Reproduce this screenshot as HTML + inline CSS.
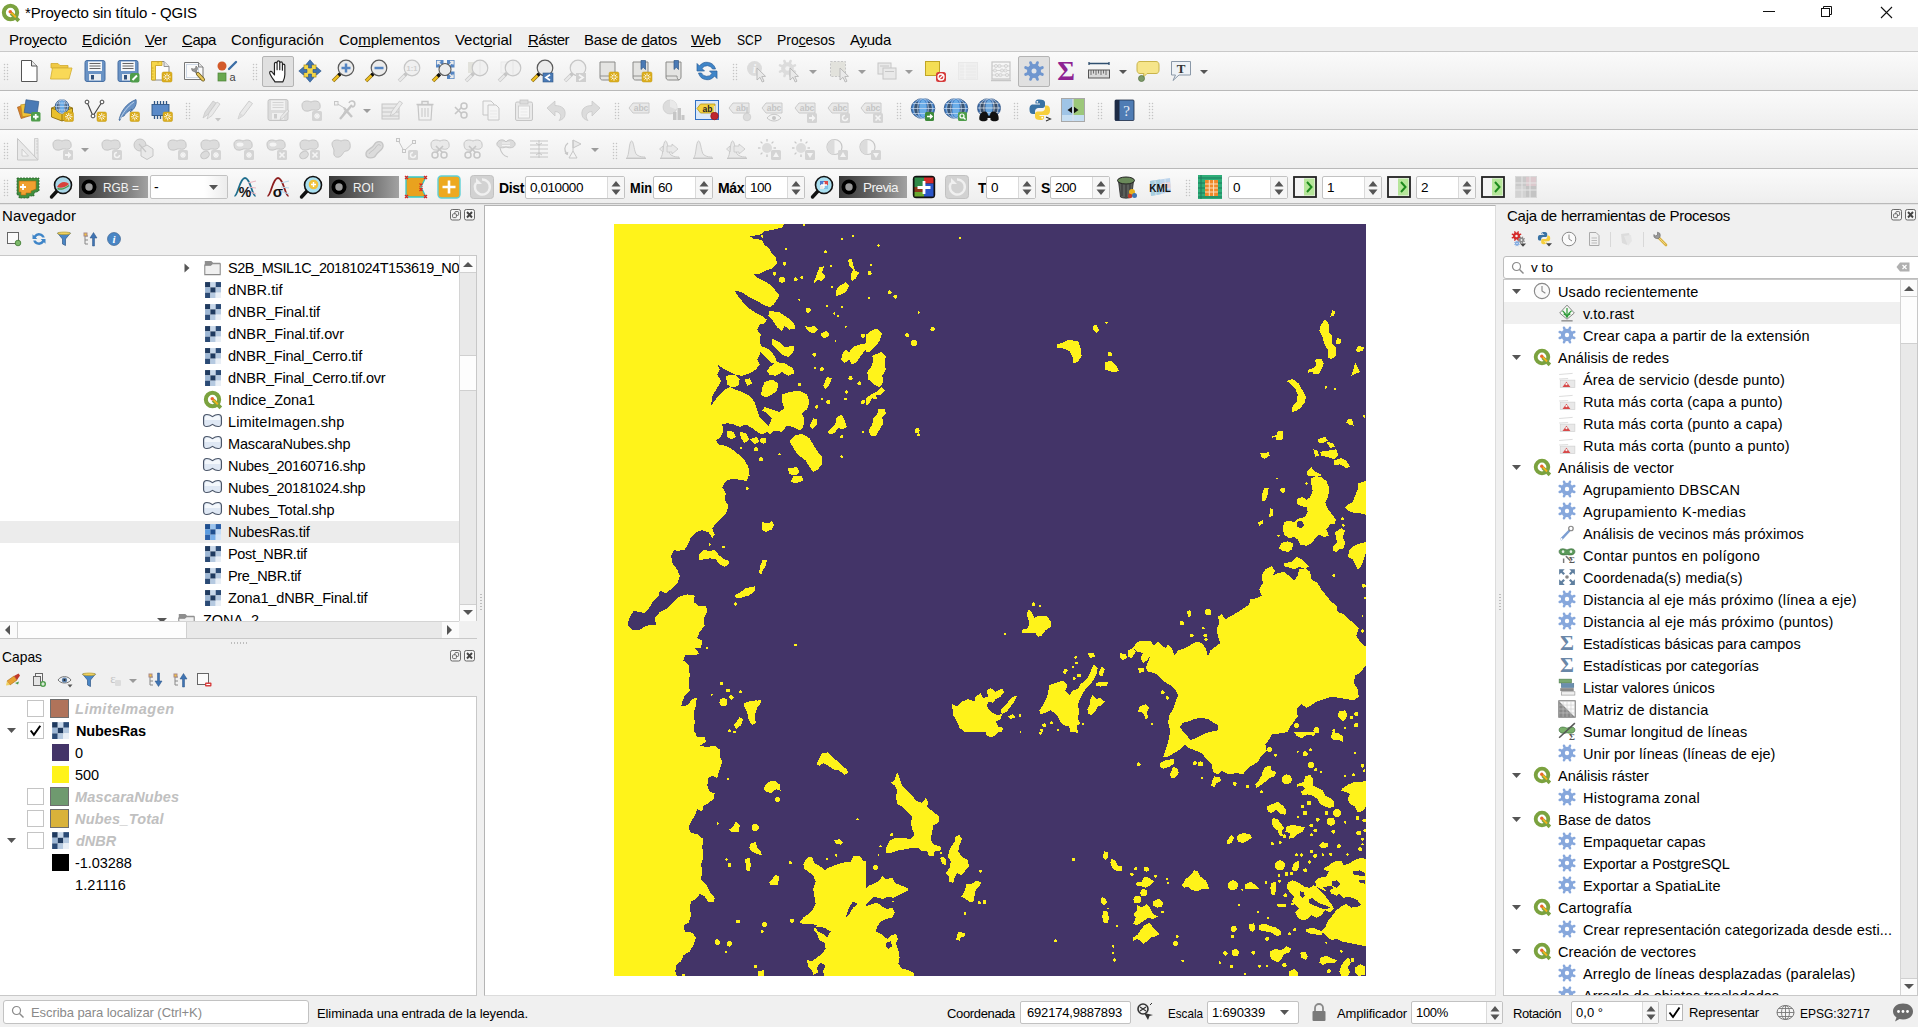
<!DOCTYPE html>
<html lang="es"><head><meta charset="utf-8"><title>*Proyecto sin título - QGIS</title><style>
html,body{margin:0;padding:0;}
body{width:1918px;height:1027px;overflow:hidden;background:#f0f0f0;font-family:"Liberation Sans", sans-serif;}
#app{position:relative;width:1918px;height:1027px;overflow:hidden;background:#f0f0f0;}
.b{position:absolute;}
.ic{position:absolute;overflow:visible;}
.t{position:absolute;white-space:nowrap;line-height:20px;height:20px;}
.t u{text-decoration:underline;text-underline-offset:1px;}
</style></head>
<body><div id="app">
<div class="b" style="left:0px;top:0px;width:1918px;height:27px;background:#fff;"></div>
<svg class="ic" style="left:1px;top:3px" width="19" height="19" viewBox="0 0 16 16"><circle cx="8" cy="8" r="5.6" fill="none" stroke="#7ba23f" stroke-width="3.4"/><path d="M8.5 8.5 L15 15" stroke="#7ba23f" stroke-width="3.2"/><path d="M8 7.5 L12.5 12" stroke="#f0b41c" stroke-width="1.6"/><circle cx="7.8" cy="7.3" r="1.5" fill="#e8682c"/></svg>
<span class="t" style="left:25px;top:3px;font-size:15px;color:#000;letter-spacing:-0.145px;">*Proyecto sin título - QGIS</span>
<svg class="ic" style="left:1755px;top:0px" width="163" height="27" viewBox="0 0 163 27"><path d="M8 11.500 H20" stroke="#111" stroke-width="1"/><rect x="66.5" y="8.500" width="8" height="8" fill="none" stroke="#111"/><path d="M68.500 8.500 V6.500 H76.500 V14.500 H74.500" fill="none" stroke="#111"/><path d="M126 7 L137 18 M137 7 L126 18" stroke="#111" stroke-width="1.1"/></svg>
<div class="b" style="left:0px;top:27px;width:1918px;height:24px;background:#f0f0f0;"></div>
<div class="b" style="left:0px;top:51px;width:1918px;height:1px;background:#c9c9c9;"></div>
<span class="t" style="left:9px;top:29.5px;font-size:15px;color:#000;letter-spacing:-0.150px;">Pro<u>y</u>ecto</span>
<span class="t" style="left:82px;top:29.5px;font-size:15px;color:#000;letter-spacing:-0.031px;"><u>E</u>dición</span>
<span class="t" style="left:145px;top:29.5px;font-size:15px;color:#000;letter-spacing:-0.177px;"><u>V</u>er</span>
<span class="t" style="left:182px;top:29.5px;font-size:15px;color:#000;letter-spacing:-0.469px;"><u>C</u>apa</span>
<span class="t" style="left:231px;top:29.5px;font-size:15px;color:#000;letter-spacing:0.032px;">Con<u>f</u>iguración</span>
<span class="t" style="left:339px;top:29.5px;font-size:15px;color:#000;letter-spacing:0.008px;">Co<u>m</u>plementos</span>
<span class="t" style="left:455px;top:29.5px;font-size:15px;color:#000;letter-spacing:-0.061px;">Vect<u>o</u>rial</span>
<span class="t" style="left:528px;top:29.5px;font-size:15px;color:#000;letter-spacing:-0.534px;"><u>R</u>áster</span>
<span class="t" style="left:584px;top:29.5px;font-size:15px;color:#000;letter-spacing:-0.225px;">Base de <u>d</u>atos</span>
<span class="t" style="left:691px;top:29.5px;font-size:15px;color:#000;letter-spacing:-0.193px;"><u>W</u>eb</span>
<span class="t" style="left:737px;top:29.5px;font-size:15px;color:#000;transform:scaleX(0.8105);transform-origin:0 50%;">SCP</span>
<span class="t" style="left:777px;top:29.5px;font-size:15px;color:#000;transform:scaleX(0.9275);transform-origin:0 50%;">Pro<u>c</u>esos</span>
<span class="t" style="left:850px;top:29.5px;font-size:15px;color:#000;letter-spacing:-0.253px;">A<u>y</u>uda</span>
<div class="b" style="left:0px;top:52px;width:1918px;height:38px;background:linear-gradient(#fafafa,#eeeeee);"></div>
<div class="b" style="left:0px;top:90px;width:1918px;height:1px;background:#b9b9b9;"></div>
<div class="b" style="left:0px;top:91px;width:1918px;height:38px;background:linear-gradient(#fafafa,#eeeeee);"></div>
<div class="b" style="left:0px;top:129px;width:1918px;height:1px;background:#b9b9b9;"></div>
<div class="b" style="left:0px;top:130px;width:1918px;height:38px;background:linear-gradient(#fafafa,#eeeeee);"></div>
<div class="b" style="left:0px;top:168px;width:1918px;height:1px;background:#b9b9b9;"></div>
<div class="b" style="left:0px;top:169px;width:1918px;height:34px;background:linear-gradient(#fafafa,#eeeeee);"></div>
<div class="b" style="left:0px;top:203px;width:1918px;height:1px;background:#b9b9b9;"></div>
<div class="b" style="left:0px;top:204px;width:1918px;height:1px;background:#e4e4e4;"></div>
<div class="b" style="left:3px;top:63px;width:6px;height:18px;background-image:radial-gradient(circle,#c4c4c4 0.75px,transparent 1.05px);background-size:3px 3px"></div>
<svg class="ic" style="left:17px;top:59px" width="24" height="24" viewBox="0 0 24 24"><path d="M4.500 1.500 H14.500 L20 7 V22.500 H4.500Z" fill="#fff" stroke="#555" stroke-width="1"/><path d="M14.500 1.500 V7 H20" fill="#e8e8e8" stroke="#555" stroke-width="1"/></svg>
<svg class="ic" style="left:49px;top:59px" width="24" height="24" viewBox="0 0 24 24"><path d="M2 6 V4.5 H9 L11 6.5 H19 V9 H2Z" fill="#f0c945" stroke="#d0a92e" stroke-width="0.8"/><path d="M1.5 20 L3.5 9 H23 L20 20Z" fill="#f9d957" stroke="#d6b23a" stroke-width="0.9"/></svg>
<svg class="ic" style="left:83px;top:59px" width="24" height="24" viewBox="0 0 24 24"><rect x="2" y="1.5" width="20" height="21" rx="2" fill="#6a93c5" stroke="#466fa3" stroke-width="1"/><rect x="5" y="2.5" width="14" height="9.5" fill="#f4f6f8"/><line x1="6.5" y1="4.5" x2="17.5" y2="4.5" stroke="#555" stroke-width="0.9"/><line x1="6.5" y1="7" x2="17.5" y2="7" stroke="#555" stroke-width="0.9"/><line x1="6.5" y1="9.5" x2="17.5" y2="9.5" stroke="#555" stroke-width="0.9"/><rect x="6" y="15" width="12" height="6.5" fill="#e8ecf0"/><rect x="8" y="16" width="3" height="4.5" fill="#2f4f7a"/></svg>
<svg class="ic" style="left:116px;top:59px" width="24" height="24" viewBox="0 0 24 24"><rect x="2" y="1.5" width="20" height="21" rx="2" fill="#6a93c5" stroke="#466fa3" stroke-width="1"/><rect x="5" y="2.5" width="14" height="9.5" fill="#f4f6f8"/><line x1="6.5" y1="4.5" x2="17.5" y2="4.5" stroke="#555" stroke-width="0.9"/><line x1="6.5" y1="7" x2="17.5" y2="7" stroke="#555" stroke-width="0.9"/><line x1="6.5" y1="9.5" x2="17.5" y2="9.5" stroke="#555" stroke-width="0.9"/><rect x="6" y="15" width="12" height="6.5" fill="#e8ecf0"/><rect x="8" y="16" width="3" height="4.5" fill="#2f4f7a"/><rect x="14" y="14" width="9.5" height="9.5" rx="2" fill="#4f9d4b"/><path d="M16.5 21 L21 16.5" stroke="#fff" stroke-width="2"/></svg>
<svg class="ic" style="left:149px;top:59px" width="24" height="24" viewBox="0 0 24 24"><path d="M3 2.5 H15 L20 7.5 V21 H3Z" fill="#fdfdfd" stroke="#8a8a8a" stroke-width="1"/><path d="M15 2.5 V7.5 H20" fill="#e4e4e4" stroke="#8a8a8a" stroke-width="0.9"/><path d="M2.5 2.5 H13 V6.5 H6.5 V21 H2.5Z" fill="#f6d648" stroke="#c9a52a" stroke-width="0.9"/><path d="M2.5 9 h2 M2.5 12 h2 M2.5 15 h2 M2.5 18 h2 M9 2.5 v2" stroke="#c9a52a" stroke-width="0.8"/><rect x="13" y="13" width="10" height="10" rx="1.5" fill="#dcae1e" stroke="#c39a14" stroke-width="0.5"/><g stroke="#fff" stroke-width="0.9" stroke-linecap="round"><line x1="14.7" y1="18.0" x2="21.3" y2="18.0"/><line x1="18.0" y1="14.7" x2="18.0" y2="21.3"/><line x1="15.7" y1="15.7" x2="20.3" y2="20.3"/><line x1="15.7" y1="20.3" x2="20.3" y2="15.7"/></g><circle cx="18.0" cy="18.0" r="1.1" fill="#dcae1e"/></svg>
<svg class="ic" style="left:182px;top:59px" width="24" height="24" viewBox="0 0 24 24"><path d="M2.5 3.5 H16.5 L21 8 V20.5 H2.5Z" fill="#fbfbfb" stroke="#777" stroke-width="1"/><rect x="4.5" y="5.500" width="12" height="13" fill="none" stroke="#c4d0e0" stroke-width="0.8"/><path d="M16.500 3.500 V8 H21" fill="#e0e0e0" stroke="#777" stroke-width="0.9"/><path d="M9.500 9.500 a3 3 0 1 0 4.500 -2.500 l-0.500 2.500 l-2 0.500z" fill="#9a9a9a" stroke="#6a6a6a" stroke-width="0.6"/><path d="M13 12 L16 15" stroke="#8a8a8a" stroke-width="2.4"/><path d="M16 15 L21 20.500" stroke="#6b5a20" stroke-width="4" stroke-linecap="round"/><path d="M16 15 L21 20.500" stroke="#e8c75a" stroke-width="2.4" stroke-linecap="round"/></svg>
<svg class="ic" style="left:215px;top:59px" width="24" height="24" viewBox="0 0 24 24"><circle cx="7" cy="7" r="4.5" fill="#d35a2a"/><rect x="3" y="14" width="8" height="8" fill="#6aa84f" stroke="#4c8237" stroke-width="0.7"/><line x1="14" y1="10" x2="21" y2="3" stroke="#3c6ea5" stroke-width="2.4" stroke-linecap="round"/><text x="17.5" y="21.5" font-family="Liberation Sans, sans-serif" font-size="11" text-anchor="middle" fill="#444">a</text></svg>
<div class="b" style="left:252px;top:63px;width:6px;height:18px;background-image:radial-gradient(circle,#c4c4c4 0.75px,transparent 1.05px);background-size:3px 3px"></div>
<div class="b" style="left:262px;top:56px;width:32px;height:31px;background:#e0e0e0;border:1px solid #b4b4b4;box-sizing:border-box;border-radius:2px;"></div>
<svg class="ic" style="left:265px;top:59px" width="24" height="24" viewBox="0 0 24 24"><g transform="translate(1.500 -0.500) scale(1.06)"><path d="M8 22 C6 19 3.5 16 3 13.5 C2.8 12 4.5 11.5 5.5 13 L7.5 15.5 V5 C7.5 3.3 10 3.3 10 5 V10.5 V3.5 C10 1.8 12.5 1.8 12.5 3.5 V10.5 V4.5 C12.5 2.8 15 2.8 15 4.5 V11 V6.5 C15 5 17.3 5 17.3 6.5 V15 C17.3 18 16.5 20 15.5 22Z" fill="#fff" stroke="#222" stroke-width="1.1" stroke-linejoin="round"/></g></svg>
<svg class="ic" style="left:298px;top:59px" width="24" height="24" viewBox="0 0 24 24"><rect x="6" y="6" width="12" height="12" fill="#f2d64a" stroke="#b79b1d" stroke-width="0.8"/><g fill="#3f74b3" stroke="#2a5285" stroke-width="0.6"><path d="M12 0.8 L16 5.5 H13.5 V9 H10.5 V5.5 H8Z"/><path d="M12 23.2 L16 18.5 H13.5 V15 H10.5 V18.5 H8Z"/><path d="M0.8 12 L5.5 8 V10.5 H9 V13.5 H5.5 V16Z"/><path d="M23.2 12 L18.5 8 V10.5 H15 V13.5 H18.5 V16Z"/></g></svg>
<svg class="ic" style="left:331px;top:59px" width="24" height="24" viewBox="0 0 24 24"><line x1="2" y1="22" x2="9" y2="15" stroke="#8a6d10" stroke-width="3.6"/><line x1="2.300" y1="21.700" x2="8.500" y2="15.500" stroke="#f0c020" stroke-width="2.2"/><line x1="7.500" y1="16.500" x2="9.800" y2="14.200" stroke="#111" stroke-width="3.2"/><circle cx="15" cy="9" r="7.8" fill="#ebebeb" stroke="#5a5a5a" stroke-width="1.2"/><path d="M10.500 9 H19.500 M15 4.500 V13.500" stroke="#5585c2" stroke-width="2.5"/></svg>
<svg class="ic" style="left:364px;top:59px" width="24" height="24" viewBox="0 0 24 24"><line x1="2" y1="22" x2="9" y2="15" stroke="#8a6d10" stroke-width="3.6"/><line x1="2.300" y1="21.700" x2="8.500" y2="15.500" stroke="#f0c020" stroke-width="2.2"/><line x1="7.500" y1="16.500" x2="9.800" y2="14.200" stroke="#111" stroke-width="3.2"/><circle cx="15" cy="9" r="7.8" fill="#ebebeb" stroke="#5a5a5a" stroke-width="1.2"/><path d="M10.500 9 H19.500" stroke="#5585c2" stroke-width="2.5"/></svg>
<svg class="ic" style="left:397px;top:59px" width="24" height="24" viewBox="0 0 24 24"><line x1="2" y1="22" x2="9" y2="15" stroke="#c6c6c6" stroke-width="3.6"/><line x1="2.300" y1="21.700" x2="8.500" y2="15.500" stroke="#e9e9e9" stroke-width="2.2"/><line x1="7.500" y1="16.500" x2="9.800" y2="14.200" stroke="#c6c6c6" stroke-width="3.2"/><circle cx="15" cy="9" r="7.8" fill="#f0f0f0" stroke="#c6c6c6" stroke-width="1.2"/><text x="15" y="11.800" font-family="Liberation Sans, sans-serif" font-size="7.5" font-weight="bold" text-anchor="middle" fill="#cfcfcf">1:1</text></svg>
<svg class="ic" style="left:431px;top:59px" width="24" height="24" viewBox="0 0 24 24"><line x1="2" y1="22" x2="8" y2="16" stroke="#8a6d10" stroke-width="3.6"/><line x1="2.300" y1="21.700" x2="7.500" y2="16.500" stroke="#f0c020" stroke-width="2.2"/><line x1="6.500" y1="17.500" x2="9" y2="15" stroke="#111" stroke-width="3.2"/><g fill="#5585c2"><rect x="5" y="1" width="7.500" height="7.500"/><rect x="16" y="1" width="7.500" height="7.500"/><rect x="16" y="12.500" width="7.500" height="7.500"/></g><circle cx="14" cy="10.500" r="6" fill="#ebebeb" stroke="#5a5a5a" stroke-width="1.1"/><g stroke="#ebebeb" stroke-width="1.4" fill="none"><path d="M6.500 2.500 L10 6 M6.500 5.500 V2.500 H9.500"/><path d="M22 2.500 L18.500 6 M22 5.500 V2.500 H19"/><path d="M22 18.500 L18.500 15 M22 15.500 V18.500 H19"/></g></svg>
<svg class="ic" style="left:464px;top:59px" width="24" height="24" viewBox="0 0 24 24"><rect x="4" y="3" width="11" height="11" fill="#e2e2dc"/><line x1="2" y1="22" x2="9" y2="15" stroke="#c6c6c6" stroke-width="3.6"/><line x1="2.300" y1="21.700" x2="8.500" y2="15.500" stroke="#e9e9e9" stroke-width="2.2"/><line x1="7.500" y1="16.500" x2="9.800" y2="14.200" stroke="#c6c6c6" stroke-width="3.2"/><circle cx="16" cy="9" r="7.8" fill="#f0f0f0" stroke="#c6c6c6" stroke-width="1.2"/><path d="M16 2 V16" stroke="#e9e9e9" stroke-width="1.5"/></svg>
<svg class="ic" style="left:497px;top:59px" width="24" height="24" viewBox="0 0 24 24"><rect x="4" y="3" width="11" height="11" fill="#f2f2f2" stroke="#e9e9e9"/><line x1="2" y1="22" x2="9" y2="15" stroke="#c6c6c6" stroke-width="3.6"/><line x1="2.300" y1="21.700" x2="8.500" y2="15.500" stroke="#e9e9e9" stroke-width="2.2"/><line x1="7.500" y1="16.500" x2="9.800" y2="14.200" stroke="#c6c6c6" stroke-width="3.2"/><circle cx="16" cy="9" r="7.8" fill="#f0f0f0" stroke="#c6c6c6" stroke-width="1.2"/><path d="M16 2 V16" stroke="#e9e9e9" stroke-width="1.5"/></svg>
<svg class="ic" style="left:530px;top:59px" width="24" height="24" viewBox="0 0 24 24"><line x1="2" y1="22" x2="9" y2="15" stroke="#8a6d10" stroke-width="3.6"/><line x1="2.300" y1="21.700" x2="8.500" y2="15.500" stroke="#f0c020" stroke-width="2.2"/><line x1="7.500" y1="16.500" x2="9.800" y2="14.200" stroke="#111" stroke-width="3.2"/><circle cx="15" cy="9" r="7.8" fill="#ebebeb" stroke="#5a5a5a" stroke-width="1.2"/><rect x="13" y="14" width="10" height="9" fill="#4a7ab5" stroke="#2f5786" stroke-width="0.6"/><path d="M20 15.8 L16 18.5 L20 21.2" fill="none" stroke="#fff" stroke-width="1.8"/></svg>
<svg class="ic" style="left:563px;top:59px" width="24" height="24" viewBox="0 0 24 24"><line x1="2" y1="22" x2="9" y2="15" stroke="#c6c6c6" stroke-width="3.6"/><line x1="2.300" y1="21.700" x2="8.500" y2="15.500" stroke="#e9e9e9" stroke-width="2.2"/><line x1="7.500" y1="16.500" x2="9.800" y2="14.200" stroke="#c6c6c6" stroke-width="3.2"/><circle cx="15" cy="9" r="7.8" fill="#f0f0f0" stroke="#c6c6c6" stroke-width="1.2"/><rect x="13" y="14" width="10" height="9" fill="#cfcfcf"/><path d="M16 15.8 L20 18.5 L16 21.2" fill="none" stroke="#f4f4f4" stroke-width="1.8"/></svg>
<svg class="ic" style="left:596px;top:59px" width="24" height="24" viewBox="0 0 24 24"><path d="M4 3 H19 V18 C19 20 17.5 21 16 21 H6.5 C4.5 21 4 19.5 4 18Z" fill="#e4e4e2" stroke="#8a8a88" stroke-width="1"/><path d="M4 17 H15 C15 19.5 16 21 17 21" fill="none" stroke="#8a8a88" stroke-width="0.9"/><rect x="13" y="13" width="10" height="10" rx="1.5" fill="#dcae1e" stroke="#c39a14" stroke-width="0.5"/><g stroke="#fff" stroke-width="0.9" stroke-linecap="round"><line x1="14.7" y1="18.0" x2="21.3" y2="18.0"/><line x1="18.0" y1="14.7" x2="18.0" y2="21.3"/><line x1="15.7" y1="15.7" x2="20.3" y2="20.3"/><line x1="15.7" y1="20.3" x2="20.3" y2="15.7"/></g><circle cx="18.0" cy="18.0" r="1.1" fill="#dcae1e"/></svg>
<svg class="ic" style="left:629px;top:59px" width="24" height="24" viewBox="0 0 24 24"><path d="M4 3 H19 V18 C19 20 17.5 21 16 21 H6.5 C4.5 21 4 19.5 4 18Z" fill="#e4e4e2" stroke="#8a8a88" stroke-width="1"/><path d="M4 17 H15 C15 19.5 16 21 17 21" fill="none" stroke="#8a8a88" stroke-width="0.9"/><path d="M12 1.5 H16.5 V10.5 L14.25 8.3 L12 10.5Z" fill="#4a7ab5" stroke="#2f5786" stroke-width="0.7"/><rect x="13" y="13" width="10" height="10" rx="1.5" fill="#dcae1e" stroke="#c39a14" stroke-width="0.5"/><g stroke="#fff" stroke-width="0.9" stroke-linecap="round"><line x1="14.7" y1="18.0" x2="21.3" y2="18.0"/><line x1="18.0" y1="14.7" x2="18.0" y2="21.3"/><line x1="15.7" y1="15.7" x2="20.3" y2="20.3"/><line x1="15.7" y1="20.3" x2="20.3" y2="15.7"/></g><circle cx="18.0" cy="18.0" r="1.1" fill="#dcae1e"/></svg>
<svg class="ic" style="left:662px;top:59px" width="24" height="24" viewBox="0 0 24 24"><path d="M4 3 H19 V18 C19 20 17.5 21 16 21 H6.5 C4.5 21 4 19.5 4 18Z" fill="#e4e4e2" stroke="#8a8a88" stroke-width="1"/><path d="M4 17 H15 C15 19.5 16 21 17 21" fill="none" stroke="#8a8a88" stroke-width="0.9"/><path d="M12 1.5 H16.5 V10.5 L14.25 8.3 L12 10.5Z" fill="#4a7ab5" stroke="#2f5786" stroke-width="0.7"/></svg>
<svg class="ic" style="left:695px;top:59px" width="24" height="24" viewBox="0 0 24 24"><path d="M20.5 10 A9 9 0 0 0 4.5 7 L2 4.5 V12 H9.5 L7 9.5 A6 6 0 0 1 17.5 10Z" fill="#3f85c8" stroke="#2a5f99" stroke-width="0.7"/><path d="M3.5 14 A9 9 0 0 0 19.5 17 L22 19.5 V12 H14.5 L17 14.5 A6 6 0 0 1 6.5 14Z" fill="#3f85c8" stroke="#2a5f99" stroke-width="0.7"/></svg>
<div class="b" style="left:732px;top:63px;width:6px;height:18px;background-image:radial-gradient(circle,#c4c4c4 0.75px,transparent 1.05px);background-size:3px 3px"></div>
<svg class="ic" style="left:745px;top:59px" width="24" height="24" viewBox="0 0 24 24"><circle cx="9.5" cy="9.5" r="7.5" fill="#dcdcdc"/><text x="9.5" y="13.5" font-family="Liberation Serif, serif" font-size="12" font-weight="bold" font-style="italic" text-anchor="middle" fill="#f4f4f4">i</text><path d="M12 9 L12 21 L15 18.3 L17.2 23 L19 22.2 L16.8 17.6 L20.5 17.3Z" fill="#e9e9e9" stroke="#b5b5b5" stroke-width="0.9"/></svg>
<svg class="ic" style="left:778px;top:59px" width="24" height="24" viewBox="0 0 24 24"><line x1="14.07" y1="11.39" x2="16.98" y2="12.60" stroke="#dcdcdc" stroke-width="2.61" stroke-linecap="round"/><line x1="11.39" y1="14.07" x2="12.60" y2="16.98" stroke="#dcdcdc" stroke-width="2.61" stroke-linecap="round"/><line x1="7.61" y1="14.07" x2="6.40" y2="16.98" stroke="#dcdcdc" stroke-width="2.61" stroke-linecap="round"/><line x1="4.93" y1="11.39" x2="2.02" y2="12.60" stroke="#dcdcdc" stroke-width="2.61" stroke-linecap="round"/><line x1="4.93" y1="7.61" x2="2.02" y2="6.40" stroke="#dcdcdc" stroke-width="2.61" stroke-linecap="round"/><line x1="7.61" y1="4.93" x2="6.40" y2="2.02" stroke="#dcdcdc" stroke-width="2.61" stroke-linecap="round"/><line x1="11.39" y1="4.93" x2="12.60" y2="2.02" stroke="#dcdcdc" stroke-width="2.61" stroke-linecap="round"/><line x1="14.07" y1="7.61" x2="16.98" y2="6.40" stroke="#dcdcdc" stroke-width="2.61" stroke-linecap="round"/><circle cx="9.5" cy="9.5" r="6.30" fill="#dcdcdc"/><circle cx="9.5" cy="9.5" r="2.25" fill="#f2f2f2"/><path d="M12 9 L12 21 L15 18.3 L17.2 23 L19 22.2 L16.8 17.6 L20.5 17.3Z" fill="#e9e9e9" stroke="#b5b5b5" stroke-width="0.9"/></svg>
<svg class="ic" style="left:809.0px;top:69.5px" width="8" height="4" viewBox="0 0 8 4"><path d="M0 0 H8 L4.0 4Z" fill="#9c9c9c"/></svg>
<svg class="ic" style="left:828px;top:59px" width="24" height="24" viewBox="0 0 24 24"><rect x="2.5" y="2.5" width="15" height="15" fill="#e2e2dc" stroke="#c6c6c6" stroke-dasharray="2 1.5"/><path d="M12 9 L12 21 L15 18.3 L17.2 23 L19 22.2 L16.8 17.6 L20.5 17.3Z" fill="#e9e9e9" stroke="#b5b5b5" stroke-width="0.9"/></svg>
<svg class="ic" style="left:858.0px;top:69.5px" width="8" height="4" viewBox="0 0 8 4"><path d="M0 0 H8 L4.0 4Z" fill="#9c9c9c"/></svg>
<svg class="ic" style="left:875px;top:59px" width="24" height="24" viewBox="0 0 24 24"><rect x="3" y="4" width="13" height="11" fill="#e9e9e9" stroke="#c6c6c6"/><rect x="8" y="9" width="13" height="11" fill="#e9e9e9" stroke="#c6c6c6"/><line x1="5" y1="7" x2="14" y2="7" stroke="#c6c6c6"/><line x1="10" y1="12.5" x2="19" y2="12.5" stroke="#c6c6c6"/></svg>
<svg class="ic" style="left:905.0px;top:69.5px" width="8" height="4" viewBox="0 0 8 4"><path d="M0 0 H8 L4.0 4Z" fill="#9c9c9c"/></svg>
<svg class="ic" style="left:923px;top:59px" width="24" height="24" viewBox="0 0 24 24"><rect x="2.5" y="2.5" width="14" height="14" fill="#f4de55" stroke="#c0a526" stroke-width="1"/><rect x="13" y="13" width="10" height="10" rx="2.5" fill="#d63a3a"/><circle cx="18" cy="18" r="3" fill="none" stroke="#fff" stroke-width="1.3"/><line x1="16" y1="20" x2="20" y2="16" stroke="#fff" stroke-width="1.3"/></svg>
<svg class="ic" style="left:956px;top:59px" width="24" height="24" viewBox="0 0 24 24"><rect x="2.5" y="3.5" width="19" height="17" fill="#efefef" stroke="#e9e9e9"/><line x1="4" y1="7" x2="20" y2="7" stroke="#e9e9e9" stroke-width="1.2"/><line x1="4" y1="10" x2="20" y2="10" stroke="#e9e9e9" stroke-width="1.2"/><line x1="4" y1="13" x2="20" y2="13" stroke="#e9e9e9" stroke-width="1.2"/><line x1="4" y1="16" x2="20" y2="16" stroke="#e9e9e9" stroke-width="1.2"/><line x1="4" y1="19" x2="20" y2="19" stroke="#e9e9e9" stroke-width="1.2"/><line x1="9" y1="4" x2="9" y2="20" stroke="#f6f6f6"/></svg>
<svg class="ic" style="left:989px;top:59px" width="24" height="24" viewBox="0 0 24 24"><rect x="3" y="3" width="18" height="17" fill="none" stroke="#c6c6c6" stroke-width="1.2"/><line x1="2" y1="21.5" x2="22" y2="21.5" stroke="#c6c6c6" stroke-width="1.5"/><line x1="3" y1="7" x2="21" y2="7" stroke="#c6c6c6" stroke-width="0.7"/><circle cx="7" cy="7" r="1.6" fill="#e9e9e9" stroke="#c6c6c6" stroke-width="0.6"/><circle cx="10.5" cy="7" r="1.6" fill="#e9e9e9" stroke="#c6c6c6" stroke-width="0.6"/><circle cx="17" cy="7" r="1.6" fill="#e9e9e9" stroke="#c6c6c6" stroke-width="0.6"/><line x1="3" y1="11.5" x2="21" y2="11.5" stroke="#c6c6c6" stroke-width="0.7"/><circle cx="6" cy="11.5" r="1.6" fill="#e9e9e9" stroke="#c6c6c6" stroke-width="0.6"/><circle cx="13" cy="11.5" r="1.6" fill="#e9e9e9" stroke="#c6c6c6" stroke-width="0.6"/><circle cx="16.5" cy="11.5" r="1.6" fill="#e9e9e9" stroke="#c6c6c6" stroke-width="0.6"/><line x1="3" y1="16" x2="21" y2="16" stroke="#c6c6c6" stroke-width="0.7"/><circle cx="8" cy="16" r="1.6" fill="#e9e9e9" stroke="#c6c6c6" stroke-width="0.6"/><circle cx="11.5" cy="16" r="1.6" fill="#e9e9e9" stroke="#c6c6c6" stroke-width="0.6"/><circle cx="18" cy="16" r="1.6" fill="#e9e9e9" stroke="#c6c6c6" stroke-width="0.6"/></svg>
<div class="b" style="left:1018px;top:56px;width:32px;height:31px;background:#e0e0e0;border:1px solid #b4b4b4;box-sizing:border-box;border-radius:2px;"></div>
<svg class="ic" style="left:1022px;top:59px" width="24" height="24" viewBox="0 0 24 24"><line x1="17.08" y1="14.10" x2="20.31" y2="15.44" stroke="#6f96cf" stroke-width="2.90" stroke-linecap="round"/><line x1="14.10" y1="17.08" x2="15.44" y2="20.31" stroke="#6f96cf" stroke-width="2.90" stroke-linecap="round"/><line x1="9.90" y1="17.08" x2="8.56" y2="20.31" stroke="#6f96cf" stroke-width="2.90" stroke-linecap="round"/><line x1="6.92" y1="14.10" x2="3.69" y2="15.44" stroke="#6f96cf" stroke-width="2.90" stroke-linecap="round"/><line x1="6.92" y1="9.90" x2="3.69" y2="8.56" stroke="#6f96cf" stroke-width="2.90" stroke-linecap="round"/><line x1="9.90" y1="6.92" x2="8.56" y2="3.69" stroke="#6f96cf" stroke-width="2.90" stroke-linecap="round"/><line x1="14.10" y1="6.92" x2="15.44" y2="3.69" stroke="#6f96cf" stroke-width="2.90" stroke-linecap="round"/><line x1="17.08" y1="9.90" x2="20.31" y2="8.56" stroke="#6f96cf" stroke-width="2.90" stroke-linecap="round"/><circle cx="12" cy="12" r="7.00" fill="#6f96cf"/><circle cx="12" cy="12" r="2.50" fill="#e0e4ea"/></svg>
<svg class="ic" style="left:1054px;top:59px" width="24" height="24" viewBox="0 0 24 24"><text x="12" y="21" font-family="Liberation Serif, serif" font-size="27" font-weight="bold" text-anchor="middle" fill="#8e2392">Σ</text></svg>
<svg class="ic" style="left:1087px;top:59px" width="24" height="24" viewBox="0 0 24 24"><path d="M2 6 V3 M22 6 V3 M2 4.5 H22" stroke="#2f4f6f" stroke-width="1.3" fill="none"/><rect x="1.5" y="11" width="21" height="8" fill="#d8d8d8" stroke="#555" stroke-width="1"/><line x1="4" y1="11" x2="4" y2="16" stroke="#555" stroke-width="0.8"/><line x1="6.5" y1="11" x2="6.5" y2="14.5" stroke="#555" stroke-width="0.8"/><line x1="9" y1="11" x2="9" y2="16" stroke="#555" stroke-width="0.8"/><line x1="11.5" y1="11" x2="11.5" y2="14.5" stroke="#555" stroke-width="0.8"/><line x1="14" y1="11" x2="14" y2="16" stroke="#555" stroke-width="0.8"/><line x1="16.5" y1="11" x2="16.5" y2="14.5" stroke="#555" stroke-width="0.8"/><line x1="19" y1="11" x2="19" y2="16" stroke="#555" stroke-width="0.8"/></svg>
<svg class="ic" style="left:1119.0px;top:69.5px" width="8" height="4" viewBox="0 0 8 4"><path d="M0 0 H8 L4.0 4Z" fill="#555"/></svg>
<svg class="ic" style="left:1136px;top:59px" width="24" height="24" viewBox="0 0 24 24"><path d="M4 2.5 H20 C22 2.5 23 4 23 6 V11 C23 13 22 14.5 20 14.5 H11 L7 18.5 L8 14.5 H4 C2 14.5 1 13 1 11 V6 C1 4 2 2.5 4 2.5Z" fill="#f6e58a" stroke="#c9b44a" stroke-width="1"/><circle cx="5.5" cy="19.5" r="3" fill="#7c9a69" stroke="#5a7648" stroke-width="0.8"/></svg>
<svg class="ic" style="left:1169px;top:59px" width="24" height="24" viewBox="0 0 24 24"><path d="M2.5 2.5 H21.5 V16 H10 L4 21.5 L6.5 16 H2.5Z" fill="#eef2f6" stroke="#8a98a8" stroke-width="1"/><text x="12" y="14" font-family="Liberation Serif, serif" font-size="13" font-weight="bold" text-anchor="middle" fill="#333">T</text></svg>
<svg class="ic" style="left:1200.0px;top:69.5px" width="8" height="4" viewBox="0 0 8 4"><path d="M0 0 H8 L4.0 4Z" fill="#555"/></svg>
<div class="b" style="left:3px;top:102px;width:6px;height:18px;background-image:radial-gradient(circle,#c4c4c4 0.75px,transparent 1.05px);background-size:3px 3px"></div>
<svg class="ic" style="left:17px;top:98px" width="24" height="24" viewBox="0 0 24 24"><rect x="2" y="7" width="12" height="12" transform="rotate(-18 8 13)" fill="#d9822b" stroke="#a55d16" stroke-width="0.6"/><rect x="4.5" y="6" width="12" height="12" transform="rotate(-8 10 12)" fill="#f0c23a" stroke="#b78f1a" stroke-width="0.6"/><rect x="8" y="2.5" width="13" height="13" transform="rotate(8 14 9)" fill="#4a7ab5" stroke="#2f5786" stroke-width="0.6"/><rect x="14" y="14" width="9.5" height="9.5" rx="1.5" fill="#4f9d4b"/><path d="M16 18.75 H21.5 M18.75 16 V21.5" stroke="#fff" stroke-width="1.8"/></svg>
<svg class="ic" style="left:50px;top:98px" width="24" height="24" viewBox="0 0 24 24"><path d="M1.5 10 L12 6 L22.5 10 V19 L12 23 L1.5 19Z" fill="#e9c02c" stroke="#8a6d10" stroke-width="0.9"/><path d="M1.5 10 L12 14 L22.5 10 M12 14 V23" fill="none" stroke="#8a6d10" stroke-width="0.9"/><ellipse cx="12" cy="8.5" rx="6.8" ry="6.8" fill="#3f7fc8" stroke="#2b4f80" stroke-width="0.8"/><ellipse cx="8.26" cy="8.5" rx="1.496" ry="4.896" fill="#333" opacity="0.55"/><ellipse cx="15.74" cy="8.5" rx="1.496" ry="4.896" fill="#333" opacity="0.55"/><ellipse cx="12" cy="8.5" rx="2.04" ry="6.12" fill="#7fc0f4" opacity="0.7"/><ellipse cx="12" cy="8.5" rx="3.06" ry="6.8" fill="none" stroke="#cfe0f4" stroke-width="0.7"/><ellipse cx="12" cy="8.5" rx="5.44" ry="6.8" fill="none" stroke="#cfe0f4" stroke-width="0.6"/><line x1="5.2" y1="8.5" x2="18.8" y2="8.5" stroke="#cfe0f4" stroke-width="0.7"/><path d="M6.220000000000001 5.1 H17.78 M6.220000000000001 11.9 H17.78" stroke="#cfe0f4" stroke-width="0.7"/><rect x="14" y="14" width="9.5" height="9.5" rx="1.5" fill="#dcae1e" stroke="#c39a14" stroke-width="0.5"/><g stroke="#fff" stroke-width="0.9" stroke-linecap="round"><line x1="15.45" y1="18.75" x2="22.05" y2="18.75"/><line x1="18.75" y1="15.45" x2="18.75" y2="22.05"/><line x1="16.45" y1="16.45" x2="21.05" y2="21.05"/><line x1="16.45" y1="21.05" x2="21.05" y2="16.45"/></g><circle cx="18.75" cy="18.75" r="1.1" fill="#dcae1e"/></svg>
<svg class="ic" style="left:83px;top:98px" width="24" height="24" viewBox="0 0 24 24"><path d="M4 4 L10 18 L19 4" fill="none" stroke="#444" stroke-width="1.1"/><circle cx="4" cy="4" r="1.9" fill="#fff" stroke="#444"/><circle cx="10" cy="18" r="1.9" fill="#fff" stroke="#444"/><circle cx="19" cy="4" r="1.9" fill="#fff" stroke="#444"/><rect x="14" y="14" width="9.5" height="9.5" rx="1.5" fill="#dcae1e" stroke="#c39a14" stroke-width="0.5"/><g stroke="#fff" stroke-width="0.9" stroke-linecap="round"><line x1="15.45" y1="18.75" x2="22.05" y2="18.75"/><line x1="18.75" y1="15.45" x2="18.75" y2="22.05"/><line x1="16.45" y1="16.45" x2="21.05" y2="21.05"/><line x1="16.45" y1="21.05" x2="21.05" y2="16.45"/></g><circle cx="18.75" cy="18.75" r="1.1" fill="#dcae1e"/></svg>
<svg class="ic" style="left:116px;top:98px" width="24" height="24" viewBox="0 0 24 24"><path d="M3 22 C5 14 9 6 20 1.5 C21 6 19 11 14 14 L16 11 C12 13 9 16 8 18 L5.5 18.5 L3.8 22.5Z" fill="#6a93c5" stroke="#3f679b" stroke-width="0.8"/><path d="M4 21 C7 15 11 9 18 4" fill="none" stroke="#cfe0f2" stroke-width="0.8"/><rect x="14" y="14" width="9.5" height="9.5" rx="1.5" fill="#dcae1e" stroke="#c39a14" stroke-width="0.5"/><g stroke="#fff" stroke-width="0.9" stroke-linecap="round"><line x1="15.45" y1="18.75" x2="22.05" y2="18.75"/><line x1="18.75" y1="15.45" x2="18.75" y2="22.05"/><line x1="16.45" y1="16.45" x2="21.05" y2="21.05"/><line x1="16.45" y1="21.05" x2="21.05" y2="16.45"/></g><circle cx="18.75" cy="18.75" r="1.1" fill="#dcae1e"/></svg>
<svg class="ic" style="left:149px;top:98px" width="24" height="24" viewBox="0 0 24 24"><rect x="3" y="6.5" width="17" height="11" fill="#5a8ac8" stroke="#2f5786" stroke-width="0.9"/><line x1="5.5" y1="3" x2="5.5" y2="6.5" stroke="#2f5786" stroke-width="1.3"/><line x1="5.5" y1="17.5" x2="5.5" y2="21" stroke="#2f5786" stroke-width="1.3"/><line x1="8.5" y1="3" x2="8.5" y2="6.5" stroke="#2f5786" stroke-width="1.3"/><line x1="8.5" y1="17.5" x2="8.5" y2="21" stroke="#2f5786" stroke-width="1.3"/><line x1="11.5" y1="3" x2="11.5" y2="6.5" stroke="#2f5786" stroke-width="1.3"/><line x1="11.5" y1="17.5" x2="11.5" y2="21" stroke="#2f5786" stroke-width="1.3"/><line x1="14.5" y1="3" x2="14.5" y2="6.5" stroke="#2f5786" stroke-width="1.3"/><line x1="14.5" y1="17.5" x2="14.5" y2="21" stroke="#2f5786" stroke-width="1.3"/><line x1="17.5" y1="3" x2="17.5" y2="6.5" stroke="#2f5786" stroke-width="1.3"/><line x1="17.5" y1="17.5" x2="17.5" y2="21" stroke="#2f5786" stroke-width="1.3"/><rect x="14" y="14" width="9.5" height="9.5" rx="1.5" fill="#dcae1e" stroke="#c39a14" stroke-width="0.5"/><g stroke="#fff" stroke-width="0.9" stroke-linecap="round"><line x1="15.45" y1="18.75" x2="22.05" y2="18.75"/><line x1="18.75" y1="15.45" x2="18.75" y2="22.05"/><line x1="16.45" y1="16.45" x2="21.05" y2="21.05"/><line x1="16.45" y1="21.05" x2="21.05" y2="16.45"/></g><circle cx="18.75" cy="18.75" r="1.1" fill="#dcae1e"/></svg>
<div class="b" style="left:185px;top:102px;width:6px;height:18px;background-image:radial-gradient(circle,#c4c4c4 0.75px,transparent 1.05px);background-size:3px 3px"></div>
<svg class="ic" style="left:200px;top:98px" width="24" height="24" viewBox="0 0 24 24"><path d="M3 20 L5 14 L13 3 L16 5 L8 16.5Z" fill="#dcdcdc" stroke="#c6c6c6" stroke-width="0.7"/><path d="M7 21 L9 15 L17 4 L20 6 L12 17.5Z" fill="#e9e9e9" stroke="#c6c6c6" stroke-width="0.7"/><path d="M15 20 h6 l-3 3.5z" fill="#c6c6c6"/></svg>
<svg class="ic" style="left:233px;top:98px" width="24" height="24" viewBox="0 0 24 24"><path d="M5 21 L7 15 L16 3 L19.5 5.5 L10.5 17.5Z" fill="#e9e9e9" stroke="#c6c6c6" stroke-width="0.8"/><path d="M5 21 L7 15 L10.5 17.5Z" fill="#dcdcdc"/></svg>
<svg class="ic" style="left:266px;top:98px" width="24" height="24" viewBox="0 0 24 24"><rect x="2" y="1.5" width="20" height="21" rx="2" fill="#dcdcdc" stroke="#c6c6c6" stroke-width="1"/><rect x="5" y="2.5" width="14" height="9.5" fill="#f0f0f0"/><line x1="6.5" y1="4.5" x2="17.5" y2="4.5" stroke="#d0d0d0" stroke-width="0.9"/><line x1="6.5" y1="7" x2="17.5" y2="7" stroke="#d0d0d0" stroke-width="0.9"/><line x1="6.5" y1="9.5" x2="17.5" y2="9.5" stroke="#d0d0d0" stroke-width="0.9"/><rect x="6" y="15" width="12" height="6.5" fill="#efefef"/><rect x="8" y="16" width="3" height="4.5" fill="#cccccc"/><path d="M14 22 L15 18.5 L21 11.5 L23 13 L17 20Z" fill="#e9e9e9" stroke="#c6c6c6" stroke-width="0.7"/></svg>
<svg class="ic" style="left:299px;top:98px" width="24" height="24" viewBox="0 0 24 24"><path d="M3 7 C3 3 8 2 12 4 C16 2 21 3 21 7 C22 11 19 13 15 12 C12 11 10 14 7 13 C4 13 3 10 3 7Z" fill="#dcdcdc" stroke="#c6c6c6" stroke-width="1"/><rect x="13" y="13" width="10" height="10" rx="1.5" fill="#d4d4d4"/><g stroke="#f4f4f4" stroke-width="1.3"><line x1="15.0" y1="18.0" x2="21.0" y2="18.0"/><line x1="18.0" y1="15.0" x2="18.0" y2="21.0"/><line x1="16.0" y1="16.0" x2="20.0" y2="20.0"/><line x1="16.0" y1="20.0" x2="20.0" y2="16.0"/></g></svg>
<svg class="ic" style="left:332px;top:98px" width="24" height="24" viewBox="0 0 24 24"><path d="M4 5 L14 11 L9 20" fill="none" stroke="#c6c6c6" stroke-width="1"/><rect x="2.5" y="3.5" width="3.5" height="3.5" fill="#f2f2f2" stroke="#c6c6c6"/><path d="M8 21 L20 7 M12 10 L20 19" stroke="#c6c6c6" stroke-width="2.4"/><path d="M17 5 a3 3 0 1 1 3 4" fill="none" stroke="#c6c6c6" stroke-width="1.6"/></svg>
<svg class="ic" style="left:363.0px;top:108.5px" width="8" height="4" viewBox="0 0 8 4"><path d="M0 0 H8 L4.0 4Z" fill="#9c9c9c"/></svg>
<svg class="ic" style="left:380px;top:98px" width="24" height="24" viewBox="0 0 24 24"><rect x="2" y="6" width="17" height="15" fill="#e9e9e9" stroke="#c6c6c6"/><line x1="2" y1="10" x2="19" y2="10" stroke="#c6c6c6"/><line x1="2" y1="14" x2="19" y2="14" stroke="#c6c6c6"/><line x1="2" y1="18" x2="19" y2="18" stroke="#c6c6c6"/><path d="M10 18 L12 13 L19.5 3 L22.5 5 L15 15.5Z" fill="#ececec" stroke="#c6c6c6" stroke-width="0.8"/></svg>
<svg class="ic" style="left:413px;top:98px" width="24" height="24" viewBox="0 0 24 24"><path d="M5 7 H19 L18 22 H6Z" fill="#f2f2f2" stroke="#c6c6c6" stroke-width="1.2"/><path d="M3.5 6.5 H20.5 M9 6 V3.5 H15 V6" fill="none" stroke="#c6c6c6" stroke-width="1.4"/><path d="M9 10 V19 M12 10 V19 M15 10 V19" stroke="#c6c6c6" stroke-width="1"/></svg>
<svg class="ic" style="left:446px;top:98px" width="24" height="24" viewBox="0 0 24 24"><g transform="rotate(-90 12 12)"><circle cx="7" cy="18" r="3" fill="none" stroke="#c6c6c6" stroke-width="1.5"/><circle cx="16" cy="18" r="3" fill="none" stroke="#c6c6c6" stroke-width="1.5"/><path d="M8.5 15.5 L15 9 M14.5 15.5 L8 9" stroke="#c6c6c6" stroke-width="1.6"/></g></svg>
<svg class="ic" style="left:479px;top:98px" width="24" height="24" viewBox="0 0 24 24"><path d="M4 3 H12 L15 6 V17 H4Z" fill="#f4f4f4" stroke="#c6c6c6"/><path d="M9 7 H17 L20 10 V22 H9Z" fill="#f4f4f4" stroke="#c6c6c6"/><path d="M11 13 H18 M11 16 H18 M11 19 H18" stroke="#e9e9e9"/></svg>
<svg class="ic" style="left:512px;top:98px" width="24" height="24" viewBox="0 0 24 24"><rect x="3.5" y="4" width="17" height="18.5" rx="1.5" fill="#e9e9e9" stroke="#c6c6c6"/><rect x="8" y="2" width="8" height="4" fill="#dcdcdc" stroke="#c6c6c6" stroke-width="0.8"/><rect x="6.5" y="8" width="11" height="12" fill="#f6f6f6" stroke="#c6c6c6" stroke-width="0.7"/><path d="M8.5 11 H15.5 M8.5 14 H15.5 M8.5 17 H15.5" stroke="#e9e9e9"/></svg>
<svg class="ic" style="left:545px;top:98px" width="24" height="24" viewBox="0 0 24 24"><path d="M2 10 L10 3 V7.5 C17 7.5 21 11 20 17 C19.5 20 17 22 14 22.5 C16.5 20 17 14 10 13.5 V18Z" fill="#dcdcdc" stroke="#c6c6c6" stroke-width="0.7"/></svg>
<svg class="ic" style="left:578px;top:98px" width="24" height="24" viewBox="0 0 24 24"><g transform="translate(24 0) scale(-1 1)"><path d="M2 10 L10 3 V7.5 C17 7.5 21 11 20 17 C19.5 20 17 22 14 22.5 C16.5 20 17 14 10 13.5 V18Z" fill="#dcdcdc" stroke="#c6c6c6" stroke-width="0.7"/></g></svg>
<div class="b" style="left:614px;top:102px;width:6px;height:18px;background-image:radial-gradient(circle,#c4c4c4 0.75px,transparent 1.05px);background-size:3px 3px"></div>
<svg class="ic" style="left:628px;top:100px" width="24" height="24" viewBox="0 0 24 24"><path d="M1 8 L5 3 H21 V13 H5Z" fill="#e9e9e9" stroke="#c6c6c6" stroke-width="0.9"/><text x="13" y="11.3" font-family="Liberation Sans, sans-serif" font-size="8.5" font-weight="bold" text-anchor="middle" fill="#c4c4c4">abc</text></svg>
<svg class="ic" style="left:661px;top:98px" width="24" height="24" viewBox="0 0 24 24"><circle cx="9" cy="9" r="7" fill="#dcdcdc" stroke="#c6c6c6" stroke-width="0.6"/><path d="M9 9 V2 A7 7 0 0 1 15.5 11.5Z" fill="#e9e9e9"/><rect x="12" y="14" width="3.5" height="8" fill="#c6c6c6"/><rect x="16.5" y="10" width="3.5" height="12" fill="#c6c6c6"/><rect x="20.5" y="17" width="3" height="5" fill="#c6c6c6"/></svg>
<svg class="ic" style="left:695px;top:100px" width="24" height="24" viewBox="0 0 24 24"><rect x="0.5" y="0.5" width="23" height="19" fill="#dbe8f7" stroke="#2f6fc4" stroke-width="1"/><path d="M2 8.5 L5.5 4 H20 V13 H5.5Z" fill="#f4d23e" stroke="#b3951d" stroke-width="0.8"/><text x="12.5" y="11.6" font-family="Liberation Sans, sans-serif" font-size="8.5" font-weight="bold" text-anchor="middle" fill="#222">ab</text><circle cx="19.5" cy="16" r="3.8" fill="#c0272d" stroke="#8a1519" stroke-width="0.6"/><line x1="19.5" y1="12" x2="19.5" y2="6" stroke="#ddd" stroke-width="1.4"/></svg>
<svg class="ic" style="left:728px;top:100px" width="24" height="24" viewBox="0 0 24 24"><path d="M1 8 L5 3 H21 V13 H5Z" fill="#e9e9e9" stroke="#c6c6c6" stroke-width="0.9"/><text x="13" y="11.3" font-family="Liberation Sans, sans-serif" font-size="8.5" font-weight="bold" text-anchor="middle" fill="#c4c4c4">ab</text><circle cx="19" cy="17" r="3.8" fill="#dcdcdc" stroke="#c6c6c6" stroke-width="0.6"/><line x1="19" y1="13" x2="19" y2="7" stroke="#c6c6c6" stroke-width="1.4"/></svg>
<svg class="ic" style="left:761px;top:100px" width="24" height="24" viewBox="0 0 24 24"><path d="M1 8 L5 3 H21 V13 H5Z" fill="#e9e9e9" stroke="#c6c6c6" stroke-width="0.9"/><text x="13" y="11.3" font-family="Liberation Sans, sans-serif" font-size="8.5" font-weight="bold" text-anchor="middle" fill="#c4c4c4">abc</text><path d="M6 18 C10 13 16 13 20 18 C16 22 10 22 6 18Z" fill="#f2f2f2" stroke="#c6c6c6"/><circle cx="13" cy="18" r="2" fill="#c6c6c6"/></svg>
<svg class="ic" style="left:794px;top:100px" width="24" height="24" viewBox="0 0 24 24"><path d="M1 8 L5 3 H21 V13 H5Z" fill="#e9e9e9" stroke="#c6c6c6" stroke-width="0.9"/><text x="13" y="11.3" font-family="Liberation Sans, sans-serif" font-size="8.5" font-weight="bold" text-anchor="middle" fill="#c4c4c4">abc</text><rect x="13" y="13" width="10" height="10" rx="1.5" fill="#d4d4d4"/><path d="M15.0 17.0 h3 v-2.5 l3.5 3.5 l-3.5 3.5 v-2.5 h-3z" fill="#f4f4f4"/></svg>
<svg class="ic" style="left:827px;top:100px" width="24" height="24" viewBox="0 0 24 24"><path d="M1 8 L5 3 H21 V13 H5Z" fill="#e9e9e9" stroke="#c6c6c6" stroke-width="0.9"/><text x="13" y="11.3" font-family="Liberation Sans, sans-serif" font-size="8.5" font-weight="bold" text-anchor="middle" fill="#c4c4c4">abc</text><rect x="13" y="13" width="10" height="10" rx="1.5" fill="#d4d4d4"/><path d="M20.5 18.0 a2.5 2.5 0 1 1 -2.5 -2.5" fill="none" stroke="#f4f4f4" stroke-width="1.4"/></svg>
<svg class="ic" style="left:860px;top:100px" width="24" height="24" viewBox="0 0 24 24"><path d="M1 8 L5 3 H21 V13 H5Z" fill="#e9e9e9" stroke="#c6c6c6" stroke-width="0.9"/><text x="13" y="11.3" font-family="Liberation Sans, sans-serif" font-size="8.5" font-weight="bold" text-anchor="middle" fill="#c4c4c4">abc</text><rect x="13" y="13" width="10" height="10" rx="1.5" fill="#d4d4d4"/><g stroke="#f4f4f4" stroke-width="1.6"><line x1="15.5" y1="15.5" x2="20.5" y2="20.5"/><line x1="15.5" y1="20.5" x2="20.5" y2="15.5"/></g></svg>
<div class="b" style="left:896px;top:102px;width:6px;height:18px;background-image:radial-gradient(circle,#c4c4c4 0.75px,transparent 1.05px);background-size:3px 3px"></div>
<svg class="ic" style="left:911px;top:98px" width="24" height="24" viewBox="0 0 24 24"><ellipse cx="12" cy="10.5" rx="11.8" ry="10" fill="#3f7fc8" stroke="#2b4f80" stroke-width="0.8"/><ellipse cx="5.509999999999999" cy="10.5" rx="2.596" ry="7.199999999999999" fill="#333" opacity="0.55"/><ellipse cx="18.490000000000002" cy="10.5" rx="2.596" ry="7.199999999999999" fill="#333" opacity="0.55"/><ellipse cx="12" cy="10.5" rx="3.54" ry="9.0" fill="#7fc0f4" opacity="0.7"/><ellipse cx="12" cy="10.5" rx="5.3100000000000005" ry="10" fill="none" stroke="#cfe0f4" stroke-width="0.7"/><ellipse cx="12" cy="10.5" rx="9.440000000000001" ry="10" fill="none" stroke="#cfe0f4" stroke-width="0.6"/><line x1="0.1999999999999993" y1="10.5" x2="23.8" y2="10.5" stroke="#cfe0f4" stroke-width="0.7"/><path d="M1.9699999999999989 5.5 H22.03 M1.9699999999999989 15.5 H22.03" stroke="#cfe0f4" stroke-width="0.7"/><rect x="14" y="14" width="9" height="9" rx="1.5" fill="#3d8a3a"/><path d="M16 18.5 h5 M19 16.5 l2.2 2 l-2.2 2" stroke="#fff" stroke-width="1.3" fill="none"/></svg>
<svg class="ic" style="left:944px;top:98px" width="24" height="24" viewBox="0 0 24 24"><ellipse cx="12" cy="10.5" rx="11.8" ry="10" fill="#3f7fc8" stroke="#2b4f80" stroke-width="0.8"/><ellipse cx="5.509999999999999" cy="10.5" rx="2.596" ry="7.199999999999999" fill="#333" opacity="0.55"/><ellipse cx="18.490000000000002" cy="10.5" rx="2.596" ry="7.199999999999999" fill="#333" opacity="0.55"/><ellipse cx="12" cy="10.5" rx="3.54" ry="9.0" fill="#7fc0f4" opacity="0.7"/><ellipse cx="12" cy="10.5" rx="5.3100000000000005" ry="10" fill="none" stroke="#cfe0f4" stroke-width="0.7"/><ellipse cx="12" cy="10.5" rx="9.440000000000001" ry="10" fill="none" stroke="#cfe0f4" stroke-width="0.6"/><line x1="0.1999999999999993" y1="10.5" x2="23.8" y2="10.5" stroke="#cfe0f4" stroke-width="0.7"/><path d="M1.9699999999999989 5.5 H22.03 M1.9699999999999989 15.5 H22.03" stroke="#cfe0f4" stroke-width="0.7"/><rect x="14" y="14" width="9" height="9" rx="1.5" fill="#4f9d4b"/><circle cx="18" cy="18" r="2" fill="none" stroke="#fff" stroke-width="1.2"/><line x1="19.5" y1="19.5" x2="21.5" y2="21.5" stroke="#fff" stroke-width="1.3"/></svg>
<svg class="ic" style="left:977px;top:98px" width="24" height="24" viewBox="0 0 24 24"><ellipse cx="12" cy="10" rx="11.5" ry="9.5" fill="#3a6aa8" stroke="#2b4f80" stroke-width="0.8"/><ellipse cx="5.675" cy="10" rx="2.53" ry="6.84" fill="#333" opacity="0.55"/><ellipse cx="18.325" cy="10" rx="2.53" ry="6.84" fill="#333" opacity="0.55"/><ellipse cx="12" cy="10" rx="3.4499999999999997" ry="8.55" fill="#7fc0f4" opacity="0.7"/><ellipse cx="12" cy="10" rx="5.175" ry="9.5" fill="none" stroke="#e8eef4" stroke-width="0.7"/><ellipse cx="12" cy="10" rx="9.200000000000001" ry="9.5" fill="none" stroke="#e8eef4" stroke-width="0.6"/><line x1="0.5" y1="10" x2="23.5" y2="10" stroke="#e8eef4" stroke-width="0.7"/><path d="M2.2249999999999996 5.25 H21.775 M2.2249999999999996 14.75 H21.775" stroke="#e8eef4" stroke-width="0.7"/><path d="M2.500 22 C1.500 18 4 13.500 7.500 13.500 C10 13.500 11 15.500 11 17.500 H13 C13 15.500 14 13.500 16.500 13.500 C20 13.500 22.500 18 21.500 22 C19.500 23.800 15.500 23.800 13.500 22 V20 H10.500 V22 C8.500 23.800 4.500 23.800 2.500 22Z" fill="#111"/></svg>
<div class="b" style="left:1013px;top:102px;width:6px;height:18px;background-image:radial-gradient(circle,#c4c4c4 0.75px,transparent 1.05px);background-size:3px 3px"></div>
<svg class="ic" style="left:1028px;top:98px" width="24" height="24" viewBox="0 0 24 24"><path d="M11.5 1.5 C7 1.5 7.5 3.5 7.5 5.5 H12 V6.5 H5 C2 6.5 1.5 9 1.5 11.5 C1.5 14.5 2.5 16 5 16 H7 V13.5 C7 11.5 8.5 10 10.5 10 H14.5 C16 10 17 9 17 7.5 V4.5 C17 2.5 15 1.5 11.5 1.5Z" fill="#3872a4"/><circle cx="9.3" cy="3.8" r="0.9" fill="#fff"/><path d="M12 22 C16.5 22 16 20 16 18 H11.5 V17 H18.5 C21.5 17 22 14.5 22 12 C22 9 21 7.5 18.5 7.5 H17 V10 C17 12 15.5 13.5 13.5 13.5 H9.5 C8 13.5 7 14.5 7 16 V19 C7 21 9 22 12 22Z" fill="#f6cf3c"/><circle cx="14.2" cy="19.7" r="0.9" fill="#fff"/><path d="M18 19 l4.5 2 l-4.5 2" fill="none" stroke="#333" stroke-width="1.1"/></svg>
<svg class="ic" style="left:1061px;top:98px" width="24" height="24" viewBox="0 0 24 24"><rect x="0.5" y="0.5" width="23" height="23" fill="#9fc4e6" stroke="#a8a8a8"/><rect x="12" y="1" width="11" height="16" fill="#9cc77a"/><rect x="1" y="17" width="22" height="6" fill="#c6def2"/><line x1="12" y1="1" x2="12" y2="23" stroke="#dde" stroke-width="1.2"/><path d="M6.5 12 L11 8.8 V15.2Z M17.5 12 L13 8.8 V15.2Z" fill="#111"/></svg>
<div class="b" style="left:1097px;top:102px;width:6px;height:18px;background-image:radial-gradient(circle,#c4c4c4 0.75px,transparent 1.05px);background-size:3px 3px"></div>
<svg class="ic" style="left:1112px;top:98px" width="24" height="24" viewBox="0 0 24 24"><rect x="3" y="2" width="19" height="20.5" rx="1" fill="#4f7cb4" stroke="#1d2b45" stroke-width="0.8"/><rect x="3" y="2" width="4.5" height="20.5" fill="#1d2b45"/><text x="14.5" y="17.5" font-family="Liberation Serif, serif" font-size="15" text-anchor="middle" fill="#e8eef6">?</text></svg>
<div class="b" style="left:1148px;top:102px;width:6px;height:18px;background-image:radial-gradient(circle,#c4c4c4 0.75px,transparent 1.05px);background-size:3px 3px"></div>
<div class="b" style="left:3px;top:142px;width:6px;height:18px;background-image:radial-gradient(circle,#c4c4c4 0.75px,transparent 1.05px);background-size:3px 3px"></div>
<svg class="ic" style="left:16px;top:137px" width="24" height="24" viewBox="0 0 24 24"><path d="M1.500 23 V1.500 L22 23Z" fill="#e9e9e9" stroke="#c6c6c6" stroke-width="1"/><path d="M6 19 V12 L12.500 19Z" fill="#f4f4f4" stroke="#c6c6c6" stroke-width="0.8"/><path d="M18.500 1.500 V19 L22 23 V1.500Z" fill="#e9e9e9" stroke="#c6c6c6" stroke-width="0.8"/><path d="M20 4 h2 M20 7 h2 M20 10 h2 M20 13 h2 M20 16 h2" stroke="#c6c6c6" stroke-width="0.6"/></svg>
<svg class="ic" style="left:50px;top:137px" width="24" height="24" viewBox="0 0 24 24"><path d="M3 7 C3 3 8 2 12 4 C16 2 21 3 21 7 C22 11 19 13 15 12 C12 11 10 14 7 13 C4 13 3 10 3 7Z" fill="#dcdcdc" stroke="#c6c6c6" stroke-width="1"/><rect x="13" y="13" width="10" height="10" rx="1.5" fill="#d4d4d4"/><path d="M15.0 17.0 h3 v-2.5 l3.5 3.5 l-3.5 3.5 v-2.5 h-3z" fill="#f4f4f4"/></svg>
<svg class="ic" style="left:81.0px;top:147.5px" width="8" height="4" viewBox="0 0 8 4"><path d="M0 0 H8 L4.0 4Z" fill="#9c9c9c"/></svg>
<svg class="ic" style="left:99px;top:137px" width="24" height="24" viewBox="0 0 24 24"><path d="M3 7 C3 3 8 2 12 4 C16 2 21 3 21 7 C22 11 19 13 15 12 C12 11 10 14 7 13 C4 13 3 10 3 7Z" fill="#dcdcdc" stroke="#c6c6c6" stroke-width="1"/><rect x="13" y="13" width="10" height="10" rx="1.5" fill="#d4d4d4"/><path d="M20.5 18.0 a2.5 2.5 0 1 1 -2.5 -2.5" fill="none" stroke="#f4f4f4" stroke-width="1.4"/></svg>
<svg class="ic" style="left:132px;top:137px" width="24" height="24" viewBox="0 0 24 24"><circle cx="8" cy="8" r="6" fill="#dcdcdc" stroke="#c6c6c6"/><path d="M9 11 L15 8 L21 12 V19 L15 22.5 L9 19Z" fill="#e9e9e9" stroke="#c6c6c6"/><path d="M7 7 L14 15" stroke="#c6c6c6" stroke-width="1.2"/></svg>
<svg class="ic" style="left:165px;top:137px" width="24" height="24" viewBox="0 0 24 24"><path d="M3 7 C3 3 8 2 12 4 C16 2 21 3 21 7 C22 11 19 13 15 12 C12 11 10 14 7 13 C4 13 3 10 3 7Z" fill="#dcdcdc" stroke="#c6c6c6" stroke-width="1"/><rect x="13" y="13" width="10" height="10" rx="1.5" fill="#d4d4d4"/><g stroke="#f4f4f4" stroke-width="1.3"><line x1="15.0" y1="18.0" x2="21.0" y2="18.0"/><line x1="18.0" y1="15.0" x2="18.0" y2="21.0"/><line x1="16.0" y1="16.0" x2="20.0" y2="20.0"/><line x1="16.0" y1="20.0" x2="20.0" y2="16.0"/></g></svg>
<svg class="ic" style="left:198px;top:137px" width="24" height="24" viewBox="0 0 24 24"><path d="M3 7 C3 3 8 2 12 4 C16 2 21 3 21 7 C22 11 19 13 15 12 C12 11 10 14 7 13 C4 13 3 10 3 7Z" fill="#dcdcdc" stroke="#c6c6c6" stroke-width="1"/><ellipse cx="7" cy="18" rx="4.5" ry="3.5" transform="rotate(-30 7 18)" fill="#dcdcdc" stroke="#c6c6c6"/><rect x="13" y="13" width="10" height="10" rx="1.5" fill="#d4d4d4"/><g stroke="#f4f4f4" stroke-width="1.3"><line x1="15.0" y1="18.0" x2="21.0" y2="18.0"/><line x1="18.0" y1="15.0" x2="18.0" y2="21.0"/><line x1="16.0" y1="16.0" x2="20.0" y2="20.0"/><line x1="16.0" y1="20.0" x2="20.0" y2="16.0"/></g></svg>
<svg class="ic" style="left:231px;top:137px" width="24" height="24" viewBox="0 0 24 24"><path d="M3 7 C3 3 8 2 12 4 C16 2 21 3 21 7 C22 11 19 13 15 12 C12 11 10 14 7 13 C4 13 3 10 3 7Z" fill="#dcdcdc" stroke="#c6c6c6" stroke-width="1"/><ellipse cx="9" cy="7.5" rx="3.5" ry="2" fill="#f4f4f4"/><rect x="13" y="13" width="10" height="10" rx="1.5" fill="#d4d4d4"/><g stroke="#f4f4f4" stroke-width="1.3"><line x1="15.0" y1="18.0" x2="21.0" y2="18.0"/><line x1="18.0" y1="15.0" x2="18.0" y2="21.0"/><line x1="16.0" y1="16.0" x2="20.0" y2="20.0"/><line x1="16.0" y1="20.0" x2="20.0" y2="16.0"/></g></svg>
<svg class="ic" style="left:264px;top:137px" width="24" height="24" viewBox="0 0 24 24"><path d="M3 7 C3 3 8 2 12 4 C16 2 21 3 21 7 C22 11 19 13 15 12 C12 11 10 14 7 13 C4 13 3 10 3 7Z" fill="#dcdcdc" stroke="#c6c6c6" stroke-width="1"/><ellipse cx="9" cy="7.5" rx="3.5" ry="2" fill="#f4f4f4"/><rect x="13" y="13" width="10" height="10" rx="1.5" fill="#d4d4d4"/><g stroke="#f4f4f4" stroke-width="1.6"><line x1="15.5" y1="15.5" x2="20.5" y2="20.5"/><line x1="15.5" y1="20.5" x2="20.5" y2="15.5"/></g></svg>
<svg class="ic" style="left:297px;top:137px" width="24" height="24" viewBox="0 0 24 24"><path d="M3 7 C3 3 8 2 12 4 C16 2 21 3 21 7 C22 11 19 13 15 12 C12 11 10 14 7 13 C4 13 3 10 3 7Z" fill="#dcdcdc" stroke="#c6c6c6" stroke-width="1"/><ellipse cx="7" cy="18" rx="4.5" ry="3.5" transform="rotate(-30 7 18)" fill="#dcdcdc" stroke="#c6c6c6"/><rect x="13" y="13" width="10" height="10" rx="1.5" fill="#d4d4d4"/><g stroke="#f4f4f4" stroke-width="1.6"><line x1="15.5" y1="15.5" x2="20.5" y2="20.5"/><line x1="15.5" y1="20.5" x2="20.5" y2="15.5"/></g></svg>
<svg class="ic" style="left:329px;top:137px" width="24" height="24" viewBox="0 0 24 24"><path d="M3 7 C3 3 8 2 12 4 C16 2 21 3 21 7 C22 11 20 14 17 14 C14 14 14 19 10 20 C6 21 4 18 5 14 C5 11 3 10 3 7Z" fill="#dcdcdc" stroke="#c6c6c6"/></svg>
<svg class="ic" style="left:362px;top:137px" width="24" height="24" viewBox="0 0 24 24"><path d="M4 17 C4 12 10 12 12 8 C14 4 20 3 21 8 C22 13 16 14 14 18 C12 22 4 22 4 17Z" fill="#dcdcdc" stroke="#c6c6c6" stroke-width="1.4"/><path d="M7 17 C8 14 12 14 14 10 C15.5 7 18 7 18.5 9" fill="none" stroke="#c4c4c4"/></svg>
<svg class="ic" style="left:395px;top:137px" width="24" height="24" viewBox="0 0 24 24"><path d="M3 3 L9 14 L19 5" fill="none" stroke="#c6c6c6"/><rect x="1.5" y="1.5" width="3" height="3" fill="#f4f4f4" stroke="#c6c6c6"/><rect x="17.5" y="3.5" width="3" height="3" fill="#f4f4f4" stroke="#c6c6c6"/><rect x="7.5" y="12.5" width="3" height="3" fill="#f4f4f4" stroke="#c6c6c6"/><rect x="13" y="13" width="10" height="10" rx="1.5" fill="#d4d4d4"/><path d="M20.5 18.0 a2.5 2.5 0 1 1 -2.5 -2.5" fill="none" stroke="#f4f4f4" stroke-width="1.4"/></svg>
<svg class="ic" style="left:428px;top:137px" width="24" height="24" viewBox="0 0 24 24"><path d="M3 7 C3 3 8 2 12 4 C16 2 21 3 21 7 C22 11 19 13 15 12 C12 11 10 14 7 13 C4 13 3 10 3 7Z" fill="#e9e9e9" stroke="#c6c6c6" stroke-width="1"/><circle cx="7" cy="18" r="3" fill="none" stroke="#c6c6c6" stroke-width="1.5"/><circle cx="16" cy="18" r="3" fill="none" stroke="#c6c6c6" stroke-width="1.5"/><path d="M8.5 15.5 L15 9 M14.5 15.5 L8 9" stroke="#c6c6c6" stroke-width="1.6"/></svg>
<svg class="ic" style="left:461px;top:137px" width="24" height="24" viewBox="0 0 24 24"><path d="M3 7 C3 3 8 2 12 4 C16 2 21 3 21 7 C22 11 19 13 15 12 C12 11 10 14 7 13 C4 13 3 10 3 7Z" fill="#e9e9e9" stroke="#c6c6c6" stroke-width="1"/><circle cx="7" cy="18" r="3" fill="none" stroke="#c6c6c6" stroke-width="1.5"/><circle cx="16" cy="18" r="3" fill="none" stroke="#c6c6c6" stroke-width="1.5"/><path d="M8.5 15.5 L15 9 M14.5 15.5 L8 9" stroke="#c6c6c6" stroke-width="1.6"/></svg>
<svg class="ic" style="left:494px;top:137px" width="24" height="24" viewBox="0 0 24 24"><path d="M3 6 C5 2 10 2 12 5 C14 2 19 2 21 6 C22 10 17 12 12 10 C7 12 2 10 3 6Z" fill="#dcdcdc" stroke="#c6c6c6"/><path d="M8 6 H16 M8 8.5 H16" stroke="#f4f4f4" stroke-width="1.2"/><path d="M6 11 C7 16 10 19 14 20" fill="none" stroke="#c6c6c6" stroke-width="1.2"/></svg>
<svg class="ic" style="left:527px;top:137px" width="24" height="24" viewBox="0 0 24 24"><line x1="3" y1="4" x2="21" y2="4" stroke="#c6c6c6" stroke-width="1"/><line x1="3" y1="8" x2="21" y2="8" stroke="#c6c6c6" stroke-width="1"/><line x1="3" y1="12" x2="21" y2="12" stroke="#c6c6c6" stroke-width="1"/><line x1="3" y1="16" x2="21" y2="16" stroke="#c6c6c6" stroke-width="1"/><line x1="3" y1="20" x2="21" y2="20" stroke="#c6c6c6" stroke-width="1"/><path d="M12 3 V21 M9 6 L12 8 L15 6 M9 18 L12 16 L15 18" fill="none" stroke="#c6c6c6" stroke-width="1"/></svg>
<svg class="ic" style="left:560px;top:137px" width="24" height="24" viewBox="0 0 24 24"><path d="M13 3 L21 7 L13 11Z" fill="#e9e9e9" stroke="#c6c6c6"/><path d="M13 3 V14 L9 21 H17 L13 14" fill="#f4f4f4" stroke="#c6c6c6"/><path d="M8 6 C4 9 4 14 7 17" fill="none" stroke="#c6c6c6" stroke-width="1.3"/><path d="M4.5 16.5 L7.8 18.3 L8.3 14.7Z" fill="#c6c6c6"/></svg>
<svg class="ic" style="left:591.0px;top:147.5px" width="8" height="4" viewBox="0 0 8 4"><path d="M0 0 H8 L4.0 4Z" fill="#9c9c9c"/></svg>
<div class="b" style="left:612px;top:142px;width:6px;height:18px;background-image:radial-gradient(circle,#c4c4c4 0.75px,transparent 1.05px);background-size:3px 3px"></div>
<svg class="ic" style="left:624px;top:137px" width="24" height="24" viewBox="0 0 24 24"><path d="M3 21 V20 C5 20 5 4 7.5 4 C10 4 10 16 13 18 C16 20 19 20 21 20 V21Z" fill="#e9e9e9" stroke="#c6c6c6" stroke-width="0.9"/><line x1="2" y1="21.5" x2="22" y2="21.5" stroke="#c6c6c6"/></svg>
<svg class="ic" style="left:658px;top:137px" width="24" height="24" viewBox="0 0 24 24"><path d="M3 21 V20 C5 20 5 4 7.5 4 C10 4 10 16 13 18 C16 20 19 20 21 20 V21Z" fill="#e9e9e9" stroke="#c6c6c6" stroke-width="0.9"/><line x1="2" y1="21.5" x2="22" y2="21.5" stroke="#c6c6c6"/><path d="M5 9 l-3.5 3 l3.5 3z M14 9 V7 l6 5 l-6 5 V15 H9 V9Z" fill="#e9e9e9" stroke="#c6c6c6" stroke-width="0.8"/></svg>
<svg class="ic" style="left:691px;top:137px" width="24" height="24" viewBox="0 0 24 24"><path d="M3 21 V20 C5 20 5 4 7.5 4 C10 4 10 16 13 18 C16 20 19 20 21 20 V21Z" fill="#e9e9e9" stroke="#c6c6c6" stroke-width="0.9"/><line x1="2" y1="21.5" x2="22" y2="21.5" stroke="#c6c6c6"/></svg>
<svg class="ic" style="left:725px;top:137px" width="24" height="24" viewBox="0 0 24 24"><path d="M3 21 V20 C5 20 5 4 7.5 4 C10 4 10 16 13 18 C16 20 19 20 21 20 V21Z" fill="#e9e9e9" stroke="#c6c6c6" stroke-width="0.9"/><line x1="2" y1="21.5" x2="22" y2="21.5" stroke="#c6c6c6"/><path d="M5 9 l-3.5 3 l3.5 3z M14 9 V7 l6 5 l-6 5 V15 H9 V9Z" fill="#e9e9e9" stroke="#c6c6c6" stroke-width="0.8"/></svg>
<svg class="ic" style="left:758px;top:137px" width="24" height="24" viewBox="0 0 24 24"><circle cx="9" cy="11" r="5" fill="#dcdcdc"/><line x1="15.5" y1="11.0" x2="18.0" y2="11.0" stroke="#c6c6c6" stroke-width="1.3"/><line x1="13.6" y1="15.6" x2="15.4" y2="17.4" stroke="#c6c6c6" stroke-width="1.3"/><line x1="9.0" y1="17.5" x2="9.0" y2="20.0" stroke="#c6c6c6" stroke-width="1.3"/><line x1="4.4" y1="15.6" x2="2.6" y2="17.4" stroke="#c6c6c6" stroke-width="1.3"/><line x1="2.5" y1="11.0" x2="0.0" y2="11.0" stroke="#c6c6c6" stroke-width="1.3"/><line x1="4.4" y1="6.4" x2="2.6" y2="4.6" stroke="#c6c6c6" stroke-width="1.3"/><line x1="9.0" y1="4.5" x2="9.0" y2="2.0" stroke="#c6c6c6" stroke-width="1.3"/><line x1="13.6" y1="6.4" x2="15.4" y2="4.6" stroke="#c6c6c6" stroke-width="1.3"/><rect x="13" y="13" width="10" height="10" rx="1.5" fill="#d4d4d4"/><path d="M15.0 20.0 l3 -5 l3 5z" fill="#f4f4f4"/></svg>
<svg class="ic" style="left:792px;top:137px" width="24" height="24" viewBox="0 0 24 24"><circle cx="9" cy="11" r="5" fill="#dcdcdc"/><line x1="15.5" y1="11.0" x2="18.0" y2="11.0" stroke="#c6c6c6" stroke-width="1.3"/><line x1="13.6" y1="15.6" x2="15.4" y2="17.4" stroke="#c6c6c6" stroke-width="1.3"/><line x1="9.0" y1="17.5" x2="9.0" y2="20.0" stroke="#c6c6c6" stroke-width="1.3"/><line x1="4.4" y1="15.6" x2="2.6" y2="17.4" stroke="#c6c6c6" stroke-width="1.3"/><line x1="2.5" y1="11.0" x2="0.0" y2="11.0" stroke="#c6c6c6" stroke-width="1.3"/><line x1="4.4" y1="6.4" x2="2.6" y2="4.6" stroke="#c6c6c6" stroke-width="1.3"/><line x1="9.0" y1="4.5" x2="9.0" y2="2.0" stroke="#c6c6c6" stroke-width="1.3"/><line x1="13.6" y1="6.4" x2="15.4" y2="4.6" stroke="#c6c6c6" stroke-width="1.3"/><rect x="13" y="13" width="10" height="10" rx="1.5" fill="#d4d4d4"/><path d="M15.0 16.0 l3 5 l3 -5z" fill="#f4f4f4"/></svg>
<svg class="ic" style="left:825px;top:137px" width="24" height="24" viewBox="0 0 24 24"><circle cx="9.5" cy="10" r="7.5" fill="#f4f4f4" stroke="#c6c6c6" stroke-width="1.2"/><path d="M9.5 2.5 A7.5 7.5 0 0 0 9.5 17.5Z" fill="#dcdcdc"/><rect x="13" y="13" width="10" height="10" rx="1.5" fill="#d4d4d4"/><path d="M15.0 20.0 l3 -5 l3 5z" fill="#f4f4f4"/></svg>
<svg class="ic" style="left:858px;top:137px" width="24" height="24" viewBox="0 0 24 24"><circle cx="9.5" cy="10" r="7.5" fill="#f4f4f4" stroke="#c6c6c6" stroke-width="1.2"/><path d="M9.5 2.5 A7.5 7.5 0 0 0 9.5 17.5Z" fill="#dcdcdc"/><rect x="13" y="13" width="10" height="10" rx="1.5" fill="#d4d4d4"/><path d="M15.0 16.0 l3 5 l3 -5z" fill="#f4f4f4"/></svg>
<div class="b" style="left:3px;top:179px;width:6px;height:18px;background-image:radial-gradient(circle,#c4c4c4 0.75px,transparent 1.05px);background-size:3px 3px"></div>
<svg class="ic" style="left:16px;top:175px" width="24" height="24" viewBox="0 0 24 24"><path d="M1 3 H23 V16 L18 18 V21 H13 V23 H3 V20 H1Z" fill="#3f8f3f" stroke="#2a5f2a" stroke-width="0.8" stroke-dasharray="2 1"/><path d="M3 6 H20 V14 L15 16 V18 H10 V20 H5 V17 H3Z" fill="#f0a030" stroke="#a86a10" stroke-width="0.6"/><path d="M7 9 V15 M4 12 H10" stroke="#fff" stroke-width="1.8"/></svg>
<svg class="ic" style="left:49px;top:175px" width="24" height="24" viewBox="0 0 24 24"><line x1="2.5" y1="22" x2="8" y2="16" stroke="#111" stroke-width="3.4" stroke-linecap="round"/><circle cx="14" cy="10" r="8.5" fill="#a9d6e8" stroke="#111" stroke-width="1.6"/><path d="M8 12 C11 6 17 6 20 9 C17 12 12 14 8 12Z" fill="#d8423a"/><path d="M8.5 13.5 C12 15 17 13 20 10.5" fill="none" stroke="#4f9d4b" stroke-width="1.6"/></svg>
<div class="b" style="left:79px;top:176px;width:69px;height:22px;background:linear-gradient(90deg,#383838 0%,#5c5c5c 40%,#a2a2a2 100%);"></div>
<svg class="ic" style="left:81px;top:179px" width="16" height="16" viewBox="0 0 16 16"><circle cx="8" cy="8" r="5.6" fill="#9a9a9a" stroke="#000" stroke-width="3.8"/></svg>
<span class="t" style="left:103px;top:177.5px;font-size:13.5px;color:#f2f2f2;transform:scaleX(0.8804);transform-origin:0 50%;">RGB =</span>
<div class="b" style="left:150px;top:175px;width:78px;height:24px;background:#fff;border:1px solid #c2c2c2;box-sizing:border-box;border-radius:2px;"></div>
<div class="b" style="left:204px;top:176px;width:23px;height:22px;background:linear-gradient(90deg,#fff,#ececec);"></div>
<svg class="ic" style="left:208.5px;top:185.0px" width="9" height="5" viewBox="0 0 9 5"><path d="M0 0 H9 L4.5 5Z" fill="#555"/></svg>
<span class="t" style="left:154px;top:177px;font-size:14px;color:#000;">-</span>
<svg class="ic" style="left:233px;top:175px" width="24" height="24" viewBox="0 0 24 24"><path d="M1.5 21 C5 21 6.5 3 12 3 C17.5 3 19 21 22.5 21" fill="none" stroke="#1d6d8d" stroke-width="1.8"/><path d="M15 8 l8 -2 M15 12 l8 1 M14 16 l9 3" stroke="#e9b6c0" stroke-width="1.2"/><text x="12" y="21.5" font-family="Liberation Sans, sans-serif" font-size="14" font-weight="bold" text-anchor="middle" fill="#111">%</text></svg>
<svg class="ic" style="left:266px;top:175px" width="24" height="24" viewBox="0 0 24 24"><path d="M1.5 21 C5 21 6.5 3 12 3 C17.5 3 19 21 22.5 21" fill="none" stroke="#8d1d1d" stroke-width="1.8"/><path d="M15 8 l8 -2 M15 12 l8 1 M14 16 l9 3" stroke="#b6d6e9" stroke-width="1.2"/><text x="12" y="21.5" font-family="Liberation Sans, sans-serif" font-size="15" font-weight="bold" text-anchor="middle" fill="#111">σ</text></svg>
<svg class="ic" style="left:299px;top:175px" width="24" height="24" viewBox="0 0 24 24"><line x1="2.5" y1="22" x2="8" y2="16" stroke="#111" stroke-width="3.4" stroke-linecap="round"/><circle cx="14" cy="10" r="8.5" fill="#a9dff0" stroke="#111" stroke-width="1.6"/><circle cx="14.5" cy="9.5" r="4.8" fill="#f0c23a"/><path d="M12 9.5 H17 M14.5 7 V12" stroke="#fff" stroke-width="1.4"/></svg>
<div class="b" style="left:329px;top:176px;width:70px;height:22px;background:linear-gradient(90deg,#383838 0%,#5c5c5c 40%,#a2a2a2 100%);"></div>
<svg class="ic" style="left:331px;top:179px" width="16" height="16" viewBox="0 0 16 16"><circle cx="8" cy="8" r="5.6" fill="#9a9a9a" stroke="#000" stroke-width="3.8"/></svg>
<span class="t" style="left:353px;top:177.5px;font-size:13.5px;color:#f2f2f2;transform:scaleX(0.8744);transform-origin:0 50%;">ROI</span>
<svg class="ic" style="left:404px;top:175px" width="24" height="24" viewBox="0 0 24 24"><path d="M2 2 H22 L17 12 L22 22 H2Z" fill="#e9a21e" stroke="#35c8c8" stroke-width="1.3"/><path d="M1 1 l3 3 M4 1 l-3 3 M20 1 l3 3 M23 1 l-3 3 M1 20 l3 3 M4 20 l-3 3 M20 20 l3 3 M23 20 l-3 3 M15.5 8.5 l3 3 M18.5 8.5 l-3 3 M15.5 13 l3 3 M18.5 13 l-3 3" stroke="#e02020" stroke-width="1.2"/></svg>
<svg class="ic" style="left:437px;top:175px" width="24" height="24" viewBox="0 0 24 24"><rect x="1" y="1" width="22" height="22" rx="3.5" fill="#eda91f" stroke="#5fd0d6" stroke-width="1.4"/><path d="M5.5 12 H18.5 M12 5.5 V18.5" stroke="#fff" stroke-width="2.6"/></svg>
<svg class="ic" style="left:470px;top:175px" width="24" height="24" viewBox="0 0 24 24"><rect x="0.5" y="0.5" width="23" height="23" rx="3" fill="#d2d2d2" stroke="#c2c2c2"/><path d="M6 8 A7.5 7.5 0 1 0 12 4.5" fill="none" stroke="#f0f0f0" stroke-width="2.4"/><path d="M6 3 V9 H12Z" fill="#f0f0f0"/></svg>
<span class="t" style="left:499px;top:177.5px;font-size:14px;color:#000;font-weight:bold;letter-spacing:-0.363px;">Dist</span>
<div class="b" style="left:525px;top:176px;width:100px;height:23px;background:#fff;border:1px solid #c2c2c2;box-sizing:border-box;border-radius:2px;"></div>
<div class="b" style="left:607px;top:177px;width:17px;height:21px;background:#f6f6f6;border-left:1px solid #dadada;box-sizing:border-box;"></div>
<svg class="ic" style="left:611.0px;top:179.5px" width="10" height="16" viewBox="0 0 10 16"><path d="M0.5 6.5 L5 1 L9.5 6.5Z M0.5 9.5 L5 15 L9.5 9.5Z" fill="#555"/></svg>
<span class="t" style="left:530px;top:178.0px;font-size:13.5px;color:#000;letter-spacing:-0.414px;">0,010000</span>
<span class="t" style="left:630px;top:177.5px;font-size:14px;color:#000;font-weight:bold;transform:scaleX(0.9125);transform-origin:0 50%;">Min</span>
<div class="b" style="left:653px;top:176px;width:60px;height:23px;background:#fff;border:1px solid #c2c2c2;box-sizing:border-box;border-radius:2px;"></div>
<div class="b" style="left:695px;top:177px;width:17px;height:21px;background:#f6f6f6;border-left:1px solid #dadada;box-sizing:border-box;"></div>
<svg class="ic" style="left:699.0px;top:179.5px" width="10" height="16" viewBox="0 0 10 16"><path d="M0.5 6.5 L5 1 L9.5 6.5Z M0.5 9.5 L5 15 L9.5 9.5Z" fill="#555"/></svg>
<span class="t" style="left:658px;top:178.0px;font-size:13.5px;color:#000;letter-spacing:-0.516px;">60</span>
<span class="t" style="left:718px;top:177.5px;font-size:14px;color:#000;font-weight:bold;letter-spacing:-0.411px;">Máx</span>
<div class="b" style="left:745px;top:176px;width:60px;height:23px;background:#fff;border:1px solid #c2c2c2;box-sizing:border-box;border-radius:2px;"></div>
<div class="b" style="left:787px;top:177px;width:17px;height:21px;background:#f6f6f6;border-left:1px solid #dadada;box-sizing:border-box;"></div>
<svg class="ic" style="left:791.0px;top:179.5px" width="10" height="16" viewBox="0 0 10 16"><path d="M0.5 6.5 L5 1 L9.5 6.5Z M0.5 9.5 L5 15 L9.5 9.5Z" fill="#555"/></svg>
<span class="t" style="left:750px;top:178.0px;font-size:13.5px;color:#000;letter-spacing:-0.510px;">100</span>
<svg class="ic" style="left:810px;top:175px" width="24" height="24" viewBox="0 0 24 24"><line x1="2.5" y1="22" x2="8" y2="16" stroke="#111" stroke-width="3.4" stroke-linecap="round"/><circle cx="14" cy="10" r="8.5" fill="#a9dff0" stroke="#111" stroke-width="1.6"/><rect x="10" y="6" width="4" height="4" fill="#4f7cd0"/><rect x="14" y="6" width="4" height="4" fill="#d84a4a"/><rect x="10" y="10" width="4" height="4" fill="#e8e8e8"/><rect x="14" y="10" width="4" height="4" fill="#7fc0e8"/><path d="M11 10 H17 M14 7 V13" stroke="#fff" stroke-width="1.3"/></svg>
<div class="b" style="left:839px;top:176px;width:68px;height:22px;background:linear-gradient(90deg,#383838 0%,#5c5c5c 40%,#a2a2a2 100%);"></div>
<svg class="ic" style="left:841px;top:179px" width="16" height="16" viewBox="0 0 16 16"><circle cx="8" cy="8" r="5.6" fill="#9a9a9a" stroke="#000" stroke-width="3.8"/></svg>
<span class="t" style="left:863px;top:177.5px;font-size:13.5px;color:#f2f2f2;letter-spacing:-0.544px;">Previa</span>
<svg class="ic" style="left:912px;top:175px" width="24" height="24" viewBox="0 0 24 24"><rect x="0.8" y="0.8" width="22.4" height="22.4" rx="3.5" fill="#111"/><rect x="2.5" y="2.5" width="9.5" height="9.5" fill="#2f8a48"/><rect x="12" y="2.5" width="9.5" height="6" fill="#d42a2a"/><rect x="12" y="8.5" width="9.5" height="13" fill="#2a56c8"/><rect x="2.5" y="12" width="9.5" height="5" fill="#8a3a1a"/><rect x="2.5" y="17" width="9.5" height="4.5" fill="#6aa830"/><path d="M5.5 12.5 H18.5 M12 6 V19" stroke="#fff" stroke-width="2.8"/></svg>
<svg class="ic" style="left:945px;top:175px" width="24" height="24" viewBox="0 0 24 24"><rect x="0.5" y="0.5" width="23" height="23" rx="3" fill="#d2d2d2" stroke="#c2c2c2"/><path d="M6 8 A7.5 7.5 0 1 0 12 4.5" fill="none" stroke="#f0f0f0" stroke-width="2.4"/><path d="M6 3 V9 H12Z" fill="#f0f0f0"/></svg>
<span class="t" style="left:978px;top:177.5px;font-size:14px;color:#000;font-weight:bold;">T</span>
<div class="b" style="left:986px;top:176px;width:50px;height:23px;background:#fff;border:1px solid #c2c2c2;box-sizing:border-box;border-radius:2px;"></div>
<div class="b" style="left:1018px;top:177px;width:17px;height:21px;background:#f6f6f6;border-left:1px solid #dadada;box-sizing:border-box;"></div>
<svg class="ic" style="left:1022.0px;top:179.5px" width="10" height="16" viewBox="0 0 10 16"><path d="M0.5 6.5 L5 1 L9.5 6.5Z M0.5 9.5 L5 15 L9.5 9.5Z" fill="#555"/></svg>
<span class="t" style="left:991px;top:178.0px;font-size:13.5px;color:#000;">0</span>
<span class="t" style="left:1041px;top:177.5px;font-size:14px;color:#000;font-weight:bold;">S</span>
<div class="b" style="left:1050px;top:176px;width:60px;height:23px;background:#fff;border:1px solid #c2c2c2;box-sizing:border-box;border-radius:2px;"></div>
<div class="b" style="left:1092px;top:177px;width:17px;height:21px;background:#f6f6f6;border-left:1px solid #dadada;box-sizing:border-box;"></div>
<svg class="ic" style="left:1096.0px;top:179.5px" width="10" height="16" viewBox="0 0 10 16"><path d="M0.5 6.5 L5 1 L9.5 6.5Z M0.5 9.5 L5 15 L9.5 9.5Z" fill="#555"/></svg>
<span class="t" style="left:1055px;top:178.0px;font-size:13.5px;color:#000;letter-spacing:-0.510px;">200</span>
<svg class="ic" style="left:1115px;top:175px" width="24" height="24" viewBox="0 0 24 24"><path d="M3.5 6 L5.5 22 C8 23.5 14 23.5 16.5 22 L18.5 6Z" fill="#5a5f5a" stroke="#222" stroke-width="0.8"/><ellipse cx="11" cy="5.5" rx="8.5" ry="3.5" fill="#6a8a5a" stroke="#222" stroke-width="1"/><path d="M7 9 V21 M11 9.5 V22 M15 9 V21" stroke="#333" stroke-width="1"/><circle cx="17" cy="17" r="3" fill="#e8b21d"/><circle cx="19.5" cy="20.5" r="2.5" fill="#3f74b3"/><circle cx="15" cy="21" r="2.2" fill="#c0392b"/></svg>
<svg class="ic" style="left:1148px;top:175px" width="24" height="24" viewBox="0 0 24 24"><path d="M2 6 L22 3 L23 17 L3 21Z" fill="#bcd4ec"/><path d="M2 6 L12 4.5 L12.5 19.2 L3 21Z" fill="#a9cfe0"/><path d="M14 8 L22 7 L22.5 13 L15 14Z" fill="#f0c9c9"/><path d="M7 5.5 L8 20 M17 4 L18 18 M2.5 11 L22.5 8 M2.8 16 L22.8 13" stroke="#dfeaf4" stroke-width="0.8"/><text x="12" y="16.5" font-family="Liberation Sans, sans-serif" font-size="10" font-weight="bold" text-anchor="middle" fill="#111">KML</text></svg>
<div class="b" style="left:1185px;top:179px;width:6px;height:18px;background-image:radial-gradient(circle,#c4c4c4 0.75px,transparent 1.05px);background-size:3px 3px"></div>
<svg class="ic" style="left:1198px;top:175px" width="24" height="24" viewBox="0 0 24 24"><rect x="0" y="0" width="24" height="24" fill="#2fae7a"/><path d="M0 3 H24 M0 8 H24 M0 13 H24 M0 18 H24 M0 22 H24 M3 0 V24" stroke="#1d7a5a" stroke-width="1"/><rect x="7" y="5" width="13" height="16" fill="#f08a2a"/><path d="M7 9 H20 M7 13 H20 M7 17 H20 M11.3 5 V21 M15.6 5 V21" stroke="#fbe0c0" stroke-width="1"/></svg>
<div class="b" style="left:1228px;top:176px;width:60px;height:23px;background:#fff;border:1px solid #c2c2c2;box-sizing:border-box;border-radius:2px;"></div>
<div class="b" style="left:1270px;top:177px;width:17px;height:21px;background:#f6f6f6;border-left:1px solid #dadada;box-sizing:border-box;"></div>
<svg class="ic" style="left:1274.0px;top:179.5px" width="10" height="16" viewBox="0 0 10 16"><path d="M0.5 6.5 L5 1 L9.5 6.5Z M0.5 9.5 L5 15 L9.5 9.5Z" fill="#555"/></svg>
<span class="t" style="left:1233px;top:178.0px;font-size:13.5px;color:#000;">0</span>
<svg class="ic" style="left:1293px;top:175px" width="24" height="24" viewBox="0 0 24 24"><rect x="1" y="2" width="22" height="20" fill="#f4f4f4" stroke="#222" stroke-width="1.8"/><rect x="11" y="3.5" width="10.5" height="17" fill="#b6e69a"/><path d="M14 7 L18.5 12 L14 17" fill="none" stroke="#1d8a1d" stroke-width="2"/></svg>
<div class="b" style="left:1322px;top:176px;width:60px;height:23px;background:#fff;border:1px solid #c2c2c2;box-sizing:border-box;border-radius:2px;"></div>
<div class="b" style="left:1364px;top:177px;width:17px;height:21px;background:#f6f6f6;border-left:1px solid #dadada;box-sizing:border-box;"></div>
<svg class="ic" style="left:1368.0px;top:179.5px" width="10" height="16" viewBox="0 0 10 16"><path d="M0.5 6.5 L5 1 L9.5 6.5Z M0.5 9.5 L5 15 L9.5 9.5Z" fill="#555"/></svg>
<span class="t" style="left:1327px;top:178.0px;font-size:13.5px;color:#000;">1</span>
<svg class="ic" style="left:1387px;top:175px" width="24" height="24" viewBox="0 0 24 24"><rect x="1" y="2" width="22" height="20" fill="#f4f4f4" stroke="#222" stroke-width="1.8"/><rect x="11" y="3.5" width="10.5" height="17" fill="#b6e69a"/><path d="M14 7 L18.5 12 L14 17" fill="none" stroke="#1d8a1d" stroke-width="2"/></svg>
<div class="b" style="left:1416px;top:176px;width:60px;height:23px;background:#fff;border:1px solid #c2c2c2;box-sizing:border-box;border-radius:2px;"></div>
<div class="b" style="left:1458px;top:177px;width:17px;height:21px;background:#f6f6f6;border-left:1px solid #dadada;box-sizing:border-box;"></div>
<svg class="ic" style="left:1462.0px;top:179.5px" width="10" height="16" viewBox="0 0 10 16"><path d="M0.5 6.5 L5 1 L9.5 6.5Z M0.5 9.5 L5 15 L9.5 9.5Z" fill="#555"/></svg>
<span class="t" style="left:1421px;top:178.0px;font-size:13.5px;color:#000;">2</span>
<svg class="ic" style="left:1481px;top:175px" width="24" height="24" viewBox="0 0 24 24"><rect x="1" y="2" width="22" height="20" fill="#f4f4f4" stroke="#222" stroke-width="1.8"/><rect x="11" y="3.5" width="10.5" height="17" fill="#b6e69a"/><path d="M14 7 L18.5 12 L14 17" fill="none" stroke="#1d8a1d" stroke-width="2"/></svg>
<svg class="ic" style="left:1514px;top:175px" width="24" height="24" viewBox="0 0 24 24"><rect x="1" y="1" width="22" height="22" fill="#d8d8d8"/><rect x="2" y="2" width="10" height="9" fill="#c9c9c9"/><rect x="12" y="2" width="10" height="9" fill="#dcc9cd"/><rect x="2" y="11" width="10" height="11" fill="#d2d2d2"/><rect x="12" y="11" width="10" height="11" fill="#c4c4c4"/><path d="M1 8 H23 M1 15 H23 M8 1 V23 M16 1 V23" stroke="#e6e6e6" stroke-width="1"/></svg>
<span class="t" style="left:2px;top:206px;font-size:15px;color:#000;letter-spacing:0.068px;">Navegador</span>
<svg class="ic" style="left:450px;top:209px" width="26" height="12" viewBox="0 0 26 12"><rect x="0.5" y="0.5" width="10" height="10.500" rx="1.8" fill="#f6f6f6" stroke="#5a5a5a" stroke-width="0.9"/><rect x="4.8" y="2.600" width="3.8" height="3.8" rx="0.8" fill="none" stroke="#5a5a5a" stroke-width="0.9"/><rect x="2.600" y="4.800" width="3.8" height="3.8" rx="0.8" fill="#f6f6f6" stroke="#5a5a5a" stroke-width="0.9"/><rect x="14.500" y="0.5" width="10" height="10.500" rx="1.8" fill="#f6f6f6" stroke="#5a5a5a" stroke-width="0.9"/><path d="M17 3 L22 8.500 M22 3 L17 8.500" stroke="#444" stroke-width="1.9"/></svg>
<svg class="ic" style="left:6px;top:230.5px" width="16" height="16" viewBox="0 0 16 16"><rect x="1.5" y="1.5" width="11" height="11" fill="#fbfbfb" stroke="#666"/><circle cx="12" cy="12" r="2.8" fill="#7cb86a" stroke="#3d7a2e" stroke-width="0.8"/></svg>
<svg class="ic" style="left:31px;top:230.5px" width="16" height="16" viewBox="0 0 16 16"><path d="M13.8 6.5 A6 6 0 0 0 3 4.8 L1.5 3.2 V8 H6.3 L4.8 6.4 A3.8 3.8 0 0 1 11.3 6.5Z" fill="#3f85c8"/><path d="M2.2 9.5 A6 6 0 0 0 13 11.2 L14.5 12.8 V8 H9.7 L11.2 9.6 A3.8 3.8 0 0 1 4.7 9.5Z" fill="#3f85c8"/></svg>
<svg class="ic" style="left:56px;top:230.5px" width="16" height="16" viewBox="0 0 16 16"><path d="M1.5 2 H14.5 L9.5 8 V14.5 L6.5 13 V8Z" fill="#4a86c5" stroke="#2f5786" stroke-width="0.7"/><ellipse cx="8" cy="2.3" rx="6.5" ry="1.3" fill="#f0d060" stroke="#b79b1d" stroke-width="0.6"/></svg>
<svg class="ic" style="left:81.5px;top:230.5px" width="16" height="16" viewBox="0 0 16 16"><path d="M3 3 V13 M3 5 H6 M3 9 H6 M3 13 H6" stroke="#888" fill="none"/><rect x="2" y="2" width="3" height="3" fill="#f4c440" stroke="#a88"/><path d="M10.5 15 V7 H8 L11.5 1.5 L15 7 H12.5 V15Z" fill="#3f74b3" stroke="#2a5285" stroke-width="0.5"/></svg>
<svg class="ic" style="left:106px;top:230.5px" width="16" height="16" viewBox="0 0 16 16"><circle cx="8" cy="8" r="6.5" fill="#4a86c5" stroke="#2f5786" stroke-width="0.6"/><text x="8" y="12" font-family="Liberation Serif, serif" font-size="11" font-weight="bold" font-style="italic" text-anchor="middle" fill="#fff">i</text></svg>
<div class="b" style="left:0px;top:255px;width:477px;height:384px;background:#fff;border:1px solid #c8c8c8;border-left:none;box-sizing:border-box;"></div>
<div class="b" style="left:0;top:256px;width:459px;height:365px;overflow:hidden">
<svg class="ic" style="left:202.5px;top:2px" width="19" height="19" viewBox="0 0 16 16"><path d="M1.500 2.500 H7 L8.500 4 H14.500 V7 H1.500Z" fill="#8e8e8e"/><path d="M1.500 6 H6.500 L8 4.800 H14.500 V14 H1.500Z" fill="#f0f0f0" stroke="#8a8a8a" stroke-width="0.9"/></svg>
<span class="t" style="left:228px;top:1.5px;font-size:14.5px;color:#000;letter-spacing:-0.458px;">S2B_MSIL1C_20181024T153619_N0</span>
<svg class="ic" style="left:203.5px;top:24.5px" width="17" height="17" viewBox="0 0 16 16"><rect x="1" y="1" width="5" height="5" fill="#1f3a5f"/><rect x="6" y="1" width="5" height="5" fill="#c8d8ea"/><rect x="11" y="1" width="5" height="5" fill="#2a4a75"/><rect x="1" y="6" width="5" height="5" fill="#9db7d5"/><rect x="6" y="6" width="5" height="5" fill="#1f3a5f"/><rect x="11" y="6" width="5" height="5" fill="#b5c9e0"/><rect x="1" y="11" width="5" height="5" fill="#2a4a75"/><rect x="6" y="11" width="5" height="5" fill="#b5c9e0"/><rect x="11" y="11" width="5" height="5" fill="#e9eff6"/></svg>
<span class="t" style="left:228px;top:23.5px;font-size:14.5px;color:#000;letter-spacing:0.088px;">dNBR.tif</span>
<svg class="ic" style="left:203.5px;top:46.5px" width="17" height="17" viewBox="0 0 16 16"><rect x="1" y="1" width="5" height="5" fill="#1f3a5f"/><rect x="6" y="1" width="5" height="5" fill="#c8d8ea"/><rect x="11" y="1" width="5" height="5" fill="#2a4a75"/><rect x="1" y="6" width="5" height="5" fill="#9db7d5"/><rect x="6" y="6" width="5" height="5" fill="#1f3a5f"/><rect x="11" y="6" width="5" height="5" fill="#b5c9e0"/><rect x="1" y="11" width="5" height="5" fill="#2a4a75"/><rect x="6" y="11" width="5" height="5" fill="#b5c9e0"/><rect x="11" y="11" width="5" height="5" fill="#e9eff6"/></svg>
<span class="t" style="left:228px;top:45.5px;font-size:14.5px;color:#000;letter-spacing:-0.106px;">dNBR_Final.tif</span>
<svg class="ic" style="left:203.5px;top:68.5px" width="17" height="17" viewBox="0 0 16 16"><rect x="1" y="1" width="5" height="5" fill="#1f3a5f"/><rect x="6" y="1" width="5" height="5" fill="#c8d8ea"/><rect x="11" y="1" width="5" height="5" fill="#2a4a75"/><rect x="1" y="6" width="5" height="5" fill="#9db7d5"/><rect x="6" y="6" width="5" height="5" fill="#1f3a5f"/><rect x="11" y="6" width="5" height="5" fill="#b5c9e0"/><rect x="1" y="11" width="5" height="5" fill="#2a4a75"/><rect x="6" y="11" width="5" height="5" fill="#b5c9e0"/><rect x="11" y="11" width="5" height="5" fill="#e9eff6"/></svg>
<span class="t" style="left:228px;top:67.5px;font-size:14.5px;color:#000;letter-spacing:-0.092px;">dNBR_Final.tif.ovr</span>
<svg class="ic" style="left:203.5px;top:90.5px" width="17" height="17" viewBox="0 0 16 16"><rect x="1" y="1" width="5" height="5" fill="#1f3a5f"/><rect x="6" y="1" width="5" height="5" fill="#c8d8ea"/><rect x="11" y="1" width="5" height="5" fill="#2a4a75"/><rect x="1" y="6" width="5" height="5" fill="#9db7d5"/><rect x="6" y="6" width="5" height="5" fill="#1f3a5f"/><rect x="11" y="6" width="5" height="5" fill="#b5c9e0"/><rect x="1" y="11" width="5" height="5" fill="#2a4a75"/><rect x="6" y="11" width="5" height="5" fill="#b5c9e0"/><rect x="11" y="11" width="5" height="5" fill="#e9eff6"/></svg>
<span class="t" style="left:228px;top:89.5px;font-size:14.5px;color:#000;letter-spacing:-0.191px;">dNBR_Final_Cerro.tif</span>
<svg class="ic" style="left:203.5px;top:112.5px" width="17" height="17" viewBox="0 0 16 16"><rect x="1" y="1" width="5" height="5" fill="#1f3a5f"/><rect x="6" y="1" width="5" height="5" fill="#c8d8ea"/><rect x="11" y="1" width="5" height="5" fill="#2a4a75"/><rect x="1" y="6" width="5" height="5" fill="#9db7d5"/><rect x="6" y="6" width="5" height="5" fill="#1f3a5f"/><rect x="11" y="6" width="5" height="5" fill="#b5c9e0"/><rect x="1" y="11" width="5" height="5" fill="#2a4a75"/><rect x="6" y="11" width="5" height="5" fill="#b5c9e0"/><rect x="11" y="11" width="5" height="5" fill="#e9eff6"/></svg>
<span class="t" style="left:228px;top:111.5px;font-size:14.5px;color:#000;letter-spacing:-0.187px;">dNBR_Final_Cerro.tif.ovr</span>
<svg class="ic" style="left:202.5px;top:134px" width="19" height="19" viewBox="0 0 16 16"><circle cx="8" cy="8" r="5.6" fill="none" stroke="#7ba23f" stroke-width="3.4"/><path d="M8.5 8.5 L15 15" stroke="#7ba23f" stroke-width="3.2"/><path d="M8 7.5 L12.5 12" stroke="#f0b41c" stroke-width="1.6"/><circle cx="7.8" cy="7.3" r="1.5" fill="#e8682c"/></svg>
<span class="t" style="left:228px;top:133.5px;font-size:14.5px;color:#000;letter-spacing:-0.073px;">Indice_Zona1</span>
<svg class="ic" style="left:201.5px;top:155.5px" width="21" height="17" viewBox="0 0 16 16" preserveAspectRatio="none"><path d="M1.200 5.500 C1.200 1 5.500 2 8 4.300 C10.500 2 14.800 1 14.800 5.500 V10.500 C14.800 15 10.500 14 8 11.700 C5.500 14 1.200 15 1.200 10.500Z" fill="#dfe8f4" stroke="#4a5568" stroke-width="0.9"/><path d="M2.200 5.500 C2.500 3 5.500 3.200 8 5.300 C10.500 3.200 13.500 3 13.800 5.500 V7.500 H2.200Z" fill="#f4f8fc"/></svg>
<span class="t" style="left:228px;top:155.5px;font-size:14.5px;color:#000;letter-spacing:0.122px;">LimiteImagen.shp</span>
<svg class="ic" style="left:201.5px;top:177.5px" width="21" height="17" viewBox="0 0 16 16" preserveAspectRatio="none"><path d="M1.200 5.500 C1.200 1 5.500 2 8 4.300 C10.500 2 14.800 1 14.800 5.500 V10.500 C14.800 15 10.500 14 8 11.700 C5.500 14 1.200 15 1.200 10.500Z" fill="#dfe8f4" stroke="#4a5568" stroke-width="0.9"/><path d="M2.200 5.500 C2.500 3 5.500 3.200 8 5.300 C10.500 3.200 13.500 3 13.800 5.500 V7.500 H2.200Z" fill="#f4f8fc"/></svg>
<span class="t" style="left:228px;top:177.5px;font-size:14.5px;color:#000;letter-spacing:-0.158px;">MascaraNubes.shp</span>
<svg class="ic" style="left:201.5px;top:199.5px" width="21" height="17" viewBox="0 0 16 16" preserveAspectRatio="none"><path d="M1.200 5.500 C1.200 1 5.500 2 8 4.300 C10.500 2 14.800 1 14.800 5.500 V10.500 C14.800 15 10.500 14 8 11.700 C5.500 14 1.200 15 1.200 10.500Z" fill="#dfe8f4" stroke="#4a5568" stroke-width="0.9"/><path d="M2.200 5.500 C2.500 3 5.500 3.200 8 5.300 C10.500 3.200 13.500 3 13.800 5.500 V7.500 H2.200Z" fill="#f4f8fc"/></svg>
<span class="t" style="left:228px;top:199.5px;font-size:14.5px;color:#000;letter-spacing:-0.250px;">Nubes_20160716.shp</span>
<svg class="ic" style="left:201.5px;top:221.5px" width="21" height="17" viewBox="0 0 16 16" preserveAspectRatio="none"><path d="M1.200 5.500 C1.200 1 5.500 2 8 4.300 C10.500 2 14.800 1 14.800 5.500 V10.500 C14.800 15 10.500 14 8 11.700 C5.500 14 1.200 15 1.200 10.500Z" fill="#dfe8f4" stroke="#4a5568" stroke-width="0.9"/><path d="M2.200 5.500 C2.500 3 5.500 3.200 8 5.300 C10.500 3.200 13.500 3 13.800 5.500 V7.500 H2.200Z" fill="#f4f8fc"/></svg>
<span class="t" style="left:228px;top:221.5px;font-size:14.5px;color:#000;letter-spacing:-0.250px;">Nubes_20181024.shp</span>
<svg class="ic" style="left:201.5px;top:243.5px" width="21" height="17" viewBox="0 0 16 16" preserveAspectRatio="none"><path d="M1.200 5.500 C1.200 1 5.500 2 8 4.300 C10.500 2 14.800 1 14.800 5.500 V10.500 C14.800 15 10.500 14 8 11.700 C5.500 14 1.200 15 1.200 10.500Z" fill="#dfe8f4" stroke="#4a5568" stroke-width="0.9"/><path d="M2.200 5.500 C2.500 3 5.500 3.200 8 5.300 C10.500 3.200 13.500 3 13.800 5.500 V7.500 H2.200Z" fill="#f4f8fc"/></svg>
<span class="t" style="left:228px;top:243.5px;font-size:14.5px;color:#000;letter-spacing:-0.101px;">Nubes_Total.shp</span>
<div class="b" style="left:0px;top:265px;width:459px;height:22px;background:#ececec;"></div>
<svg class="ic" style="left:203.5px;top:266.5px" width="17" height="17" viewBox="0 0 16 16"><rect x="1" y="1" width="5" height="5" fill="#1f4f8f"/><rect x="6" y="1" width="5" height="5" fill="#9cc4ee"/><rect x="11" y="1" width="5" height="5" fill="#2a5fa8"/><rect x="1" y="6" width="5" height="5" fill="#5a9be0"/><rect x="6" y="6" width="5" height="5" fill="#1f4f8f"/><rect x="11" y="6" width="5" height="5" fill="#c4dcf6"/><rect x="1" y="11" width="5" height="5" fill="#2a5fa8"/><rect x="6" y="11" width="5" height="5" fill="#7ab0ea"/><rect x="11" y="11" width="5" height="5" fill="#d6e6f8"/></svg>
<span class="t" style="left:228px;top:265.5px;font-size:14.5px;color:#000;letter-spacing:-0.110px;">NubesRas.tif</span>
<svg class="ic" style="left:203.5px;top:288.5px" width="17" height="17" viewBox="0 0 16 16"><rect x="1" y="1" width="5" height="5" fill="#1f3a5f"/><rect x="6" y="1" width="5" height="5" fill="#c8d8ea"/><rect x="11" y="1" width="5" height="5" fill="#2a4a75"/><rect x="1" y="6" width="5" height="5" fill="#9db7d5"/><rect x="6" y="6" width="5" height="5" fill="#1f3a5f"/><rect x="11" y="6" width="5" height="5" fill="#b5c9e0"/><rect x="1" y="11" width="5" height="5" fill="#2a4a75"/><rect x="6" y="11" width="5" height="5" fill="#b5c9e0"/><rect x="11" y="11" width="5" height="5" fill="#e9eff6"/></svg>
<span class="t" style="left:228px;top:287.5px;font-size:14.5px;color:#000;letter-spacing:-0.358px;">Post_NBR.tif</span>
<svg class="ic" style="left:203.5px;top:310.5px" width="17" height="17" viewBox="0 0 16 16"><rect x="1" y="1" width="5" height="5" fill="#1f3a5f"/><rect x="6" y="1" width="5" height="5" fill="#c8d8ea"/><rect x="11" y="1" width="5" height="5" fill="#2a4a75"/><rect x="1" y="6" width="5" height="5" fill="#9db7d5"/><rect x="6" y="6" width="5" height="5" fill="#1f3a5f"/><rect x="11" y="6" width="5" height="5" fill="#b5c9e0"/><rect x="1" y="11" width="5" height="5" fill="#2a4a75"/><rect x="6" y="11" width="5" height="5" fill="#b5c9e0"/><rect x="11" y="11" width="5" height="5" fill="#e9eff6"/></svg>
<span class="t" style="left:228px;top:309.5px;font-size:14.5px;color:#000;letter-spacing:-0.351px;">Pre_NBR.tif</span>
<svg class="ic" style="left:203.5px;top:332.5px" width="17" height="17" viewBox="0 0 16 16"><rect x="1" y="1" width="5" height="5" fill="#1f3a5f"/><rect x="6" y="1" width="5" height="5" fill="#c8d8ea"/><rect x="11" y="1" width="5" height="5" fill="#2a4a75"/><rect x="1" y="6" width="5" height="5" fill="#9db7d5"/><rect x="6" y="6" width="5" height="5" fill="#1f3a5f"/><rect x="11" y="6" width="5" height="5" fill="#b5c9e0"/><rect x="1" y="11" width="5" height="5" fill="#2a4a75"/><rect x="6" y="11" width="5" height="5" fill="#b5c9e0"/><rect x="11" y="11" width="5" height="5" fill="#e9eff6"/></svg>
<span class="t" style="left:228px;top:331.5px;font-size:14.5px;color:#000;letter-spacing:-0.159px;">Zona1_dNBR_Final.tif</span>
<svg class="ic" style="left:184px;top:6.500px" width="6" height="10" viewBox="0 0 6 10"><path d="M0.5 0.5 L5.5 5 L0.5 9.500Z" fill="#555"/></svg>
<svg class="ic" style="left:157px;top:362px" width="10" height="5" viewBox="0 0 10 5"><path d="M0 0 L5 5 L10 0Z" fill="#555"/></svg>
<svg class="ic" style="left:177px;top:355px" width="19" height="19" viewBox="0 0 16 16"><path d="M1.500 2.500 H7 L8.500 4 H14.500 V7 H1.500Z" fill="#8e8e8e"/><path d="M1.500 6 H6.500 L8 4.800 H14.500 V14 H1.500Z" fill="#f0f0f0" stroke="#8a8a8a" stroke-width="0.9"/></svg>
<span class="t" style="left:203px;top:353.5px;font-size:14.5px;color:#000;letter-spacing:-0.070px;">ZONA_2</span>
</div>
<div class="b" style="left:459px;top:256px;width:17px;height:365px;background:#e9e9e9;border-left:1px solid #d4d4d4;box-sizing:border-box;"></div>
<div class="b" style="left:460px;top:256px;width:16px;height:17px;background:#fbfbfb;border-bottom:1px solid #d0d0d0;box-sizing:border-box;"></div>
<div class="b" style="left:460px;top:604px;width:16px;height:17px;background:#fbfbfb;border-top:1px solid #d0d0d0;box-sizing:border-box;"></div>
<svg class="ic" style="left:463px;top:262px" width="10" height="5" viewBox="0 0 10 5"><path d="M0 5 L5 0 L10 5Z" fill="#555"/></svg>
<svg class="ic" style="left:463px;top:610px" width="10" height="5" viewBox="0 0 10 5"><path d="M0 0 L5 5 L10 0Z" fill="#555"/></svg>
<div class="b" style="left:460px;top:355px;width:16px;height:36px;background:#fdfdfd;border-top:1px solid #d0d0d0;border-bottom:1px solid #d0d0d0;box-sizing:border-box;"></div>
<div class="b" style="left:0px;top:621px;width:459px;height:17px;background:#e9e9e9;border-top:1px solid #d4d4d4;box-sizing:border-box;"></div>
<div class="b" style="left:0px;top:622px;width:17px;height:16px;background:#fbfbfb;"></div>
<div class="b" style="left:442px;top:622px;width:17px;height:16px;background:#fbfbfb;"></div>
<svg class="ic" style="left:5px;top:625px" width="5" height="10" viewBox="0 0 5 10"><path d="M5 0 L0 5 L5 10Z" fill="#555"/></svg>
<svg class="ic" style="left:447px;top:625px" width="5" height="10" viewBox="0 0 5 10"><path d="M0 0 L5 5 L0 10Z" fill="#555"/></svg>
<div class="b" style="left:17px;top:622px;width:170px;height:16px;background:#fdfdfd;border-left:1px solid #d0d0d0;border-right:1px solid #d0d0d0;box-sizing:border-box;"></div>
<div class="b" style="left:459px;top:621px;width:18px;height:17px;background:#f0f0f0;"></div>
<div class="b" style="left:480px;top:593px;width:2px;height:18px;background-image:radial-gradient(circle,#bdbdbd 0.7px,transparent 1px);background-size:2px 3px"></div>
<div class="b" style="left:1499px;top:593px;width:2px;height:18px;background-image:radial-gradient(circle,#bdbdbd 0.7px,transparent 1px);background-size:2px 3px"></div>
<div class="b" style="left:230px;top:642px;width:18px;height:2px;background-image:radial-gradient(circle,#bdbdbd 0.7px,transparent 1px);background-size:3px 2px"></div>
<span class="t" style="left:2px;top:647px;font-size:15px;color:#000;transform:scaleX(0.9225);transform-origin:0 50%;">Capas</span>
<svg class="ic" style="left:450px;top:650px" width="26" height="12" viewBox="0 0 26 12"><rect x="0.5" y="0.5" width="10" height="10.500" rx="1.8" fill="#f6f6f6" stroke="#5a5a5a" stroke-width="0.9"/><rect x="4.8" y="2.600" width="3.8" height="3.8" rx="0.8" fill="none" stroke="#5a5a5a" stroke-width="0.9"/><rect x="2.600" y="4.800" width="3.8" height="3.8" rx="0.8" fill="#f6f6f6" stroke="#5a5a5a" stroke-width="0.9"/><rect x="14.500" y="0.5" width="10" height="10.500" rx="1.8" fill="#f6f6f6" stroke="#5a5a5a" stroke-width="0.9"/><path d="M17 3 L22 8.500 M22 3 L17 8.500" stroke="#444" stroke-width="1.9"/></svg>
<svg class="ic" style="left:5px;top:672px" width="16" height="16" viewBox="0 0 16 16"><path d="M2 9 L9 4 L12 8 L5 13Z" fill="#e8a030" stroke="#a86a10" stroke-width="0.6"/><path d="M9 4 L13.5 1.5 L15 3.5 L12 8Z" fill="#c0392b"/><path d="M2 9 L1 13.5 L5 13Z" fill="#f0d060"/><path d="M10 11 l4 -1.5 l-1 3z" fill="#4f9d4b"/></svg>
<svg class="ic" style="left:31px;top:672px" width="16" height="16" viewBox="0 0 16 16"><rect x="4.5" y="1.5" width="7" height="9" fill="#f4f4f4" stroke="#666"/><rect x="2.5" y="4.5" width="7" height="9" fill="#e4e4e4" stroke="#666"/><circle cx="12" cy="12" r="3" fill="#4f9d4b"/><path d="M10.3 12 H13.7 M12 10.3 V13.7" stroke="#fff" stroke-width="1.1"/></svg>
<svg class="ic" style="left:57px;top:672px" width="16" height="16" viewBox="0 0 16 16"><path d="M1 8 C4 3.5 11 3.5 14 8 C11 12 4 12 1 8Z" fill="#eef2f6" stroke="#666" stroke-width="0.9"/><circle cx="7.5" cy="8" r="2.6" fill="#5a7ea8"/><circle cx="7.5" cy="8" r="1.1" fill="#222"/><path d="M10.5 12.5 h5 l-2.5 3z" fill="#555"/></svg>
<svg class="ic" style="left:81px;top:672px" width="16" height="16" viewBox="0 0 16 16"><path d="M1.5 2 H14.5 L9.5 8 V14.5 L6.5 13 V8Z" fill="#4a86c5" stroke="#2f5786" stroke-width="0.7"/><ellipse cx="8" cy="2.3" rx="6.5" ry="1.3" fill="#f0d060" stroke="#b79b1d" stroke-width="0.6"/></svg>
<svg class="ic" style="left:107px;top:672px" width="16" height="16" viewBox="0 0 16 16"><text x="6" y="11" font-family="Liberation Serif, serif" font-size="13" text-anchor="middle" fill="#c4c4c4">ε</text><rect x="8" y="8" width="6" height="6" rx="1" fill="#dcdcdc"/></svg>
<svg class="ic" style="left:147px;top:672px" width="16" height="16" viewBox="0 0 16 16"><path d="M3 3 V13 M3 5 H6 M3 9 H6 M3 13 H6" stroke="#888" fill="none"/><rect x="2" y="2" width="3" height="3" fill="#f4c440" stroke="#a88"/><path d="M10.5 1 V9 H8 L11.5 14.5 L15 9 H12.5 V1Z" fill="#3f74b3" stroke="#2a5285" stroke-width="0.5"/></svg>
<svg class="ic" style="left:172px;top:672px" width="16" height="16" viewBox="0 0 16 16"><path d="M3 3 V13 M3 5 H6 M3 9 H6 M3 13 H6" stroke="#888" fill="none"/><rect x="2" y="2" width="3" height="3" fill="#f4c440" stroke="#a88"/><path d="M10.5 15 V7 H8 L11.5 1.5 L15 7 H12.5 V15Z" fill="#3f74b3" stroke="#2a5285" stroke-width="0.5"/></svg>
<svg class="ic" style="left:196px;top:672px" width="16" height="16" viewBox="0 0 16 16"><rect x="1.5" y="1.5" width="11" height="11" fill="#fbfbfb" stroke="#666"/><rect x="9" y="10.5" width="6.5" height="4" rx="1" fill="#d63a3a"/><path d="M10.3 12.5 H14.2" stroke="#fff" stroke-width="1.1"/></svg>
<svg class="ic" style="left:129.0px;top:679.0px" width="8" height="4" viewBox="0 0 8 4"><path d="M0 0 H8 L4.0 4Z" fill="#9a9a9a"/></svg>
<div class="b" style="left:0px;top:696px;width:477px;height:300px;background:#fff;border:1px solid #c8c8c8;border-left:none;box-sizing:border-box;"></div>
<div class="b" style="left:27px;top:699.5px;width:17px;height:17px;background:#fff;border:1px solid #c4c4c4;box-sizing:border-box;"></div>
<div class="b" style="left:50px;top:699.0px;width:19px;height:19px;background:#b0735a;border:1px solid #6e6e6e;box-sizing:border-box;"></div>
<span class="t" style="left:75px;top:698.5px;font-size:14.5px;color:#c0c0c0;font-weight:bold;font-style:italic;letter-spacing:0.519px;">LimiteImagen</span>
<svg class="ic" style="left:7.0px;top:727.5px" width="9" height="5" viewBox="0 0 9 5"><path d="M0 0 H9 L4.5 5Z" fill="#555"/></svg>
<div class="b" style="left:27px;top:721.5px;width:17px;height:17px;background:#fff;border:1px solid #c4c4c4;box-sizing:border-box;"></div>
<svg class="ic" style="left:27px;top:721.5px" width="17" height="17" viewBox="0 0 16 16"><path d="M3.500 8 L6.500 12 L12.500 3.500" fill="none" stroke="#000" stroke-width="1.9"/></svg>
<svg class="ic" style="left:51px;top:721px" width="18" height="18" viewBox="0 0 16 16"><rect x="1" y="1" width="5" height="5" fill="#1f3a5f"/><rect x="6" y="1" width="5" height="5" fill="#c8d8ea"/><rect x="11" y="1" width="5" height="5" fill="#2a4a75"/><rect x="1" y="6" width="5" height="5" fill="#9db7d5"/><rect x="6" y="6" width="5" height="5" fill="#1f3a5f"/><rect x="11" y="6" width="5" height="5" fill="#b5c9e0"/><rect x="1" y="11" width="5" height="5" fill="#2a4a75"/><rect x="6" y="11" width="5" height="5" fill="#b5c9e0"/><rect x="11" y="11" width="5" height="5" fill="#e9eff6"/></svg>
<span class="t" style="left:76px;top:720.5px;font-size:14.5px;color:#000;font-weight:bold;letter-spacing:-0.115px;">NubesRas</span>
<div class="b" style="left:52px;top:744.0px;width:17px;height:17px;background:#433468;border:1px solid #433468;box-sizing:border-box;"></div>
<span class="t" style="left:75px;top:742.5px;font-size:14.5px;color:#000;">0</span>
<div class="b" style="left:52px;top:766.0px;width:17px;height:17px;background:#fff31a;border:1px solid #fff31a;box-sizing:border-box;"></div>
<span class="t" style="left:75px;top:764.5px;font-size:14.5px;color:#000;letter-spacing:-0.068px;">500</span>
<div class="b" style="left:27px;top:787.5px;width:17px;height:17px;background:#fff;border:1px solid #c4c4c4;box-sizing:border-box;"></div>
<div class="b" style="left:50px;top:787.0px;width:19px;height:19px;background:#6f9a6f;border:1px solid #6e6e6e;box-sizing:border-box;"></div>
<span class="t" style="left:75px;top:786.5px;font-size:14.5px;color:#c0c0c0;font-weight:bold;font-style:italic;letter-spacing:0.162px;">MascaraNubes</span>
<div class="b" style="left:27px;top:809.5px;width:17px;height:17px;background:#fff;border:1px solid #c4c4c4;box-sizing:border-box;"></div>
<div class="b" style="left:50px;top:809.0px;width:19px;height:19px;background:#d9b23a;border:1px solid #6e6e6e;box-sizing:border-box;"></div>
<span class="t" style="left:75px;top:808.5px;font-size:14.5px;color:#c0c0c0;font-weight:bold;font-style:italic;letter-spacing:0.211px;">Nubes_Total</span>
<svg class="ic" style="left:7.0px;top:837.5px" width="9" height="5" viewBox="0 0 9 5"><path d="M0 0 H9 L4.5 5Z" fill="#555"/></svg>
<div class="b" style="left:27px;top:831.5px;width:17px;height:17px;background:#fff;border:1px solid #c4c4c4;box-sizing:border-box;"></div>
<svg class="ic" style="left:51px;top:831px" width="18" height="18" viewBox="0 0 16 16"><rect x="1" y="1" width="5" height="5" fill="#1f3a5f"/><rect x="6" y="1" width="5" height="5" fill="#c8d8ea"/><rect x="11" y="1" width="5" height="5" fill="#2a4a75"/><rect x="1" y="6" width="5" height="5" fill="#9db7d5"/><rect x="6" y="6" width="5" height="5" fill="#1f3a5f"/><rect x="11" y="6" width="5" height="5" fill="#b5c9e0"/><rect x="1" y="11" width="5" height="5" fill="#2a4a75"/><rect x="6" y="11" width="5" height="5" fill="#b5c9e0"/><rect x="11" y="11" width="5" height="5" fill="#e9eff6"/></svg>
<span class="t" style="left:76px;top:830.5px;font-size:14.5px;color:#c0c0c0;font-weight:bold;font-style:italic;letter-spacing:0.005px;">dNBR</span>
<div class="b" style="left:52px;top:854.0px;width:17px;height:17px;background:#000;border:1px solid #000;box-sizing:border-box;"></div>
<span class="t" style="left:75px;top:852.5px;font-size:14.5px;color:#000;letter-spacing:-0.056px;">-1.03288</span>
<span class="t" style="left:75px;top:874.5px;font-size:14.5px;color:#000;letter-spacing:0.105px;">1.21116</span>
<div class="b" style="left:484px;top:205px;width:1012px;height:791px;background:#fff;border:1px solid #b4b4b4;border-right-color:#dcdcdc;border-bottom-color:#dcdcdc;box-sizing:border-box;"></div>
<svg class="map" width="752" height="752" viewBox="614 224 752 752" style="position:absolute;left:614px;top:224px;background:#433468" shape-rendering="crispEdges">
<g fill="#fff31a">
<polygon points="614.0,224.0 784.5,224.0 782.0,227.5 772.0,230.0 764.5,231.2 759.6,235.0 749.6,236.2 753.3,238.7 762.1,239.9 764.5,244.9 769.5,248.7 772.0,253.7 775.8,257.4 777.0,263.6 772.0,268.6 764.5,271.1 759.6,273.6 753.3,273.6 757.1,277.3 764.5,281.1 772.0,286.1 775.8,291.0 779.5,294.8 777.0,299.8 773.3,304.8 769.5,307.2 763.3,304.8 757.1,301.0 749.6,297.3 742.1,292.3 734.6,290.5 737.1,294.8 742.1,301.0 747.1,307.2 754.6,312.2 762.1,316.0 767.0,319.7 764.5,323.4 759.6,324.7 757.1,329.7 760.8,334.7 759.6,342.1 762.1,347.1 759.6,354.6 757.1,359.6 759.6,364.6 755.8,369.6 749.6,373.3 742.1,375.8 734.6,374.5 727.2,370.8 720.9,367.1 717.2,364.6 719.7,369.6 717.2,374.5 720.9,380.8 718.4,385.8 714.7,392.0 712.2,397.0 711.0,405.7 714.7,400.7 719.7,394.5 724.7,389.5 729.6,387.0 734.6,389.5 742.1,392.0 749.6,395.7 754.6,402.0 757.1,409.4 759.6,416.9 764.5,421.9 769.5,426.9 767.0,431.9 762.1,434.4 757.1,431.9 752.1,428.1 745.9,424.4 739.6,426.9 733.4,424.4 727.2,423.2 722.2,424.4 723.4,430.6 720.9,436.9 715.9,440.6 718.4,444.3 724.7,445.6 732.1,449.3 738.4,454.3 744.6,460.5 748.3,466.8 749.6,476.0 748.3,476.0 747.1,481.0 739.6,479.7 732.1,478.5 725.9,481.0 722.2,487.2 725.9,493.4 724.7,499.7 728.4,505.9 725.9,513.4 720.9,518.4 715.9,523.4 712.2,528.3 714.7,534.6 712.2,538.3 708.5,532.1 702.2,530.3 696.0,532.1 691.0,537.1 688.5,543.3 684.8,549.5 678.5,550.8 673.6,550.3 671.1,555.8 672.3,563.2 677.3,569.5 679.8,575.7 677.3,583.2 672.3,588.2 666.1,593.2 659.9,590.7 658.6,595.6 653.6,600.6 649.9,606.9 644.9,613.1 638.7,611.9 633.7,610.6 629.9,616.8 627.4,624.3 631.2,629.3 638.7,630.5 646.1,625.6 656.1,625.1 654.9,618.1 659.9,611.9 667.3,608.1 673.6,601.9 678.5,596.9 687.3,594.4 694.8,595.6 693.5,601.9 698.5,605.6 706.0,605.6 707.2,611.9 703.5,619.3 704.7,625.6 699.7,631.8 697.2,638.0 702.2,640.5 701.0,648.0 694.8,648.0 699.7,654.2 692.3,655.0 684.8,655.5 683.5,660.5 688.5,665.4 689.8,675.4 688.5,682.9 689.8,690.4 684.8,695.4 682.3,701.6 681.0,706.6 687.3,705.3 692.3,699.1 696.7,697.9 696.0,705.3 693.5,712.8 694.8,721.5 693.5,732.0 694.8,732.0 697.2,737.0 704.7,737.0 706.0,742.0 699.7,745.7 707.2,747.0 714.7,745.7 719.7,749.4 719.7,755.7 722.2,761.9 719.7,769.4 717.2,778.1 712.2,775.6 708.5,778.1 707.2,785.6 709.7,791.8 714.7,793.1 713.4,799.3 708.5,803.0 703.5,805.5 702.2,811.8 697.2,809.3 694.8,815.5 691.0,821.7 688.5,828.0 691.0,833.0 697.2,834.2 703.5,839.2 702.2,846.7 703.5,856.6 701.0,864.1 702.2,871.6 701.0,879.1 706.0,884.1 709.7,891.5 714.7,897.8 713.4,902.7 708.5,901.5 704.7,896.5 699.7,894.0 696.0,899.0 691.0,901.5 689.8,907.7 691.0,915.2 688.5,922.7 683.5,925.2 684.8,931.4 692.3,932.7 696.0,937.6 693.5,945.1 689.8,951.4 683.5,955.1 681.0,961.3 676.1,965.1 675.3,971.3 676.8,976.3 614.0,976.0"/>
<polygon points="769.5,311.0 779.5,312.2 787.0,317.2 793.2,322.2 795.7,328.4 789.5,329.7 784.5,325.9 782.0,330.9 777.0,327.2 772.0,319.7 768.3,316.0"/>
<polygon points="772.0,338.4 779.5,342.1 784.5,347.1 794.5,345.9 793.2,352.1 788.2,357.1 782.0,354.6 777.0,349.6 772.0,344.6"/>
<polygon points="760.8,345.9 769.5,349.6 774.5,355.9 777.0,362.1 772.0,363.3 765.8,357.1 760.8,352.1"/>
<polygon points="769.5,367.1 775.8,362.1 784.5,363.3 793.2,368.3 794.5,373.3 788.2,375.8 782.0,372.1 775.8,375.8 769.5,374.5 767.0,370.8"/>
<polygon points="764.5,382.0 772.0,379.5 778.3,383.3 777.0,390.7 772.0,394.5 765.8,397.5 760.8,394.5 762.6,387.0"/>
<polygon points="782.0,394.5 789.5,392.0 799.4,390.7 806.9,394.5 809.4,402.0 806.9,409.4 801.9,413.2 804.4,419.4 803.2,426.9 799.4,430.6 793.2,426.9 787.0,425.6 782.0,431.9 774.5,430.6 769.5,434.4 765.8,429.4 769.5,424.4 772.0,418.2 767.0,413.2 762.1,410.7 764.5,407.0 772.0,409.4 779.5,411.9 784.5,408.2 782.0,402.0"/>
<polygon points="794.5,435.6 801.9,433.9 809.4,438.1 813.2,444.3 816.9,450.6 821.9,456.8 821.9,464.3 818.1,469.3 813.2,471.8 809.4,466.8 805.7,460.5 800.7,456.8 795.7,451.8 792.0,445.6 789.5,440.6"/>
<polygon points="787.5,468.0 797.0,467.3 799.4,471.8 795.7,475.5 789.5,474.3"/>
<polygon points="819.4,267.4 824.4,266.1 821.9,272.3 825.6,276.1 821.9,281.1 818.1,279.8 813.2,283.6 815.6,277.3"/>
<polygon points="835.6,291.0 839.3,286.1 845.6,282.3 849.3,286.1 845.6,292.3 840.6,294.8 835.6,296.0"/>
<polygon points="848.1,259.9 851.8,258.6 853.0,264.9 855.5,271.1 859.3,272.3 855.5,278.6 851.8,281.1 850.5,274.8 853.0,269.9 849.3,266.1"/>
<polygon points="804.4,325.9 809.4,327.2 814.4,325.9 818.1,329.7 814.4,333.4 809.4,332.2"/>
<polygon points="820.6,333.4 826.9,330.9 829.4,334.7 825.6,338.4 821.9,337.2"/>
<polygon points="841.8,354.6 845.6,349.6 849.3,352.1 853.0,347.1 859.3,344.6 866.0,343.4 866.0,349.6 860.5,355.9 856.8,362.1 851.8,364.6 849.3,359.6 844.3,363.3 841.3,359.6"/>
<polygon points="826.9,377.0 831.9,378.3 829.4,384.5 825.6,389.5 823.1,385.8"/>
<polygon points="836.8,416.9 841.8,414.4 844.3,419.4 846.8,426.9 843.1,429.4 838.1,428.1 834.3,433.1 829.4,434.4 827.4,431.9 831.9,428.1 835.6,423.2"/>
<polygon points="813.2,418.2 817.4,419.4 816.4,425.6 812.4,429.4 809.9,425.6"/>
<polygon points="727.2,430.6 733.4,431.9 735.9,436.9 732.1,439.4 727.2,436.9"/>
<polygon points="739.6,431.9 745.9,433.1 749.6,439.4 744.6,443.1 740.9,438.1"/>
<polygon points="749.6,439.4 757.1,436.9 759.6,441.9 754.6,444.3"/>
<polygon points="725.9,375.8 734.6,374.5 739.6,379.5 738.4,385.8 732.1,387.5 727.2,384.5"/>
<polygon points="744.6,379.5 749.6,378.3 752.1,383.3 747.1,385.8"/>
<polygon points="866.0,334.7 871.0,330.9 877.2,328.4 882.2,333.4 879.7,340.9 874.7,347.1 869.7,352.1 866.0,352.1"/>
<polygon points="872.2,355.9 881.0,352.1 885.9,355.9 884.7,363.3 885.9,369.6 882.2,375.8 883.4,382.0 879.7,387.0 873.5,384.5 868.5,379.5 867.2,372.1 871.0,367.1 873.5,360.8"/>
<polygon points="881.0,387.0 884.7,390.7 881.0,394.5 876.0,394.5 877.2,399.5 872.2,398.2 868.5,404.5 866.0,405.7 866.0,398.2 871.0,394.5 876.0,392.0"/>
<polygon points="878.5,409.4 884.7,408.9 885.9,413.2 882.2,416.9 883.4,423.2 879.7,429.4 876.0,435.6 871.0,435.6 868.5,430.6 872.2,424.4 873.5,418.2 877.2,414.4"/>
<polygon points="1056.7,344.6 1062.9,342.6 1067.9,340.1 1077.9,340.9 1080.4,347.1 1081.6,355.9 1077.9,362.1 1073.4,363.3 1072.4,355.9 1069.2,350.9 1062.9,348.4 1057.4,347.6"/>
<polygon points="1092.8,325.9 1096.6,324.7 1099.1,330.9 1096.6,333.4 1093.3,329.7"/>
<polygon points="1105.3,362.1 1111.5,360.8 1116.5,365.8 1119.0,370.8 1114.0,372.6 1109.0,370.8 1104.8,369.6"/>
<polygon points="1332.6,310.2 1335.9,311.7 1333.4,316.0 1330.1,316.7"/>
<polygon points="1325.2,319.2 1329.4,324.7 1328.9,332.2 1332.6,335.9 1331.4,343.4 1335.9,347.1 1335.9,355.9 1331.4,359.1 1327.6,357.1 1327.6,349.6 1323.9,343.4 1322.7,337.2 1319.4,330.9 1320.9,324.7"/>
<polygon points="1336.9,337.2 1341.4,339.6 1340.1,344.6 1335.9,343.4"/>
<polygon points="1358.8,345.9 1363.8,347.1 1363.3,350.9 1357.6,352.1 1355.8,349.6"/>
<polygon points="1315.2,359.6 1321.4,359.1 1323.9,363.3 1321.4,369.6 1318.9,374.0 1313.9,374.5 1312.7,371.6 1308.5,372.6 1307.7,370.1 1312.7,368.3 1315.9,365.8"/>
<polygon points="1355.1,362.8 1358.3,368.3 1360.1,372.1 1355.1,374.0 1351.3,375.8 1353.3,369.6"/>
<polygon points="1286.5,380.8 1292.7,379.0 1298.5,383.3 1302.7,390.7 1306.0,397.0 1304.5,403.2 1300.2,408.2 1295.2,411.4 1292.0,411.9 1292.7,405.7 1296.5,402.0 1297.7,394.5 1295.2,388.3 1290.3,384.0"/>
<polygon points="1347.6,419.4 1351.8,418.7 1353.8,425.6 1350.1,424.9 1346.3,422.4"/>
<polygon points="1277.8,431.4 1282.8,430.9 1283.3,439.4 1276.5,439.9 1275.3,436.9 1271.6,438.1 1271.6,436.4 1276.5,434.9"/>
<polygon points="1260.3,453.1 1269.1,452.3 1269.6,455.6 1264.6,458.8 1261.1,456.8"/>
<polygon points="1317.7,439.4 1325.2,436.9 1327.6,440.6 1322.7,443.1 1318.9,442.6"/>
<polygon points="1326.4,441.9 1332.6,443.1 1335.1,446.8 1330.1,448.1"/>
<polygon points="1313.4,449.3 1317.7,450.6 1318.9,455.6 1315.2,456.8"/>
<polygon points="1320.2,451.8 1328.9,450.6 1336.4,449.3 1338.4,455.6 1333.9,459.3 1326.4,456.8 1321.4,455.6"/>
<polygon points="1333.9,460.5 1341.4,458.1 1346.3,460.5 1350.1,466.8 1346.3,468.0 1340.1,464.3 1333.9,465.5"/>
<polygon points="1311.4,467.3 1315.2,471.8 1321.4,474.3 1320.2,476.0 1307.7,476.0 1306.5,471.8"/>
<polygon points="793.2,476.0 801.9,476.0 803.2,480.5 797.0,483.0 790.7,482.2"/>
<polygon points="762.1,522.1 768.3,523.4 772.0,520.9 774.0,524.6 771.5,529.6 765.8,532.1 762.1,529.6"/>
<polygon points="698.5,554.5 703.5,549.5 708.5,550.8 714.7,550.3 719.7,555.8 724.7,559.5 729.6,560.8 729.2,563.7 724.7,567.0 719.7,564.5 715.9,559.5 709.7,558.3 703.5,559.5 698.5,559.5"/>
<polygon points="762.6,560.3 767.0,559.5 765.8,565.7 762.6,570.7 762.1,574.5 759.1,573.2 760.1,565.7"/>
<polygon points="745.9,588.2 754.6,586.4 755.1,590.7 749.6,595.2 742.1,597.6 735.9,598.1 734.6,595.2 740.9,591.9"/>
<polygon points="744.1,703.3 749.6,701.1 757.1,700.3 760.8,704.1 757.1,707.8 754.6,715.3 755.8,722.8 752.1,725.3 748.3,719.0 747.1,711.6 744.6,707.8"/>
<polygon points="739.6,717.3 743.4,719.0 740.9,725.3 735.9,729.0 733.9,725.3 736.6,721.5"/>
<polygon points="1028.0,609.4 1031.8,611.9 1034.3,618.1 1039.2,615.6 1046.7,615.6 1051.0,621.8 1050.5,626.8 1045.5,630.5 1041.7,635.5 1038.0,636.8 1035.5,633.0 1029.3,633.0 1022.5,633.0 1021.8,630.0 1028.0,628.1 1029.3,621.8 1026.8,615.6"/>
<polygon points="952.0,704.1 957.0,706.6 962.0,701.6 968.2,699.1 974.4,701.6 975.7,696.6 980.7,692.9 983.2,697.9 988.1,696.6 986.9,690.4 990.6,687.9 995.6,691.6 1001.9,688.4 1004.3,691.6 1000.6,696.6 995.6,699.1 993.1,702.8 988.1,701.6 986.9,706.6 990.6,711.6 996.9,715.3 1001.9,714.1 1000.6,719.0 995.6,721.5 998.1,726.5 1003.1,727.8 1001.9,732.0 964.5,732.0 959.5,727.8 957.0,721.5 953.2,715.3"/>
<polygon points="1013.1,696.6 1016.8,695.9 1014.3,701.6 1010.6,706.6 1006.8,711.6 1001.9,714.1 1000.6,710.3 1005.6,705.3 1009.3,700.3"/>
<polygon points="1008.1,716.5 1013.1,714.1 1015.6,717.3 1010.6,719.0"/>
<polygon points="1049.2,685.4 1055.4,682.9 1062.9,680.4 1067.4,685.4 1065.4,690.4 1069.2,695.4 1072.9,690.4 1077.9,689.1 1080.4,684.1 1085.4,680.4 1089.1,675.4 1091.6,669.2 1094.1,664.2 1097.8,667.9 1096.6,674.2 1094.1,679.2 1090.3,684.1 1086.6,687.9 1082.9,692.9 1080.4,697.9 1077.9,704.1 1079.1,711.6 1077.9,719.0 1080.4,724.0 1076.6,725.3 1077.9,732.0 1070.4,732.0 1069.2,726.5 1064.2,725.3 1060.4,721.5 1057.9,716.5 1054.2,712.8 1050.5,710.3 1045.5,712.8 1040.5,714.1 1039.2,710.3 1043.0,705.3 1045.5,700.3 1048.0,694.1"/>
<polygon points="1092.8,694.9 1096.6,699.1 1100.3,697.9 1104.8,701.6 1101.6,705.3 1097.8,706.6 1095.3,711.6 1091.6,714.8 1087.9,714.1 1087.4,709.1 1089.8,704.1 1090.3,699.1"/>
<polygon points="1096.6,682.9 1102.8,681.6 1108.3,682.4 1106.5,685.9 1100.3,686.6 1095.8,685.9"/>
<polygon points="1101.6,666.7 1104.8,669.2 1102.8,675.4 1099.8,676.7 1099.1,671.7"/>
<polygon points="1087.4,653.0 1094.1,653.5 1095.3,656.7 1090.3,658.0"/>
<polygon points="1064.9,668.4 1067.9,670.4 1065.4,674.2 1062.4,672.4"/>
<polygon points="1120.3,653.0 1122.0,653.5 1122.0,659.2 1119.8,657.5"/>
<polygon points="1133.2,648.0 1137.0,641.8 1144.4,640.5 1150.7,640.5 1153.2,645.5 1158.1,641.8 1161.9,645.5 1165.6,648.0 1168.1,644.3 1171.9,648.0 1174.3,655.5 1178.1,650.5 1185.6,648.0 1191.8,644.3 1196.8,641.8 1201.8,643.0 1205.5,648.0 1208.0,656.7 1210.5,650.5 1215.5,646.7 1220.5,643.0 1218.0,636.8 1216.7,629.3 1219.2,623.1 1218.0,616.8 1221.7,614.3 1225.4,619.3 1231.7,615.6 1237.9,611.9 1244.1,608.1 1249.1,604.4 1250.4,599.4 1256.6,598.1 1261.6,595.6 1259.1,589.4 1262.8,583.2 1261.6,575.7 1265.3,569.5 1271.6,566.2 1275.3,570.7 1272.8,575.7 1277.8,573.2 1284.0,572.0 1289.0,575.7 1294.0,580.7 1297.7,575.7 1299.0,569.5 1305.2,568.2 1310.2,572.0 1311.4,579.4 1317.7,583.2 1321.4,589.4 1326.4,595.6 1330.1,600.6 1336.4,605.6 1337.6,611.9 1343.9,614.3 1348.8,619.3 1355.1,624.3 1358.8,628.1 1356.3,635.5 1360.1,641.8 1365.8,646.7 1365.8,665.4 1360.1,672.9 1355.1,675.4 1353.8,682.9 1357.6,689.1 1358.8,696.6 1353.8,700.3 1346.3,699.1 1338.9,697.9 1331.4,696.6 1323.9,699.1 1316.4,701.6 1311.4,705.3 1306.5,707.8 1301.5,704.1 1296.5,709.1 1297.7,716.5 1294.0,721.5 1290.3,726.5 1287.8,732.0 1281.5,733.2 1271.6,734.5 1269.1,739.5 1265.3,744.5 1266.6,750.7 1261.6,755.7 1257.9,761.9 1251.6,765.7 1246.6,769.4 1242.9,774.4 1236.7,773.1 1229.2,774.4 1221.7,770.6 1218.0,774.4 1213.0,771.9 1211.7,764.4 1206.8,759.4 1201.8,753.2 1195.5,750.7 1189.3,748.2 1184.3,744.5 1183.1,747.0 1178.1,750.7 1171.9,754.4 1166.9,756.9 1163.1,756.9 1165.6,749.4 1168.1,742.0 1169.4,735.7 1170.6,732.0 1168.1,722.8 1169.4,715.3 1173.1,709.1 1175.6,701.6 1178.1,695.4 1175.6,690.4 1170.6,685.4 1164.4,681.6 1159.4,676.7 1154.4,672.9 1148.2,671.7 1145.7,667.9 1148.2,661.7 1150.7,655.5 1146.9,660.5 1143.2,663.0 1140.7,658.0 1143.2,653.0 1137.0,651.7"/>
<polygon points="1122.0,654.2 1125.7,653.5 1127.0,657.5 1123.2,660.5 1122.0,660.0"/>
<polygon points="1128.2,650.5 1133.2,648.0 1135.7,651.7 1132.0,658.0 1127.5,656.7"/>
<polygon points="1138.2,668.4 1143.9,667.9 1144.4,671.7 1139.0,672.9"/>
<polygon points="1139.4,706.6 1145.7,704.1 1148.9,707.8 1146.9,712.8 1148.2,717.8 1145.7,719.0 1143.2,712.8 1138.2,711.6"/>
<polygon points="1264.1,488.5 1268.6,488.0 1267.8,494.7 1265.3,500.9 1262.1,500.9 1262.3,493.4"/>
<polygon points="1270.3,508.4 1273.6,509.7 1272.8,515.9 1269.1,517.1"/>
<polygon points="1257.9,522.1 1262.8,520.4 1263.6,522.9 1259.1,525.9"/>
<polygon points="1311.4,478.5 1316.4,476.0 1321.4,477.2 1326.4,481.0 1328.9,487.2 1328.4,495.9 1325.2,502.2 1327.6,508.4 1331.4,513.4 1335.9,519.6 1335.1,523.4 1330.1,524.6 1326.4,529.6 1328.9,535.8 1323.9,537.1 1318.9,534.6 1315.2,538.3 1311.4,543.3 1306.5,545.8 1300.2,544.5 1297.7,539.6 1294.0,537.1 1289.0,538.3 1284.0,534.6 1282.8,528.3 1284.0,522.1 1289.0,520.9 1294.0,522.1 1299.0,518.4 1305.2,517.1 1307.7,512.1 1306.5,507.2 1300.2,505.9 1296.5,503.4 1297.7,498.4 1302.7,497.2 1306.5,499.7 1310.2,497.2 1312.7,491.0 1311.4,484.7"/>
<polygon points="1281.5,542.8 1287.8,541.3 1293.5,543.3 1292.0,549.5 1287.8,552.0 1281.5,550.3 1279.0,548.3"/>
<polygon points="1284.0,563.2 1291.5,562.0 1296.5,557.0 1301.5,559.5 1305.2,563.2 1309.0,566.2 1305.2,568.7 1299.0,567.0 1294.0,569.5 1287.8,567.0 1283.5,566.2"/>
<polygon points="1357.6,483.5 1362.5,482.2 1365.8,481.0 1365.8,514.6 1360.1,513.4 1353.8,512.9 1348.8,510.9 1345.1,507.9 1347.6,504.7 1352.6,502.2 1355.1,495.9 1357.6,489.7"/>
<polygon points="1335.1,532.1 1341.4,528.3 1345.1,530.8 1342.6,537.1 1345.1,542.1 1343.9,548.3 1338.9,549.5 1336.4,552.0 1332.6,550.8 1333.4,545.8 1336.9,542.1 1335.9,537.1"/>
<polygon points="1348.8,550.8 1353.8,545.8 1360.1,543.3 1365.8,542.1 1365.8,553.3 1363.8,559.5 1361.3,565.7 1357.6,569.5 1355.1,564.5 1352.6,559.5 1348.3,557.0"/>
<polygon points="1338.9,711.6 1345.1,710.3 1347.6,715.3 1343.9,721.5 1340.1,719.0 1337.6,715.3"/>
<polygon points="818.1,760.7 821.9,753.2 828.1,752.4 831.9,756.9 836.8,760.7 841.8,765.7 846.8,769.4 848.1,773.1 844.3,774.9 839.3,770.6 833.1,769.4 828.1,765.7 823.1,763.2 819.4,765.7 816.4,764.4"/>
<polygon points="763.3,788.1 768.3,781.9 774.5,780.6 779.5,784.3 780.7,790.6 775.8,789.3 770.8,793.1 765.8,791.8"/>
<polygon points="735.9,821.7 739.6,825.5 739.1,831.7 732.1,832.2 729.2,829.7 733.4,826.7"/>
<polygon points="750.8,842.9 755.8,842.2 757.1,847.9 760.8,851.6 762.1,855.4 757.1,854.1 752.1,851.6 749.1,847.9"/>
<polygon points="744.6,859.1 749.6,857.9 750.8,864.1 750.1,871.1 746.6,870.3 745.9,864.1"/>
<polygon points="775.8,874.8 779.5,876.6 777.5,884.6 770.8,885.3 769.0,882.8 772.0,879.1"/>
<polygon points="758.3,971.3 764.0,970.1 764.5,976.3 757.6,976.3"/>
<polygon points="834.3,840.4 839.3,839.2 843.1,842.9 840.6,844.7 835.6,843.7"/>
<polygon points="803.2,864.1 806.9,857.9 811.9,856.6 814.4,862.9 820.6,866.6 824.4,870.3 828.1,867.9 834.3,865.4 841.8,862.9 850.5,861.6 853.0,856.6 859.3,855.4 863.0,860.4 866.0,861.6 866.0,976.3 824.4,976.3 823.1,971.3 825.6,965.1 820.6,962.6 816.9,967.6 818.1,972.5 813.2,975.0 811.9,970.1 808.2,966.3 806.9,960.1 811.9,961.3 816.9,957.6 821.9,953.9 825.6,948.9 824.4,942.6 819.4,940.1 816.9,933.9 813.2,928.9 816.9,925.2 811.9,923.9 805.7,924.4 799.4,922.7 803.2,917.7 808.2,914.0 813.2,909.0 815.6,904.0 814.4,896.5 813.2,889.0 815.6,881.6 813.2,875.3 808.2,871.6 804.4,869.1"/>
<polygon points="897.2,771.9 899.7,778.1 902.1,785.6 907.1,790.6 912.1,795.6 915.9,800.5 922.1,803.0 925.8,798.1 928.3,803.0 927.1,806.8 933.3,811.8 939.5,816.8 938.3,823.0 933.3,825.5 932.1,831.7 930.8,839.2 933.3,844.2 940.8,846.7 940.8,850.4 934.5,851.6 932.1,856.6 928.3,855.4 927.1,850.4 922.1,851.6 918.3,847.9 912.1,847.9 905.9,849.2 898.4,850.4 890.9,852.9 886.4,852.9 885.9,847.9 889.7,840.4 895.9,837.9 903.4,837.9 910.9,839.2 914.6,834.2 912.1,829.2 910.9,823.0 912.1,816.8 907.1,811.8 902.1,806.8 897.2,804.3 895.9,796.8 897.2,790.6 894.7,785.6 890.9,783.1 894.7,779.4"/>
<polygon points="940.3,857.9 943.3,856.6 946.3,860.4 945.8,865.4 942.0,863.6"/>
<polygon points="955.7,836.7 959.5,834.7 962.0,839.2 959.5,845.4 958.2,851.6 962.0,856.6 968.2,860.4 968.7,866.6 964.5,871.6 960.7,875.3 957.0,872.8 954.5,877.8 953.2,882.8 949.5,881.6 948.8,876.6 945.8,872.8 949.5,867.9 950.8,861.6 947.8,856.6 949.5,850.4 952.0,845.4 954.5,841.7"/>
<polygon points="965.7,884.1 971.9,883.6 976.9,880.3 981.2,882.8 979.4,886.5 975.7,890.3 974.4,896.5 973.2,902.7 969.4,901.5 965.7,899.0 961.5,896.5 964.5,891.5 965.7,887.8"/>
<polygon points="958.2,932.2 964.5,932.7 964.5,936.4 960.7,937.6 959.5,940.9 956.2,939.4 957.0,935.2"/>
<polygon points="866.0,889.0 869.7,885.3 876.0,882.8 881.0,879.1 882.2,875.3 885.9,879.1 892.2,877.8 894.7,882.8 900.9,885.3 907.1,887.8 908.9,890.3 903.4,892.8 898.4,895.3 893.4,897.8 888.4,896.5 883.4,899.0 878.5,897.8 873.5,896.5 868.5,901.5 866.0,904.0 864.8,896.5"/>
<polygon points="866.0,906.5 872.2,904.0 877.2,902.7 882.2,906.5 887.2,909.0 892.2,907.7 894.7,912.7 892.2,917.7 885.9,919.0 881.0,921.4 877.2,926.4 876.0,931.4 881.0,933.9 887.2,938.9 890.9,935.2 895.9,933.9 897.9,938.9 895.9,943.9 898.4,950.1 899.7,957.6 898.4,963.8 902.1,968.8 908.4,970.1 913.4,972.5 914.6,976.3 864.8,976.3 864.8,906.5"/>
<polygon points="985.6,732.0 998.1,732.0 995.6,735.0 990.6,737.5 986.9,735.7"/>
<polygon points="1104.1,851.2 1107.8,852.1 1108.3,856.6 1105.3,860.4 1102.8,856.6"/>
<polygon points="1111.5,859.1 1115.3,860.4 1117.8,865.4 1122.0,866.6 1122.0,871.1 1116.5,871.1 1112.3,867.9 1110.3,862.9"/>
<polygon points="1101.6,897.0 1105.3,898.5 1107.0,902.7 1104.1,905.2 1100.8,902.7"/>
<polygon points="1102.8,911.0 1107.3,911.5 1109.0,917.7 1107.8,923.4 1104.1,923.4 1102.3,917.7"/>
<polygon points="1294.0,732.0 1316.4,732.0 1313.9,735.7 1306.5,735.0 1301.5,738.2 1296.5,735.7"/>
<polygon points="1332.6,732.0 1338.9,733.2 1343.4,737.0 1342.6,742.0 1337.6,739.5 1333.9,740.7 1330.9,737.0"/>
<polygon points="1160.6,762.4 1166.9,759.9 1173.8,758.9 1174.3,763.2 1169.4,766.9 1163.1,768.9 1159.9,766.4"/>
<polygon points="1173.1,766.9 1177.3,768.1 1178.8,773.1 1175.6,777.4 1171.4,778.1 1169.9,774.4"/>
<polygon points="1214.2,776.4 1219.7,776.9 1221.2,780.6 1216.7,783.1 1214.2,787.3 1211.2,785.6 1212.2,780.6"/>
<polygon points="1265.3,766.9 1270.3,765.7 1271.6,770.6 1276.5,771.9 1274.1,776.4 1269.1,778.1 1265.3,781.9 1260.3,785.6 1256.6,788.1 1255.4,784.3 1258.6,780.6 1261.6,775.6 1262.8,770.6"/>
<polygon points="1305.2,776.4 1310.2,774.9 1313.4,779.4 1312.7,785.6 1317.7,788.1 1322.7,790.6 1325.2,795.6 1330.1,798.1 1333.9,801.8 1334.4,806.3 1330.1,808.0 1325.2,806.8 1320.2,804.3 1317.7,799.3 1312.7,795.6 1307.7,794.3 1302.7,795.6 1301.0,791.8 1305.2,788.8 1301.5,785.6 1296.5,786.8 1297.7,783.8 1303.5,781.9"/>
<polygon points="1342.6,788.1 1348.8,784.3 1355.1,781.9 1361.3,781.9 1365.8,780.6 1365.8,806.8 1362.5,811.3 1357.6,811.8 1355.1,806.8 1350.1,804.3 1347.6,799.3 1350.1,794.3 1345.1,791.8 1341.4,790.6"/>
<polygon points="1266.6,806.8 1271.6,804.3 1277.8,801.8 1282.8,805.5 1286.5,810.5 1285.3,814.8 1280.3,813.8 1276.5,809.8 1271.6,813.0 1267.8,811.3"/>
<polygon points="1272.8,818.0 1277.8,819.2 1281.5,824.2 1284.0,828.0 1281.5,831.7 1283.5,836.2 1279.0,835.4 1277.8,830.5 1274.1,828.0 1271.6,823.0"/>
<polygon points="1286.5,826.7 1292.7,824.7 1299.0,826.2 1304.7,827.2 1302.7,831.7 1297.7,834.2 1294.0,837.9 1289.0,838.7 1290.3,833.0 1285.3,831.7"/>
<polygon points="1318.9,845.4 1322.7,842.2 1328.4,843.7 1327.6,847.2 1321.4,848.2"/>
<polygon points="1231.7,834.7 1234.2,837.9 1231.7,842.9 1227.9,844.7 1226.7,841.7 1229.2,837.9"/>
<polygon points="1237.9,834.7 1244.1,833.0 1250.4,834.7 1252.1,837.9 1247.9,840.4 1242.9,842.9 1237.9,841.7 1236.7,837.9"/>
<polygon points="1294.0,862.9 1298.5,861.1 1299.5,866.6 1296.5,871.1 1292.0,870.3 1292.7,866.1"/>
<polygon points="1315.2,881.6 1318.9,877.8 1326.4,876.6 1328.9,871.6 1322.7,869.1 1328.9,865.4 1333.9,861.6 1341.4,861.1 1343.9,865.4 1350.1,862.9 1356.3,859.1 1362.5,857.9 1365.8,859.1 1365.8,906.5 1360.1,904.0 1355.1,899.0 1348.8,896.5 1343.9,897.8 1338.9,894.0 1335.1,897.8 1330.1,896.5 1326.4,891.5 1321.4,889.0 1316.4,886.5"/>
<polygon points="1327.6,921.4 1332.6,915.2 1336.4,910.2 1341.4,906.5 1346.3,904.0 1351.3,907.7 1357.6,906.5 1362.5,904.0 1365.8,901.5 1365.8,946.4 1360.1,945.1 1353.8,943.9 1347.6,942.6 1341.4,941.4 1336.4,938.9 1331.4,940.1 1326.4,936.4 1321.4,931.4 1325.2,927.7"/>
<polygon points="1287.8,882.8 1292.7,880.3 1299.0,882.8 1304.0,886.5 1309.0,887.8 1313.9,885.3 1318.9,889.0 1323.9,894.0 1327.6,899.0 1331.4,904.0 1333.9,909.0 1330.1,912.7 1325.2,910.2 1321.4,915.2 1316.4,917.7 1311.4,915.2 1307.7,919.0 1302.7,920.2 1297.7,917.7 1295.2,912.7 1299.0,909.0 1295.2,905.2 1291.5,901.5 1294.0,896.5 1290.3,892.8 1286.5,887.8"/>
<polygon points="1306.5,928.9 1312.7,927.7 1318.9,930.2 1323.9,931.4 1321.4,935.2 1315.2,934.4 1309.0,933.4 1306.0,931.4"/>
<polygon points="1271.6,882.8 1276.0,881.6 1276.5,887.8 1274.6,895.3 1271.1,894.0 1270.3,887.8"/>
<polygon points="1277.0,904.0 1285.3,903.5 1286.0,906.5 1277.8,907.2"/>
<polygon points="1245.4,884.1 1250.4,881.6 1254.1,884.1 1258.6,888.5 1251.6,889.5 1244.6,889.0"/>
<polygon points="1181.8,885.3 1185.6,879.1 1190.5,875.3 1194.3,870.3 1198.0,871.6 1200.5,876.6 1205.5,880.3 1208.0,885.3 1209.2,889.0 1203.0,888.5 1198.0,891.0 1191.8,890.3 1188.1,886.5 1184.3,887.8"/>
<polygon points="1135.7,882.8 1141.9,881.6 1144.4,876.6 1149.4,877.8 1153.9,881.6 1150.7,885.3 1145.7,887.8 1140.7,886.0 1135.7,885.3"/>
<polygon points="1153.2,901.5 1159.4,898.5 1163.1,902.7 1161.9,906.5 1156.9,907.7 1152.4,905.2"/>
<polygon points="1137.0,905.2 1141.9,907.7 1146.9,904.0 1150.7,909.0 1153.2,914.0 1158.1,916.5 1153.2,919.0 1148.2,917.7 1143.2,921.4 1137.0,925.2 1133.2,923.9 1135.7,917.7 1133.2,914.0 1137.0,910.2"/>
<polygon points="1144.4,925.2 1149.4,922.7 1153.2,927.7 1156.9,931.4 1159.9,933.9 1155.7,936.4 1150.7,937.6 1146.9,941.4 1143.2,943.9 1139.9,940.1 1137.0,938.9 1133.2,940.9 1132.5,937.6 1137.0,935.2 1140.7,930.2"/>
<polygon points="1258.6,925.2 1264.1,923.4 1270.3,925.9 1276.5,927.7 1281.0,931.4 1281.5,935.2 1276.5,935.9 1271.6,932.7 1265.3,931.4 1259.6,930.2"/>
<polygon points="1270.3,951.4 1275.3,948.9 1281.5,950.1 1286.5,946.4 1291.5,948.4 1289.0,952.6 1284.0,953.9 1281.5,958.8 1277.8,962.6 1272.8,960.1 1269.6,956.3"/>
<polygon points="1289.5,971.3 1294.0,968.8 1297.7,971.8 1297.7,976.3 1289.0,976.3"/>
<polygon points="1300.2,952.6 1305.2,951.9 1307.7,956.3 1306.0,960.1 1301.5,957.6"/>
<polygon points="1320.2,957.6 1326.4,955.8 1332.6,958.8 1336.9,960.1 1333.9,963.3 1327.6,962.6 1322.7,965.1 1319.4,962.6"/>
<polygon points="1341.4,965.1 1345.1,960.1 1348.8,957.6 1350.8,962.6 1347.6,967.6 1350.1,972.5 1347.6,976.3 1341.4,976.3 1339.4,971.3"/>
<polygon points="1355.1,967.6 1360.1,964.3 1365.0,966.3 1365.0,975.0 1358.8,975.8 1355.1,972.5"/>
<polygon points="1249.1,923.9 1254.1,923.4 1255.4,928.9 1252.9,931.9 1249.6,930.2"/>
<circle cx="782.0" cy="279.8" r="3.0"/>
<circle cx="784.5" cy="263.6" r="2.0"/>
<circle cx="795.7" cy="279.3" r="2.0"/>
<circle cx="801.9" cy="277.8" r="1.5"/>
<circle cx="774.5" cy="273.6" r="2.0"/>
<circle cx="808.2" cy="310.2" r="2.5"/>
<circle cx="814.4" cy="354.6" r="2.0"/>
<circle cx="821.9" cy="369.1" r="2.0"/>
<circle cx="814.9" cy="367.6" r="1.2"/>
<circle cx="828.1" cy="402.0" r="2.0"/>
<circle cx="821.9" cy="399.0" r="1.5"/>
<circle cx="816.9" cy="407.0" r="1.7"/>
<circle cx="846.8" cy="392.0" r="1.7"/>
<circle cx="845.6" cy="399.0" r="1.5"/>
<circle cx="850.5" cy="378.3" r="2.2"/>
<circle cx="859.3" cy="383.3" r="2.0"/>
<circle cx="841.8" cy="436.9" r="1.7"/>
<circle cx="841.8" cy="456.8" r="1.5"/>
<circle cx="760.8" cy="459.3" r="2.2"/>
<circle cx="755.8" cy="449.3" r="2.2"/>
<circle cx="763.3" cy="440.6" r="3.0"/>
<circle cx="740.9" cy="448.1" r="1.2"/>
<circle cx="779.5" cy="454.3" r="1.2"/>
<circle cx="799.4" cy="384.5" r="1.5"/>
<circle cx="841.8" cy="238.7" r="1.2"/>
<circle cx="853.0" cy="236.2" r="1.0"/>
<circle cx="785.7" cy="248.7" r="1.2"/>
<circle cx="825.6" cy="251.9" r="1.5"/>
<circle cx="830.6" cy="266.1" r="1.2"/>
<circle cx="799.4" cy="299.8" r="1.0"/>
<circle cx="826.9" cy="306.0" r="1.0"/>
<circle cx="834.3" cy="313.5" r="1.2"/>
<circle cx="838.1" cy="316.0" r="1.2"/>
<circle cx="841.8" cy="307.2" r="1.2"/>
<circle cx="831.9" cy="287.3" r="1.2"/>
<circle cx="845.6" cy="326.7" r="1.0"/>
<circle cx="835.6" cy="340.9" r="1.0"/>
<circle cx="863.0" cy="335.9" r="2.0"/>
<circle cx="863.0" cy="402.0" r="2.0"/>
<circle cx="863.0" cy="431.9" r="1.5"/>
<circle cx="762.1" cy="236.2" r="1.5"/>
<circle cx="804.4" cy="225.0" r="1.2"/>
<circle cx="878.5" cy="245.4" r="1.2"/>
<circle cx="871.0" cy="265.4" r="1.2"/>
<circle cx="869.7" cy="273.1" r="2.0"/>
<circle cx="889.7" cy="292.3" r="2.0"/>
<circle cx="895.4" cy="296.8" r="2.0"/>
<circle cx="869.0" cy="298.0" r="1.5"/>
<circle cx="918.8" cy="312.5" r="1.2"/>
<circle cx="932.6" cy="329.2" r="2.2"/>
<circle cx="907.1" cy="335.2" r="2.0"/>
<circle cx="914.1" cy="343.1" r="3.0"/>
<circle cx="960.2" cy="238.2" r="1.2"/>
<circle cx="917.1" cy="430.6" r="2.5"/>
<circle cx="918.8" cy="434.9" r="1.5"/>
<circle cx="1106.5" cy="322.7" r="1.2"/>
<circle cx="1109.8" cy="354.1" r="2.2"/>
<circle cx="1325.9" cy="387.5" r="1.2"/>
<circle cx="1335.1" cy="388.8" r="1.2"/>
<circle cx="1364.3" cy="416.4" r="1.2"/>
<circle cx="747.1" cy="488.5" r="1.5"/>
<circle cx="723.4" cy="547.0" r="1.5"/>
<circle cx="709.7" cy="544.5" r="1.2"/>
<circle cx="735.4" cy="604.1" r="1.7"/>
<circle cx="795.7" cy="645.0" r="1.5"/>
<circle cx="707.2" cy="648.0" r="1.2"/>
<circle cx="721.4" cy="683.4" r="1.7"/>
<circle cx="727.9" cy="690.4" r="2.0"/>
<circle cx="740.4" cy="691.9" r="1.5"/>
<circle cx="711.7" cy="694.6" r="1.0"/>
<circle cx="731.4" cy="697.4" r="2.2"/>
<circle cx="723.4" cy="702.3" r="4.0"/>
<circle cx="729.6" cy="730.8" r="1.5"/>
<circle cx="759.6" cy="701.6" r="1.5"/>
<circle cx="1033.5" cy="604.4" r="2.0"/>
<circle cx="1039.7" cy="606.1" r="1.2"/>
<circle cx="1004.8" cy="634.3" r="1.2"/>
<circle cx="1020.0" cy="715.8" r="1.5"/>
<circle cx="1075.9" cy="657.2" r="1.5"/>
<circle cx="1076.6" cy="663.0" r="1.5"/>
<circle cx="1072.9" cy="666.7" r="1.2"/>
<circle cx="1079.1" cy="675.4" r="2.0"/>
<circle cx="1074.1" cy="678.4" r="1.5"/>
<circle cx="1051.7" cy="722.8" r="1.5"/>
<circle cx="1044.2" cy="725.3" r="2.0"/>
<circle cx="1041.7" cy="730.3" r="1.5"/>
<circle cx="1057.9" cy="730.3" r="1.2"/>
<circle cx="1082.9" cy="724.0" r="1.2"/>
<circle cx="1151.9" cy="724.0" r="1.5"/>
<circle cx="1162.6" cy="692.4" r="2.0"/>
<circle cx="1167.4" cy="697.9" r="1.7"/>
<circle cx="1181.8" cy="623.1" r="2.2"/>
<circle cx="1189.3" cy="612.6" r="2.2"/>
<circle cx="1189.3" cy="615.1" r="1.7"/>
<circle cx="1208.2" cy="612.1" r="3.2"/>
<circle cx="1191.8" cy="635.5" r="2.0"/>
<circle cx="1205.5" cy="635.5" r="2.0"/>
<circle cx="1206.0" cy="639.3" r="1.7"/>
<circle cx="1203.5" cy="628.1" r="1.2"/>
<circle cx="1282.8" cy="490.2" r="2.5"/>
<circle cx="1277.0" cy="478.5" r="1.0"/>
<circle cx="1306.5" cy="483.5" r="1.2"/>
<circle cx="1278.5" cy="535.8" r="1.2"/>
<circle cx="1342.6" cy="518.9" r="1.5"/>
<circle cx="1343.4" cy="525.4" r="1.2"/>
<circle cx="1333.9" cy="575.7" r="1.5"/>
<circle cx="1363.8" cy="585.7" r="2.0"/>
<circle cx="1365.0" cy="598.1" r="1.2"/>
<circle cx="1362.5" cy="631.0" r="1.7"/>
<circle cx="1362.5" cy="616.1" r="1.0"/>
<circle cx="1356.3" cy="714.1" r="2.0"/>
<circle cx="1351.3" cy="717.8" r="1.7"/>
<circle cx="1356.3" cy="725.3" r="2.2"/>
<circle cx="1345.1" cy="727.8" r="1.2"/>
<circle cx="1296.5" cy="725.3" r="2.5"/>
<circle cx="1316.4" cy="730.3" r="3.0"/>
<circle cx="1333.9" cy="730.3" r="1.5"/>
<circle cx="1181.8" cy="724.8" r="1.5"/>
<circle cx="1194.8" cy="726.5" r="2.0"/>
<circle cx="1214.2" cy="725.3" r="1.7"/>
<circle cx="777.5" cy="799.3" r="2.5"/>
<circle cx="755.3" cy="827.5" r="3.5"/>
<circle cx="717.7" cy="823.5" r="1.2"/>
<circle cx="726.4" cy="859.6" r="1.2"/>
<circle cx="729.6" cy="864.9" r="2.0"/>
<circle cx="790.2" cy="862.9" r="1.7"/>
<circle cx="737.9" cy="921.4" r="2.0"/>
<circle cx="764.5" cy="924.7" r="2.5"/>
<circle cx="762.1" cy="931.4" r="1.5"/>
<circle cx="792.0" cy="920.7" r="2.0"/>
<circle cx="717.2" cy="942.1" r="2.7"/>
<circle cx="729.2" cy="943.9" r="2.7"/>
<circle cx="726.4" cy="952.1" r="1.2"/>
<circle cx="755.3" cy="966.3" r="1.7"/>
<circle cx="857.5" cy="819.2" r="1.2"/>
<circle cx="836.3" cy="855.4" r="1.2"/>
<circle cx="826.9" cy="859.1" r="1.2"/>
<circle cx="727.7" cy="778.9" r="1.2"/>
<circle cx="709.7" cy="899.0" r="3.0"/>
<circle cx="683.5" cy="975.0" r="1.2"/>
<circle cx="734.6" cy="732.0" r="1.5"/>
<circle cx="891.7" cy="834.7" r="1.5"/>
<circle cx="880.5" cy="846.2" r="1.2"/>
<circle cx="878.5" cy="855.4" r="1.0"/>
<circle cx="875.5" cy="867.4" r="2.5"/>
<circle cx="940.8" cy="852.9" r="1.2"/>
<circle cx="980.7" cy="871.1" r="1.5"/>
<circle cx="979.4" cy="902.7" r="1.5"/>
<circle cx="984.4" cy="902.0" r="2.0"/>
<circle cx="965.0" cy="913.2" r="1.5"/>
<circle cx="1040.5" cy="733.2" r="1.5"/>
<circle cx="1076.6" cy="732.0" r="1.2"/>
<circle cx="1020.5" cy="732.0" r="1.0"/>
<circle cx="1073.4" cy="859.6" r="1.5"/>
<circle cx="1108.3" cy="908.5" r="1.0"/>
<circle cx="1117.3" cy="925.9" r="1.0"/>
<circle cx="1055.4" cy="940.9" r="1.5"/>
<circle cx="1113.3" cy="946.4" r="1.2"/>
<circle cx="1112.8" cy="953.1" r="1.2"/>
<circle cx="1114.5" cy="960.1" r="1.7"/>
<circle cx="932.1" cy="854.6" r="2.0"/>
<circle cx="892.9" cy="901.5" r="1.0"/>
<circle cx="1138.7" cy="764.4" r="2.0"/>
<circle cx="1194.8" cy="763.2" r="2.0"/>
<circle cx="1200.5" cy="763.9" r="2.5"/>
<circle cx="1202.3" cy="778.1" r="1.2"/>
<circle cx="1234.7" cy="783.8" r="2.0"/>
<circle cx="1247.4" cy="786.8" r="1.7"/>
<circle cx="1261.6" cy="791.8" r="1.5"/>
<circle cx="1269.6" cy="749.4" r="2.5"/>
<circle cx="1275.3" cy="755.2" r="1.5"/>
<circle cx="1286.8" cy="779.4" r="5.0"/>
<circle cx="1305.2" cy="753.9" r="2.5"/>
<circle cx="1310.7" cy="749.9" r="1.5"/>
<circle cx="1297.7" cy="751.9" r="1.0"/>
<circle cx="1310.9" cy="764.9" r="3.0"/>
<circle cx="1315.9" cy="769.9" r="1.7"/>
<circle cx="1320.7" cy="771.9" r="1.2"/>
<circle cx="1355.1" cy="753.2" r="1.2"/>
<circle cx="1362.5" cy="765.7" r="2.0"/>
<circle cx="1364.3" cy="770.6" r="1.2"/>
<circle cx="1353.3" cy="774.9" r="1.5"/>
<circle cx="1345.1" cy="776.4" r="1.2"/>
<circle cx="1302.7" cy="806.3" r="1.7"/>
<circle cx="1309.0" cy="803.0" r="2.2"/>
<circle cx="1305.2" cy="813.0" r="2.2"/>
<circle cx="1297.7" cy="817.3" r="1.2"/>
<circle cx="1336.9" cy="813.0" r="4.0"/>
<circle cx="1330.9" cy="821.7" r="4.0"/>
<circle cx="1326.4" cy="813.0" r="2.0"/>
<circle cx="1317.7" cy="819.7" r="2.0"/>
<circle cx="1311.4" cy="825.5" r="2.0"/>
<circle cx="1315.2" cy="830.5" r="2.0"/>
<circle cx="1311.4" cy="834.9" r="1.5"/>
<circle cx="1333.4" cy="831.7" r="2.0"/>
<circle cx="1345.1" cy="822.2" r="1.5"/>
<circle cx="1357.6" cy="818.0" r="2.0"/>
<circle cx="1364.3" cy="820.5" r="2.0"/>
<circle cx="1358.8" cy="833.0" r="2.5"/>
<circle cx="1365.0" cy="830.5" r="1.5"/>
<circle cx="1362.5" cy="839.2" r="1.5"/>
<circle cx="1360.1" cy="849.2" r="2.0"/>
<circle cx="1362.5" cy="844.2" r="1.2"/>
<circle cx="1338.9" cy="846.2" r="2.0"/>
<circle cx="1272.3" cy="843.7" r="1.5"/>
<circle cx="1280.3" cy="842.4" r="1.5"/>
<circle cx="1284.5" cy="836.2" r="2.0"/>
<circle cx="1296.5" cy="854.9" r="1.5"/>
<circle cx="1301.5" cy="854.9" r="1.7"/>
<circle cx="1311.4" cy="851.6" r="1.5"/>
<circle cx="1315.2" cy="855.9" r="2.0"/>
<circle cx="1322.7" cy="854.6" r="1.2"/>
<circle cx="1330.9" cy="854.1" r="1.7"/>
<circle cx="1347.6" cy="854.6" r="1.2"/>
<circle cx="1309.5" cy="862.1" r="1.7"/>
<circle cx="1305.2" cy="870.3" r="2.0"/>
<circle cx="1280.0" cy="865.4" r="5.0"/>
<circle cx="1286.5" cy="874.1" r="2.0"/>
<circle cx="1291.5" cy="873.6" r="1.7"/>
<circle cx="1279.0" cy="875.3" r="1.5"/>
<circle cx="1279.5" cy="881.1" r="1.5"/>
<circle cx="1266.1" cy="882.8" r="1.5"/>
<circle cx="1285.3" cy="895.3" r="2.0"/>
<circle cx="1292.7" cy="904.0" r="1.5"/>
<circle cx="1232.9" cy="885.3" r="5.0"/>
<circle cx="1242.4" cy="889.8" r="1.0"/>
<circle cx="1239.2" cy="905.2" r="1.2"/>
<circle cx="1257.9" cy="912.0" r="1.5"/>
<circle cx="1267.8" cy="917.7" r="1.2"/>
<circle cx="1146.4" cy="869.1" r="2.5"/>
<circle cx="1135.7" cy="868.6" r="1.5"/>
<circle cx="1132.0" cy="874.1" r="1.7"/>
<circle cx="1155.7" cy="876.1" r="1.5"/>
<circle cx="1166.9" cy="879.1" r="1.2"/>
<circle cx="1168.1" cy="882.8" r="1.0"/>
<circle cx="1143.9" cy="892.8" r="3.5"/>
<circle cx="1137.5" cy="899.5" r="4.0"/>
<circle cx="1162.6" cy="912.0" r="1.5"/>
<circle cx="1177.3" cy="936.4" r="1.5"/>
<circle cx="1175.6" cy="943.4" r="2.5"/>
<circle cx="1182.6" cy="960.8" r="1.2"/>
<circle cx="1233.7" cy="928.9" r="3.0"/>
<circle cx="1232.4" cy="936.4" r="1.5"/>
<circle cx="1225.4" cy="953.4" r="2.2"/>
<circle cx="1235.4" cy="952.6" r="3.5"/>
<circle cx="1231.7" cy="966.3" r="1.7"/>
<circle cx="1219.7" cy="962.6" r="1.2"/>
<circle cx="1253.4" cy="952.6" r="2.0"/>
<circle cx="1259.6" cy="966.3" r="1.5"/>
<circle cx="1267.3" cy="965.8" r="1.2"/>
<circle cx="1245.4" cy="973.8" r="1.2"/>
<circle cx="1267.3" cy="938.9" r="2.0"/>
<circle cx="1284.5" cy="965.1" r="2.2"/>
<circle cx="1289.5" cy="933.9" r="1.5"/>
<circle cx="1294.7" cy="929.7" r="1.5"/>
<circle cx="1352.6" cy="960.1" r="2.0"/>
<circle cx="1328.9" cy="971.3" r="2.0"/>
<circle cx="1341.4" cy="951.4" r="1.2"/>
<circle cx="1326.4" cy="942.6" r="1.0"/>
</g>
<g fill="#433468">
<polygon points="1179.8,726.5 1183.1,722.8 1188.1,721.5 1194.3,719.0 1201.8,717.8 1208.0,719.0 1211.7,721.5 1218.0,725.3 1218.0,730.3 1206.8,732.7 1196.8,737.7 1190.5,740.2 1186.8,735.2 1183.1,732.0"/>
<polygon points="1297.2,521.6 1302.0,520.9 1304.0,525.4 1301.0,528.3 1297.2,526.6"/>
<polygon points="853.0,901.5 858.0,904.0 853.0,907.7 849.3,914.0 845.6,917.7 848.1,910.2 850.5,905.2"/>
<polygon points="814.4,926.4 824.4,927.7 830.6,931.4 826.9,937.6 823.1,933.9 818.1,931.4"/>
<polygon points="886.4,942.6 890.9,941.4 892.2,945.9 888.9,948.9 885.9,946.9"/>
<polygon points="1352.6,871.6 1360.1,870.3 1365.0,872.8 1365.0,876.1 1357.6,875.3 1352.6,874.1"/>
<polygon points="1358.8,880.3 1365.0,879.6 1365.0,883.6 1360.1,883.1"/>
<polygon points="1350.1,901.0 1357.6,899.5 1359.3,904.0 1355.1,907.0 1350.8,905.2"/>
<polygon points="1331.4,881.6 1336.4,880.3 1340.1,884.1 1336.4,887.8 1332.6,886.0"/>
<polygon points="1322.9,886.8 1332.3,886.2 1332.9,888.7 1329.8,889.9 1331.0,893.6 1336.0,894.9 1339.2,899.3 1337.3,899.9 1332.9,898.0 1329.8,896.1 1326.7,892.4 1324.8,889.3"/>
<polygon points="1308.6,899.3 1312.3,898.0 1316.1,901.1 1319.8,903.6 1324.8,904.9 1329.8,907.4 1327.3,909.2 1322.3,908.6 1317.3,906.7 1312.3,904.9 1308.6,902.4"/>
<polygon points="1299.9,891.1 1303.6,892.4 1304.9,896.1 1302.4,898.0 1299.9,895.5"/>
</g>
</svg>
<span class="t" style="left:1507px;top:206px;font-size:15px;color:#000;letter-spacing:-0.249px;">Caja de herramientas de Procesos</span>
<svg class="ic" style="left:1891px;top:209px" width="26" height="12" viewBox="0 0 26 12"><rect x="0.5" y="0.5" width="10" height="10.500" rx="1.8" fill="#f6f6f6" stroke="#5a5a5a" stroke-width="0.9"/><rect x="4.8" y="2.600" width="3.8" height="3.8" rx="0.8" fill="none" stroke="#5a5a5a" stroke-width="0.9"/><rect x="2.600" y="4.800" width="3.8" height="3.8" rx="0.8" fill="#f6f6f6" stroke="#5a5a5a" stroke-width="0.9"/><rect x="14.500" y="0.5" width="10" height="10.500" rx="1.8" fill="#f6f6f6" stroke="#5a5a5a" stroke-width="0.9"/><path d="M17 3 L22 8.500 M22 3 L17 8.500" stroke="#444" stroke-width="1.9"/></svg>
<svg class="ic" style="left:1511px;top:230.5px" width="16" height="16" viewBox="0 0 16 16"><line x1="8.04" y1="6.05" x2="9.66" y2="6.72" stroke="#d42a2a" stroke-width="1.45" stroke-linecap="round"/><line x1="6.55" y1="7.54" x2="7.22" y2="9.16" stroke="#d42a2a" stroke-width="1.45" stroke-linecap="round"/><line x1="4.45" y1="7.54" x2="3.78" y2="9.16" stroke="#d42a2a" stroke-width="1.45" stroke-linecap="round"/><line x1="2.96" y1="6.05" x2="1.34" y2="6.72" stroke="#d42a2a" stroke-width="1.45" stroke-linecap="round"/><line x1="2.96" y1="3.95" x2="1.34" y2="3.28" stroke="#d42a2a" stroke-width="1.45" stroke-linecap="round"/><line x1="4.45" y1="2.46" x2="3.78" y2="0.84" stroke="#d42a2a" stroke-width="1.45" stroke-linecap="round"/><line x1="6.55" y1="2.46" x2="7.22" y2="0.84" stroke="#d42a2a" stroke-width="1.45" stroke-linecap="round"/><line x1="8.04" y1="3.95" x2="9.66" y2="3.28" stroke="#d42a2a" stroke-width="1.45" stroke-linecap="round"/><circle cx="5.5" cy="5" r="3.50" fill="#d42a2a"/><circle cx="5.5" cy="5" r="1.25" fill="#f0f0f0"/><line x1="12.33" y1="9.76" x2="13.49" y2="10.24" stroke="#8a8a8a" stroke-width="1.04" stroke-linecap="round"/><line x1="11.26" y1="10.83" x2="11.74" y2="11.99" stroke="#8a8a8a" stroke-width="1.04" stroke-linecap="round"/><line x1="9.74" y1="10.83" x2="9.26" y2="11.99" stroke="#8a8a8a" stroke-width="1.04" stroke-linecap="round"/><line x1="8.67" y1="9.76" x2="7.51" y2="10.24" stroke="#8a8a8a" stroke-width="1.04" stroke-linecap="round"/><line x1="8.67" y1="8.24" x2="7.51" y2="7.76" stroke="#8a8a8a" stroke-width="1.04" stroke-linecap="round"/><line x1="9.74" y1="7.17" x2="9.26" y2="6.01" stroke="#8a8a8a" stroke-width="1.04" stroke-linecap="round"/><line x1="11.26" y1="7.17" x2="11.74" y2="6.01" stroke="#8a8a8a" stroke-width="1.04" stroke-linecap="round"/><line x1="12.33" y1="8.24" x2="13.49" y2="7.76" stroke="#8a8a8a" stroke-width="1.04" stroke-linecap="round"/><circle cx="10.5" cy="9" r="2.52" fill="#8a8a8a"/><circle cx="10.5" cy="9" r="0.90" fill="#f0f0f0"/><line x1="7.42" y1="13.09" x2="8.33" y2="13.46" stroke="#7aa6e0" stroke-width="0.81" stroke-linecap="round"/><line x1="6.59" y1="13.92" x2="6.96" y2="14.83" stroke="#7aa6e0" stroke-width="0.81" stroke-linecap="round"/><line x1="5.41" y1="13.92" x2="5.04" y2="14.83" stroke="#7aa6e0" stroke-width="0.81" stroke-linecap="round"/><line x1="4.58" y1="13.09" x2="3.67" y2="13.46" stroke="#7aa6e0" stroke-width="0.81" stroke-linecap="round"/><line x1="4.58" y1="11.91" x2="3.67" y2="11.54" stroke="#7aa6e0" stroke-width="0.81" stroke-linecap="round"/><line x1="5.41" y1="11.08" x2="5.04" y2="10.17" stroke="#7aa6e0" stroke-width="0.81" stroke-linecap="round"/><line x1="6.59" y1="11.08" x2="6.96" y2="10.17" stroke="#7aa6e0" stroke-width="0.81" stroke-linecap="round"/><line x1="7.42" y1="11.91" x2="8.33" y2="11.54" stroke="#7aa6e0" stroke-width="0.81" stroke-linecap="round"/><circle cx="6" cy="12.5" r="1.96" fill="#7aa6e0"/><circle cx="6" cy="12.5" r="0.70" fill="#f0f0f0"/><path d="M9 12.5 h6 l-3 3.3z" fill="#444"/></svg>
<svg class="ic" style="left:1537px;top:230.5px" width="16" height="16" viewBox="0 0 16 16"><g transform="scale(0.6)"><path d="M11.5 1.5 C7 1.5 7.5 3.5 7.5 5.5 H12 V6.5 H5 C2 6.5 1.5 9 1.5 11.5 C1.5 14.5 2.5 16 5 16 H7 V13.5 C7 11.5 8.5 10 10.5 10 H14.5 C16 10 17 9 17 7.5 V4.5 C17 2.5 15 1.5 11.5 1.5Z" fill="#3872a4"/><circle cx="9.3" cy="3.8" r="0.9" fill="#fff"/><path d="M12 22 C16.5 22 16 20 16 18 H11.5 V17 H18.5 C21.5 17 22 14.5 22 12 C22 9 21 7.5 18.5 7.5 H17 V10 C17 12 15.5 13.5 13.5 13.5 H9.5 C8 13.5 7 14.5 7 16 V19 C7 21 9 22 12 22Z" fill="#f6cf3c"/><circle cx="14.2" cy="19.7" r="0.9" fill="#fff"/></g><path d="M9 12.3 h6 l-3 3.3z" fill="#444"/></svg>
<svg class="ic" style="left:1561px;top:230.5px" width="16" height="16" viewBox="0 0 16 16"><circle cx="8" cy="8" r="6.8" fill="#fafafa" stroke="#888" stroke-width="1"/><path d="M8 3.5 V8 L11 10" fill="none" stroke="#888" stroke-width="1"/></svg>
<svg class="ic" style="left:1586px;top:230.5px" width="16" height="16" viewBox="0 0 16 16"><path d="M3.5 1.5 H10 L13 4.5 V14.5 H3.5Z" fill="#f0f0f0" stroke="#aaa" stroke-width="1"/><path d="M5.5 7 H11 M5.5 9.5 H11 M5.5 12 H11" stroke="#bbb" stroke-width="1"/></svg>
<svg class="ic" style="left:1618px;top:230.5px" width="16" height="16" viewBox="0 0 16 16"><path d="M3 3 L11 2 L13 9 L9 14 L4 12Z" fill="#dcdcdc"/><path d="M6 5 L13 4 L14 10 L10 15" fill="#e6e6e6"/></svg>
<svg class="ic" style="left:1652px;top:230.5px" width="16" height="16" viewBox="0 0 16 16"><path d="M6 6 L14 14" stroke="#d8b040" stroke-width="2.6" stroke-linecap="round"/><path d="M6.5 6.5 L13.5 13.5" stroke="#f0d880" stroke-width="1"/><path d="M2 3.5 A3.2 3.2 0 1 0 5.5 1.2 L5.5 4 L3.5 5Z" fill="#9a9a9a" stroke="#666" stroke-width="0.6"/></svg>
<div class="b" style="left:1610px;top:232px;width:1px;height:15px;background:#d8d8d8;"></div>
<div class="b" style="left:1643px;top:232px;width:1px;height:15px;background:#d8d8d8;"></div>
<div class="b" style="left:1503px;top:256px;width:1414px;height:23px;background:#fff;border:1px solid #bdbdbd;box-sizing:border-box;border-radius:3px;"></div>
<svg class="ic" style="left:1511px;top:261px" width="14" height="14" viewBox="0 0 14 14"><circle cx="5.500" cy="5.500" r="4" fill="none" stroke="#8a8a8a" stroke-width="1.2"/><line x1="8.500" y1="8.500" x2="12.500" y2="12.500" stroke="#8a8a8a" stroke-width="1.4"/></svg>
<span class="t" style="left:1531px;top:257.5px;font-size:13.5px;color:#000;letter-spacing:0.059px;">v to</span>
<svg class="ic" style="left:1896px;top:262px" width="14" height="10" viewBox="0 0 14 10"><path d="M0.5 5 L4 0.5 H13.500 V9.500 H4Z" fill="#b0b0b0"/><path d="M6.500 3 L10.500 7 M10.500 3 L6.500 7" stroke="#fff" stroke-width="1.2"/></svg>
<div class="b" style="left:1503px;top:279px;width:415px;height:717px;background:#fff;border:1px solid #c8c8c8;box-sizing:border-box;"></div>
<div class="b" style="left:1504px;top:280px;width:396px;height:715px;overflow:hidden">
<svg class="ic" style="left:8px;top:9px" width="9" height="5" viewBox="0 0 9 5"><path d="M0 0 H9 L4.500 5Z" fill="#555"/></svg>
<svg class="ic" style="left:29px;top:2px" width="18" height="18" viewBox="0 0 16 16"><circle cx="8" cy="8" r="6.8" fill="#fafafa" stroke="#888" stroke-width="1"/><path d="M8 3.5 V8 L11 10" fill="none" stroke="#888" stroke-width="1"/></svg>
<span class="t" style="left:54px;top:1.5px;font-size:14.5px;color:#000;letter-spacing:0.141px;">Usado recientemente</span>
<div class="b" style="left:0px;top:22px;width:396px;height:22px;background:#f0f0f0;"></div>
<svg class="ic" style="left:54px;top:24px" width="18" height="18" viewBox="0 0 16 16"><path d="M8 1 L14.5 8 L8 13.5 L1.5 8Z" fill="#f4f8f2" stroke="#7a7a7a" stroke-width="0.8"/><path d="M8 12 C7 9 5.5 7 4 6 M8 12 C8 8 8 6 8 3.5 M8 12 C9 9 10.5 7 12 6 M8 12 C7.5 10 6 9 5 9 M8 12 C8.5 10 10 9 11 9" stroke="#2f9a3a" stroke-width="1.1" fill="none"/><path d="M3 15 H13" stroke="#666" stroke-width="0.9"/></svg>
<span class="t" style="left:79px;top:23.5px;font-size:14.5px;color:#000;letter-spacing:0.056px;">v.to.rast</span>
<svg class="ic" style="left:54px;top:46px" width="18" height="18" viewBox="0 0 16 16"><line x1="11.96" y1="9.64" x2="14.49" y2="10.69" stroke="#86a7dc" stroke-width="2.26" stroke-linecap="round"/><line x1="9.64" y1="11.96" x2="10.69" y2="14.49" stroke="#86a7dc" stroke-width="2.26" stroke-linecap="round"/><line x1="6.36" y1="11.96" x2="5.31" y2="14.49" stroke="#86a7dc" stroke-width="2.26" stroke-linecap="round"/><line x1="4.04" y1="9.64" x2="1.51" y2="10.69" stroke="#86a7dc" stroke-width="2.26" stroke-linecap="round"/><line x1="4.04" y1="6.36" x2="1.51" y2="5.31" stroke="#86a7dc" stroke-width="2.26" stroke-linecap="round"/><line x1="6.36" y1="4.04" x2="5.31" y2="1.51" stroke="#86a7dc" stroke-width="2.26" stroke-linecap="round"/><line x1="9.64" y1="4.04" x2="10.69" y2="1.51" stroke="#86a7dc" stroke-width="2.26" stroke-linecap="round"/><line x1="11.96" y1="6.36" x2="14.49" y2="5.31" stroke="#86a7dc" stroke-width="2.26" stroke-linecap="round"/><circle cx="8" cy="8" r="5.46" fill="#86a7dc"/><circle cx="8" cy="8" r="1.95" fill="#ffffff"/></svg>
<span class="t" style="left:79px;top:45.5px;font-size:14.5px;color:#000;letter-spacing:0.121px;">Crear capa a partir de la extensión</span>
<svg class="ic" style="left:8px;top:75px" width="9" height="5" viewBox="0 0 9 5"><path d="M0 0 H9 L4.500 5Z" fill="#555"/></svg>
<svg class="ic" style="left:29px;top:68px" width="18" height="18" viewBox="0 0 16 16"><circle cx="8" cy="8" r="5.6" fill="none" stroke="#7ba23f" stroke-width="3.4"/><path d="M8.5 8.5 L15 15" stroke="#7ba23f" stroke-width="3.2"/><path d="M8 7.5 L12.5 12" stroke="#f0b41c" stroke-width="1.6"/><circle cx="7.8" cy="7.3" r="1.5" fill="#e8682c"/></svg>
<span class="t" style="left:54px;top:67.5px;font-size:14.5px;color:#000;letter-spacing:0.034px;">Análisis de redes</span>
<svg class="ic" style="left:54px;top:90px" width="18" height="18" viewBox="0 0 16 16"><path d="M1 4 L13 3 M1 8 L9 7.6" stroke="#d8d8d8" stroke-width="0.8"/><rect x="2" y="9" width="13" height="6.5" fill="#e9e9e9" stroke="#cfcfcf" stroke-width="0.6"/><path d="M4 15 L7.5 10.5 L11 15Z" fill="#d84a4a"/><circle cx="7.5" cy="12.5" r="1" fill="#f4f4f4"/></svg>
<span class="t" style="left:79px;top:89.5px;font-size:14.5px;color:#000;letter-spacing:0.151px;">Área de servicio (desde punto)</span>
<svg class="ic" style="left:54px;top:112px" width="18" height="18" viewBox="0 0 16 16"><path d="M1 4 L13 3 M1 8 L9 7.6" stroke="#d8d8d8" stroke-width="0.8"/><rect x="2" y="9" width="13" height="6.5" fill="#e9e9e9" stroke="#cfcfcf" stroke-width="0.6"/><path d="M4 15 L7.5 10.5 L11 15Z" fill="#d84a4a"/><circle cx="7.5" cy="12.5" r="1" fill="#f4f4f4"/></svg>
<span class="t" style="left:79px;top:111.5px;font-size:14.5px;color:#000;letter-spacing:0.132px;">Ruta más corta (capa a punto)</span>
<svg class="ic" style="left:54px;top:134px" width="18" height="18" viewBox="0 0 16 16"><path d="M1 4 L13 3 M1 8 L9 7.6" stroke="#d8d8d8" stroke-width="0.8"/><rect x="2" y="9" width="13" height="6.5" fill="#e9e9e9" stroke="#cfcfcf" stroke-width="0.6"/><path d="M4 15 L7.5 10.5 L11 15Z" fill="#d84a4a"/><circle cx="7.5" cy="12.5" r="1" fill="#f4f4f4"/></svg>
<span class="t" style="left:79px;top:133.5px;font-size:14.5px;color:#000;letter-spacing:0.132px;">Ruta más corta (punto a capa)</span>
<svg class="ic" style="left:54px;top:156px" width="18" height="18" viewBox="0 0 16 16"><path d="M1 4 L13 3 M1 8 L9 7.6" stroke="#d8d8d8" stroke-width="0.8"/><rect x="2" y="9" width="13" height="6.5" fill="#e9e9e9" stroke="#cfcfcf" stroke-width="0.6"/><path d="M4 15 L7.5 10.5 L11 15Z" fill="#d84a4a"/><circle cx="7.5" cy="12.5" r="1" fill="#f4f4f4"/></svg>
<span class="t" style="left:79px;top:155.5px;font-size:14.5px;color:#000;letter-spacing:0.200px;">Ruta más corta (punto a punto)</span>
<svg class="ic" style="left:8px;top:185px" width="9" height="5" viewBox="0 0 9 5"><path d="M0 0 H9 L4.500 5Z" fill="#555"/></svg>
<svg class="ic" style="left:29px;top:178px" width="18" height="18" viewBox="0 0 16 16"><circle cx="8" cy="8" r="5.6" fill="none" stroke="#7ba23f" stroke-width="3.4"/><path d="M8.5 8.5 L15 15" stroke="#7ba23f" stroke-width="3.2"/><path d="M8 7.5 L12.5 12" stroke="#f0b41c" stroke-width="1.6"/><circle cx="7.8" cy="7.3" r="1.5" fill="#e8682c"/></svg>
<span class="t" style="left:54px;top:177.5px;font-size:14.5px;color:#000;letter-spacing:0.131px;">Análisis de vector</span>
<svg class="ic" style="left:54px;top:200px" width="18" height="18" viewBox="0 0 16 16"><line x1="11.96" y1="9.64" x2="14.49" y2="10.69" stroke="#86a7dc" stroke-width="2.26" stroke-linecap="round"/><line x1="9.64" y1="11.96" x2="10.69" y2="14.49" stroke="#86a7dc" stroke-width="2.26" stroke-linecap="round"/><line x1="6.36" y1="11.96" x2="5.31" y2="14.49" stroke="#86a7dc" stroke-width="2.26" stroke-linecap="round"/><line x1="4.04" y1="9.64" x2="1.51" y2="10.69" stroke="#86a7dc" stroke-width="2.26" stroke-linecap="round"/><line x1="4.04" y1="6.36" x2="1.51" y2="5.31" stroke="#86a7dc" stroke-width="2.26" stroke-linecap="round"/><line x1="6.36" y1="4.04" x2="5.31" y2="1.51" stroke="#86a7dc" stroke-width="2.26" stroke-linecap="round"/><line x1="9.64" y1="4.04" x2="10.69" y2="1.51" stroke="#86a7dc" stroke-width="2.26" stroke-linecap="round"/><line x1="11.96" y1="6.36" x2="14.49" y2="5.31" stroke="#86a7dc" stroke-width="2.26" stroke-linecap="round"/><circle cx="8" cy="8" r="5.46" fill="#86a7dc"/><circle cx="8" cy="8" r="1.95" fill="#ffffff"/></svg>
<span class="t" style="left:79px;top:199.5px;font-size:14.5px;color:#000;letter-spacing:0.118px;">Agrupamiento DBSCAN</span>
<svg class="ic" style="left:54px;top:222px" width="18" height="18" viewBox="0 0 16 16"><line x1="11.96" y1="9.64" x2="14.49" y2="10.69" stroke="#86a7dc" stroke-width="2.26" stroke-linecap="round"/><line x1="9.64" y1="11.96" x2="10.69" y2="14.49" stroke="#86a7dc" stroke-width="2.26" stroke-linecap="round"/><line x1="6.36" y1="11.96" x2="5.31" y2="14.49" stroke="#86a7dc" stroke-width="2.26" stroke-linecap="round"/><line x1="4.04" y1="9.64" x2="1.51" y2="10.69" stroke="#86a7dc" stroke-width="2.26" stroke-linecap="round"/><line x1="4.04" y1="6.36" x2="1.51" y2="5.31" stroke="#86a7dc" stroke-width="2.26" stroke-linecap="round"/><line x1="6.36" y1="4.04" x2="5.31" y2="1.51" stroke="#86a7dc" stroke-width="2.26" stroke-linecap="round"/><line x1="9.64" y1="4.04" x2="10.69" y2="1.51" stroke="#86a7dc" stroke-width="2.26" stroke-linecap="round"/><line x1="11.96" y1="6.36" x2="14.49" y2="5.31" stroke="#86a7dc" stroke-width="2.26" stroke-linecap="round"/><circle cx="8" cy="8" r="5.46" fill="#86a7dc"/><circle cx="8" cy="8" r="1.95" fill="#ffffff"/></svg>
<span class="t" style="left:79px;top:221.5px;font-size:14.5px;color:#000;letter-spacing:0.354px;">Agrupamiento K-medias</span>
<svg class="ic" style="left:54px;top:244px" width="18" height="18" viewBox="0 0 16 16"><path d="M3 13.5 L10 6" stroke="#7d9fd3" stroke-width="2.2" stroke-linecap="round"/><circle cx="11.5" cy="4" r="2" fill="none" stroke="#8a8a8a" stroke-width="1.1"/><circle cx="3" cy="13.5" r="1" fill="#fff"/></svg>
<span class="t" style="left:79px;top:243.5px;font-size:14.5px;color:#000;letter-spacing:0.106px;">Análisis de vecinos más próximos</span>
<svg class="ic" style="left:54px;top:266px" width="18" height="18" viewBox="0 0 16 16"><path d="M1 5 C1 2 5 2 8 3.5 C11 2 15 2 15 5 C15 8 11 8.5 8 7.5 C5 8.5 1 8 1 5Z" fill="#5a9a5a" stroke="#3a6a3a" stroke-width="0.6"/><circle cx="4.5" cy="5" r="1.2" fill="#e8f0e8"/><circle cx="11.5" cy="5" r="1.2" fill="#e8f0e8"/><path d="M7 9 L11 13 M5 11 v4" stroke="#777" stroke-width="1.3"/><text x="12.5" y="15.5" font-family="Liberation Serif, serif" font-size="8" font-weight="bold" text-anchor="middle" fill="#555">Σ</text></svg>
<span class="t" style="left:79px;top:265.5px;font-size:14.5px;color:#000;letter-spacing:0.244px;">Contar puntos en polígono</span>
<svg class="ic" style="left:54px;top:288px" width="18" height="18" viewBox="0 0 16 16"><g fill="#5f7f9f"><path d="M1 1 h5 l-1.8 1.8 l2 2 l-1.4 1.4 l-2 -2 L1 6z"/><path d="M15 1 v5 l-1.8 -1.8 l-2 2 l-1.4 -1.4 l2 -2 L10 1z"/><path d="M1 15 v-5 l1.8 1.8 l2 -2 l1.4 1.4 l-2 2 L6 15z"/><path d="M15 15 h-5 l1.8 -1.8 l-2 -2 l1.4 -1.4 l2 2 L15 10z"/></g><circle cx="8" cy="8" r="1.6" fill="#888"/></svg>
<span class="t" style="left:79px;top:287.5px;font-size:14.5px;color:#000;letter-spacing:0.111px;">Coordenada(s) media(s)</span>
<svg class="ic" style="left:54px;top:310px" width="18" height="18" viewBox="0 0 16 16"><line x1="11.96" y1="9.64" x2="14.49" y2="10.69" stroke="#86a7dc" stroke-width="2.26" stroke-linecap="round"/><line x1="9.64" y1="11.96" x2="10.69" y2="14.49" stroke="#86a7dc" stroke-width="2.26" stroke-linecap="round"/><line x1="6.36" y1="11.96" x2="5.31" y2="14.49" stroke="#86a7dc" stroke-width="2.26" stroke-linecap="round"/><line x1="4.04" y1="9.64" x2="1.51" y2="10.69" stroke="#86a7dc" stroke-width="2.26" stroke-linecap="round"/><line x1="4.04" y1="6.36" x2="1.51" y2="5.31" stroke="#86a7dc" stroke-width="2.26" stroke-linecap="round"/><line x1="6.36" y1="4.04" x2="5.31" y2="1.51" stroke="#86a7dc" stroke-width="2.26" stroke-linecap="round"/><line x1="9.64" y1="4.04" x2="10.69" y2="1.51" stroke="#86a7dc" stroke-width="2.26" stroke-linecap="round"/><line x1="11.96" y1="6.36" x2="14.49" y2="5.31" stroke="#86a7dc" stroke-width="2.26" stroke-linecap="round"/><circle cx="8" cy="8" r="5.46" fill="#86a7dc"/><circle cx="8" cy="8" r="1.95" fill="#ffffff"/></svg>
<span class="t" style="left:79px;top:309.5px;font-size:14.5px;color:#000;letter-spacing:0.184px;">Distancia al eje más próximo (línea a eje)</span>
<svg class="ic" style="left:54px;top:332px" width="18" height="18" viewBox="0 0 16 16"><line x1="11.96" y1="9.64" x2="14.49" y2="10.69" stroke="#86a7dc" stroke-width="2.26" stroke-linecap="round"/><line x1="9.64" y1="11.96" x2="10.69" y2="14.49" stroke="#86a7dc" stroke-width="2.26" stroke-linecap="round"/><line x1="6.36" y1="11.96" x2="5.31" y2="14.49" stroke="#86a7dc" stroke-width="2.26" stroke-linecap="round"/><line x1="4.04" y1="9.64" x2="1.51" y2="10.69" stroke="#86a7dc" stroke-width="2.26" stroke-linecap="round"/><line x1="4.04" y1="6.36" x2="1.51" y2="5.31" stroke="#86a7dc" stroke-width="2.26" stroke-linecap="round"/><line x1="6.36" y1="4.04" x2="5.31" y2="1.51" stroke="#86a7dc" stroke-width="2.26" stroke-linecap="round"/><line x1="9.64" y1="4.04" x2="10.69" y2="1.51" stroke="#86a7dc" stroke-width="2.26" stroke-linecap="round"/><line x1="11.96" y1="6.36" x2="14.49" y2="5.31" stroke="#86a7dc" stroke-width="2.26" stroke-linecap="round"/><circle cx="8" cy="8" r="5.46" fill="#86a7dc"/><circle cx="8" cy="8" r="1.95" fill="#ffffff"/></svg>
<span class="t" style="left:79px;top:331.5px;font-size:14.5px;color:#000;letter-spacing:0.214px;">Distancia al eje más próximo (puntos)</span>
<svg class="ic" style="left:54px;top:354px" width="18" height="18" viewBox="0 0 16 16"><text x="8" y="14.500" font-family="Liberation Serif, serif" font-size="19" font-weight="bold" text-anchor="middle" fill="#6a87a8">Σ</text></svg>
<span class="t" style="left:79px;top:353.5px;font-size:14.5px;color:#000;letter-spacing:-0.051px;">Estadísticas básicas para campos</span>
<svg class="ic" style="left:54px;top:376px" width="18" height="18" viewBox="0 0 16 16"><text x="8" y="14.500" font-family="Liberation Serif, serif" font-size="19" font-weight="bold" text-anchor="middle" fill="#6a87a8">Σ</text></svg>
<span class="t" style="left:79px;top:375.5px;font-size:14.5px;color:#000;letter-spacing:0.033px;">Estadísticas por categorías</span>
<svg class="ic" style="left:54px;top:398px" width="18" height="18" viewBox="0 0 16 16"><rect x="1" y="1" width="11" height="3.4" fill="#7aa870" stroke="#4a7a4a" stroke-width="0.5"/><rect x="3" y="5" width="11" height="3.4" fill="#6a8fae" stroke="#4a6f8e" stroke-width="0.5"/><rect x="2" y="9" width="12" height="2.6" fill="#8a8a8a"/><rect x="3" y="12.2" width="12" height="3" fill="#f0f0f0" stroke="#999" stroke-width="0.6"/></svg>
<span class="t" style="left:79px;top:397.5px;font-size:14.5px;color:#000;letter-spacing:-0.027px;">Listar valores únicos</span>
<svg class="ic" style="left:54px;top:420px" width="18" height="18" viewBox="0 0 16 16"><rect x="0.7" y="0.7" width="14.6" height="14.6" fill="#fafafa" stroke="#777" stroke-width="0.9"/><path d="M1 1 L15 15 H1Z" fill="#8a8a8a"/><path d="M1 4.5 H15 M1 8 H15 M1 11.5 H15 M4.5 1 V15 M8 1 V15 M11.5 1 V15" stroke="#c8c8c8" stroke-width="0.5"/></svg>
<span class="t" style="left:79px;top:419.5px;font-size:14.5px;color:#000;letter-spacing:0.243px;">Matriz de distancia</span>
<svg class="ic" style="left:54px;top:442px" width="18" height="18" viewBox="0 0 16 16"><path d="M1 7 C1 4 5 4 8 5.5 C11 4 15 4 15 7 C15 10 11 10.5 8 9.5 C5 10.5 1 10 1 7Z" fill="#7ab06a" stroke="#3a6a3a" stroke-width="0.6"/><path d="M1 14 L15 1" stroke="#555" stroke-width="1.3"/><text x="12.5" y="15.8" font-family="Liberation Serif, serif" font-size="8" font-weight="bold" text-anchor="middle" fill="#555">Σ</text></svg>
<span class="t" style="left:79px;top:441.5px;font-size:14.5px;color:#000;letter-spacing:0.171px;">Sumar longitud de líneas</span>
<svg class="ic" style="left:54px;top:464px" width="18" height="18" viewBox="0 0 16 16"><line x1="11.96" y1="9.64" x2="14.49" y2="10.69" stroke="#86a7dc" stroke-width="2.26" stroke-linecap="round"/><line x1="9.64" y1="11.96" x2="10.69" y2="14.49" stroke="#86a7dc" stroke-width="2.26" stroke-linecap="round"/><line x1="6.36" y1="11.96" x2="5.31" y2="14.49" stroke="#86a7dc" stroke-width="2.26" stroke-linecap="round"/><line x1="4.04" y1="9.64" x2="1.51" y2="10.69" stroke="#86a7dc" stroke-width="2.26" stroke-linecap="round"/><line x1="4.04" y1="6.36" x2="1.51" y2="5.31" stroke="#86a7dc" stroke-width="2.26" stroke-linecap="round"/><line x1="6.36" y1="4.04" x2="5.31" y2="1.51" stroke="#86a7dc" stroke-width="2.26" stroke-linecap="round"/><line x1="9.64" y1="4.04" x2="10.69" y2="1.51" stroke="#86a7dc" stroke-width="2.26" stroke-linecap="round"/><line x1="11.96" y1="6.36" x2="14.49" y2="5.31" stroke="#86a7dc" stroke-width="2.26" stroke-linecap="round"/><circle cx="8" cy="8" r="5.46" fill="#86a7dc"/><circle cx="8" cy="8" r="1.95" fill="#ffffff"/></svg>
<span class="t" style="left:79px;top:463.5px;font-size:14.5px;color:#000;letter-spacing:0.074px;">Unir por líneas (líneas de eje)</span>
<svg class="ic" style="left:8px;top:493px" width="9" height="5" viewBox="0 0 9 5"><path d="M0 0 H9 L4.500 5Z" fill="#555"/></svg>
<svg class="ic" style="left:29px;top:486px" width="18" height="18" viewBox="0 0 16 16"><circle cx="8" cy="8" r="5.6" fill="none" stroke="#7ba23f" stroke-width="3.4"/><path d="M8.5 8.5 L15 15" stroke="#7ba23f" stroke-width="3.2"/><path d="M8 7.5 L12.5 12" stroke="#f0b41c" stroke-width="1.6"/><circle cx="7.8" cy="7.3" r="1.5" fill="#e8682c"/></svg>
<span class="t" style="left:54px;top:485.5px;font-size:14.5px;color:#000;letter-spacing:-0.018px;">Análisis ráster</span>
<svg class="ic" style="left:54px;top:508px" width="18" height="18" viewBox="0 0 16 16"><line x1="11.96" y1="9.64" x2="14.49" y2="10.69" stroke="#86a7dc" stroke-width="2.26" stroke-linecap="round"/><line x1="9.64" y1="11.96" x2="10.69" y2="14.49" stroke="#86a7dc" stroke-width="2.26" stroke-linecap="round"/><line x1="6.36" y1="11.96" x2="5.31" y2="14.49" stroke="#86a7dc" stroke-width="2.26" stroke-linecap="round"/><line x1="4.04" y1="9.64" x2="1.51" y2="10.69" stroke="#86a7dc" stroke-width="2.26" stroke-linecap="round"/><line x1="4.04" y1="6.36" x2="1.51" y2="5.31" stroke="#86a7dc" stroke-width="2.26" stroke-linecap="round"/><line x1="6.36" y1="4.04" x2="5.31" y2="1.51" stroke="#86a7dc" stroke-width="2.26" stroke-linecap="round"/><line x1="9.64" y1="4.04" x2="10.69" y2="1.51" stroke="#86a7dc" stroke-width="2.26" stroke-linecap="round"/><line x1="11.96" y1="6.36" x2="14.49" y2="5.31" stroke="#86a7dc" stroke-width="2.26" stroke-linecap="round"/><circle cx="8" cy="8" r="5.46" fill="#86a7dc"/><circle cx="8" cy="8" r="1.95" fill="#ffffff"/></svg>
<span class="t" style="left:79px;top:507.5px;font-size:14.5px;color:#000;letter-spacing:0.261px;">Histograma zonal</span>
<svg class="ic" style="left:8px;top:537px" width="9" height="5" viewBox="0 0 9 5"><path d="M0 0 H9 L4.500 5Z" fill="#555"/></svg>
<svg class="ic" style="left:29px;top:530px" width="18" height="18" viewBox="0 0 16 16"><circle cx="8" cy="8" r="5.6" fill="none" stroke="#7ba23f" stroke-width="3.4"/><path d="M8.5 8.5 L15 15" stroke="#7ba23f" stroke-width="3.2"/><path d="M8 7.5 L12.5 12" stroke="#f0b41c" stroke-width="1.6"/><circle cx="7.8" cy="7.3" r="1.5" fill="#e8682c"/></svg>
<span class="t" style="left:54px;top:529.5px;font-size:14.5px;color:#000;letter-spacing:0.006px;">Base de datos</span>
<svg class="ic" style="left:54px;top:552px" width="18" height="18" viewBox="0 0 16 16"><line x1="11.96" y1="9.64" x2="14.49" y2="10.69" stroke="#86a7dc" stroke-width="2.26" stroke-linecap="round"/><line x1="9.64" y1="11.96" x2="10.69" y2="14.49" stroke="#86a7dc" stroke-width="2.26" stroke-linecap="round"/><line x1="6.36" y1="11.96" x2="5.31" y2="14.49" stroke="#86a7dc" stroke-width="2.26" stroke-linecap="round"/><line x1="4.04" y1="9.64" x2="1.51" y2="10.69" stroke="#86a7dc" stroke-width="2.26" stroke-linecap="round"/><line x1="4.04" y1="6.36" x2="1.51" y2="5.31" stroke="#86a7dc" stroke-width="2.26" stroke-linecap="round"/><line x1="6.36" y1="4.04" x2="5.31" y2="1.51" stroke="#86a7dc" stroke-width="2.26" stroke-linecap="round"/><line x1="9.64" y1="4.04" x2="10.69" y2="1.51" stroke="#86a7dc" stroke-width="2.26" stroke-linecap="round"/><line x1="11.96" y1="6.36" x2="14.49" y2="5.31" stroke="#86a7dc" stroke-width="2.26" stroke-linecap="round"/><circle cx="8" cy="8" r="5.46" fill="#86a7dc"/><circle cx="8" cy="8" r="1.95" fill="#ffffff"/></svg>
<span class="t" style="left:79px;top:551.5px;font-size:14.5px;color:#000;letter-spacing:0.055px;">Empaquetar capas</span>
<svg class="ic" style="left:54px;top:574px" width="18" height="18" viewBox="0 0 16 16"><line x1="11.96" y1="9.64" x2="14.49" y2="10.69" stroke="#86a7dc" stroke-width="2.26" stroke-linecap="round"/><line x1="9.64" y1="11.96" x2="10.69" y2="14.49" stroke="#86a7dc" stroke-width="2.26" stroke-linecap="round"/><line x1="6.36" y1="11.96" x2="5.31" y2="14.49" stroke="#86a7dc" stroke-width="2.26" stroke-linecap="round"/><line x1="4.04" y1="9.64" x2="1.51" y2="10.69" stroke="#86a7dc" stroke-width="2.26" stroke-linecap="round"/><line x1="4.04" y1="6.36" x2="1.51" y2="5.31" stroke="#86a7dc" stroke-width="2.26" stroke-linecap="round"/><line x1="6.36" y1="4.04" x2="5.31" y2="1.51" stroke="#86a7dc" stroke-width="2.26" stroke-linecap="round"/><line x1="9.64" y1="4.04" x2="10.69" y2="1.51" stroke="#86a7dc" stroke-width="2.26" stroke-linecap="round"/><line x1="11.96" y1="6.36" x2="14.49" y2="5.31" stroke="#86a7dc" stroke-width="2.26" stroke-linecap="round"/><circle cx="8" cy="8" r="5.46" fill="#86a7dc"/><circle cx="8" cy="8" r="1.95" fill="#ffffff"/></svg>
<span class="t" style="left:79px;top:573.5px;font-size:14.5px;color:#000;letter-spacing:-0.158px;">Exportar a PostgreSQL</span>
<svg class="ic" style="left:54px;top:596px" width="18" height="18" viewBox="0 0 16 16"><line x1="11.96" y1="9.64" x2="14.49" y2="10.69" stroke="#86a7dc" stroke-width="2.26" stroke-linecap="round"/><line x1="9.64" y1="11.96" x2="10.69" y2="14.49" stroke="#86a7dc" stroke-width="2.26" stroke-linecap="round"/><line x1="6.36" y1="11.96" x2="5.31" y2="14.49" stroke="#86a7dc" stroke-width="2.26" stroke-linecap="round"/><line x1="4.04" y1="9.64" x2="1.51" y2="10.69" stroke="#86a7dc" stroke-width="2.26" stroke-linecap="round"/><line x1="4.04" y1="6.36" x2="1.51" y2="5.31" stroke="#86a7dc" stroke-width="2.26" stroke-linecap="round"/><line x1="6.36" y1="4.04" x2="5.31" y2="1.51" stroke="#86a7dc" stroke-width="2.26" stroke-linecap="round"/><line x1="9.64" y1="4.04" x2="10.69" y2="1.51" stroke="#86a7dc" stroke-width="2.26" stroke-linecap="round"/><line x1="11.96" y1="6.36" x2="14.49" y2="5.31" stroke="#86a7dc" stroke-width="2.26" stroke-linecap="round"/><circle cx="8" cy="8" r="5.46" fill="#86a7dc"/><circle cx="8" cy="8" r="1.95" fill="#ffffff"/></svg>
<span class="t" style="left:79px;top:595.5px;font-size:14.5px;color:#000;letter-spacing:0.104px;">Exportar a SpatiaLite</span>
<svg class="ic" style="left:8px;top:625px" width="9" height="5" viewBox="0 0 9 5"><path d="M0 0 H9 L4.500 5Z" fill="#555"/></svg>
<svg class="ic" style="left:29px;top:618px" width="18" height="18" viewBox="0 0 16 16"><circle cx="8" cy="8" r="5.6" fill="none" stroke="#7ba23f" stroke-width="3.4"/><path d="M8.5 8.5 L15 15" stroke="#7ba23f" stroke-width="3.2"/><path d="M8 7.5 L12.5 12" stroke="#f0b41c" stroke-width="1.6"/><circle cx="7.8" cy="7.3" r="1.5" fill="#e8682c"/></svg>
<span class="t" style="left:54px;top:617.5px;font-size:14.5px;color:#000;letter-spacing:0.132px;">Cartografía</span>
<svg class="ic" style="left:54px;top:640px" width="18" height="18" viewBox="0 0 16 16"><line x1="11.96" y1="9.64" x2="14.49" y2="10.69" stroke="#86a7dc" stroke-width="2.26" stroke-linecap="round"/><line x1="9.64" y1="11.96" x2="10.69" y2="14.49" stroke="#86a7dc" stroke-width="2.26" stroke-linecap="round"/><line x1="6.36" y1="11.96" x2="5.31" y2="14.49" stroke="#86a7dc" stroke-width="2.26" stroke-linecap="round"/><line x1="4.04" y1="9.64" x2="1.51" y2="10.69" stroke="#86a7dc" stroke-width="2.26" stroke-linecap="round"/><line x1="4.04" y1="6.36" x2="1.51" y2="5.31" stroke="#86a7dc" stroke-width="2.26" stroke-linecap="round"/><line x1="6.36" y1="4.04" x2="5.31" y2="1.51" stroke="#86a7dc" stroke-width="2.26" stroke-linecap="round"/><line x1="9.64" y1="4.04" x2="10.69" y2="1.51" stroke="#86a7dc" stroke-width="2.26" stroke-linecap="round"/><line x1="11.96" y1="6.36" x2="14.49" y2="5.31" stroke="#86a7dc" stroke-width="2.26" stroke-linecap="round"/><circle cx="8" cy="8" r="5.46" fill="#86a7dc"/><circle cx="8" cy="8" r="1.95" fill="#ffffff"/></svg>
<span class="t" style="left:79px;top:639.5px;font-size:14.5px;color:#000;letter-spacing:0.075px;">Crear representación categorizada desde esti...</span>
<svg class="ic" style="left:8px;top:669px" width="9" height="5" viewBox="0 0 9 5"><path d="M0 0 H9 L4.500 5Z" fill="#555"/></svg>
<svg class="ic" style="left:29px;top:662px" width="18" height="18" viewBox="0 0 16 16"><circle cx="8" cy="8" r="5.6" fill="none" stroke="#7ba23f" stroke-width="3.4"/><path d="M8.5 8.5 L15 15" stroke="#7ba23f" stroke-width="3.2"/><path d="M8 7.5 L12.5 12" stroke="#f0b41c" stroke-width="1.6"/><circle cx="7.8" cy="7.3" r="1.5" fill="#e8682c"/></svg>
<span class="t" style="left:54px;top:661.5px;font-size:14.5px;color:#000;letter-spacing:0.049px;">Creación de vectores</span>
<svg class="ic" style="left:54px;top:684px" width="18" height="18" viewBox="0 0 16 16"><line x1="11.96" y1="9.64" x2="14.49" y2="10.69" stroke="#86a7dc" stroke-width="2.26" stroke-linecap="round"/><line x1="9.64" y1="11.96" x2="10.69" y2="14.49" stroke="#86a7dc" stroke-width="2.26" stroke-linecap="round"/><line x1="6.36" y1="11.96" x2="5.31" y2="14.49" stroke="#86a7dc" stroke-width="2.26" stroke-linecap="round"/><line x1="4.04" y1="9.64" x2="1.51" y2="10.69" stroke="#86a7dc" stroke-width="2.26" stroke-linecap="round"/><line x1="4.04" y1="6.36" x2="1.51" y2="5.31" stroke="#86a7dc" stroke-width="2.26" stroke-linecap="round"/><line x1="6.36" y1="4.04" x2="5.31" y2="1.51" stroke="#86a7dc" stroke-width="2.26" stroke-linecap="round"/><line x1="9.64" y1="4.04" x2="10.69" y2="1.51" stroke="#86a7dc" stroke-width="2.26" stroke-linecap="round"/><line x1="11.96" y1="6.36" x2="14.49" y2="5.31" stroke="#86a7dc" stroke-width="2.26" stroke-linecap="round"/><circle cx="8" cy="8" r="5.46" fill="#86a7dc"/><circle cx="8" cy="8" r="1.95" fill="#ffffff"/></svg>
<span class="t" style="left:79px;top:683.5px;font-size:14.5px;color:#000;letter-spacing:0.119px;">Arreglo de líneas desplazadas (paralelas)</span>
<svg class="ic" style="left:54px;top:706px" width="18" height="18" viewBox="0 0 16 16"><line x1="11.96" y1="9.64" x2="14.49" y2="10.69" stroke="#86a7dc" stroke-width="2.26" stroke-linecap="round"/><line x1="9.64" y1="11.96" x2="10.69" y2="14.49" stroke="#86a7dc" stroke-width="2.26" stroke-linecap="round"/><line x1="6.36" y1="11.96" x2="5.31" y2="14.49" stroke="#86a7dc" stroke-width="2.26" stroke-linecap="round"/><line x1="4.04" y1="9.64" x2="1.51" y2="10.69" stroke="#86a7dc" stroke-width="2.26" stroke-linecap="round"/><line x1="4.04" y1="6.36" x2="1.51" y2="5.31" stroke="#86a7dc" stroke-width="2.26" stroke-linecap="round"/><line x1="6.36" y1="4.04" x2="5.31" y2="1.51" stroke="#86a7dc" stroke-width="2.26" stroke-linecap="round"/><line x1="9.64" y1="4.04" x2="10.69" y2="1.51" stroke="#86a7dc" stroke-width="2.26" stroke-linecap="round"/><line x1="11.96" y1="6.36" x2="14.49" y2="5.31" stroke="#86a7dc" stroke-width="2.26" stroke-linecap="round"/><circle cx="8" cy="8" r="5.46" fill="#86a7dc"/><circle cx="8" cy="8" r="1.95" fill="#ffffff"/></svg>
<span class="t" style="left:79px;top:705.5px;font-size:14.5px;color:#000;letter-spacing:-0.023px;">Arreglo de objetos trasladados</span>
</div>
<div class="b" style="left:1900px;top:280px;width:17px;height:715px;background:#e9e9e9;border-left:1px solid #d4d4d4;box-sizing:border-box;"></div>
<div class="b" style="left:1901px;top:280px;width:16px;height:17px;background:#fbfbfb;border-bottom:1px solid #d0d0d0;box-sizing:border-box;"></div>
<div class="b" style="left:1901px;top:978px;width:16px;height:17px;background:#fbfbfb;border-top:1px solid #d0d0d0;box-sizing:border-box;"></div>
<svg class="ic" style="left:1904px;top:286px" width="10" height="5" viewBox="0 0 10 5"><path d="M0 5 L5 0 L10 5Z" fill="#555"/></svg>
<svg class="ic" style="left:1904px;top:984px" width="10" height="5" viewBox="0 0 10 5"><path d="M0 0 L5 5 L10 0Z" fill="#555"/></svg>
<div class="b" style="left:1901px;top:296px;width:16px;height:48px;background:#fdfdfd;border-top:1px solid #d0d0d0;border-bottom:1px solid #d0d0d0;box-sizing:border-box;"></div>
<div class="b" style="left:2.5px;top:1000px;width:306.5px;height:24px;background:#fff;border:1px solid #c2c2c2;box-sizing:border-box;border-radius:3px;"></div>
<svg class="ic" style="left:11px;top:1005px" width="14" height="14" viewBox="0 0 14 14"><circle cx="5.500" cy="5.500" r="4" fill="none" stroke="#8a8a8a" stroke-width="1.2"/><line x1="8.500" y1="8.500" x2="12.500" y2="12.500" stroke="#8a8a8a" stroke-width="1.4"/></svg>
<span class="t" style="left:31px;top:1002.5px;font-size:13px;color:#8a8a8a;letter-spacing:-0.066px;">Escriba para localizar (Ctrl+K)</span>
<span class="t" style="left:317px;top:1003.5px;font-size:13px;color:#000;letter-spacing:-0.102px;">Eliminada una entrada de la leyenda.</span>
<span class="t" style="left:947px;top:1003.5px;font-size:13px;color:#000;letter-spacing:-0.356px;">Coordenada</span>
<div class="b" style="left:1020px;top:1001px;width:111px;height:23px;background:#fff;border:1px solid #c2c2c2;box-sizing:border-box;border-radius:2px;"></div>
<span class="t" style="left:1027px;top:1002.5px;font-size:13px;color:#000;letter-spacing:-0.186px;">692174,9887893</span>
<svg class="ic" style="left:1135px;top:1002px" width="20" height="20" viewBox="0 0 20 20"><circle cx="8" cy="7" r="5" fill="none" stroke="#333" stroke-width="1.6"/><path d="M5 5 L11 9 M11 5 L5 9" stroke="#333" stroke-width="1.2"/><path d="M9 11 L13 18 L14.500 14 L18 13Z" fill="#333"/><path d="M15 3 l2 -2" stroke="#333"/></svg>
<span class="t" style="left:1168px;top:1003.5px;font-size:13px;color:#000;transform:scaleX(0.8967);transform-origin:0 50%;">Escala</span>
<div class="b" style="left:1207px;top:1001px;width:92px;height:23px;background:#fff;border:1px solid #c2c2c2;box-sizing:border-box;border-radius:2px;"></div>
<span class="t" style="left:1212px;top:1002.5px;font-size:13px;color:#000;letter-spacing:-0.154px;">1:690339</span>
<svg class="ic" style="left:1279.5px;top:1010.0px" width="9" height="5" viewBox="0 0 9 5"><path d="M0 0 H9 L4.5 5Z" fill="#555"/></svg>
<svg class="ic" style="left:1311px;top:1002px" width="16" height="20" viewBox="0 0 16 20"><path d="M4 9 V6 a4 4 0 0 1 8 0 V9" fill="none" stroke="#8a8a8a" stroke-width="1.8"/><rect x="1.500" y="9" width="13" height="10" rx="1" fill="#7a7a7a"/></svg>
<span class="t" style="left:1337px;top:1003.5px;font-size:13px;color:#000;letter-spacing:-0.128px;">Amplificador</span>
<div class="b" style="left:1411px;top:1001px;width:92px;height:23px;background:#fff;border:1px solid #c2c2c2;box-sizing:border-box;border-radius:2px;"></div>
<div class="b" style="left:1486px;top:1002px;width:16px;height:21px;background:#f6f6f6;border-left:1px solid #dadada;box-sizing:border-box;"></div>
<svg class="ic" style="left:1489.5px;top:1004.5px" width="10" height="16" viewBox="0 0 10 16"><path d="M0.5 6.5 L5 1 L9.5 6.5Z M0.5 9.5 L5 15 L9.5 9.5Z" fill="#555"/></svg>
<span class="t" style="left:1416px;top:1003.0px;font-size:13px;color:#000;letter-spacing:-0.312px;">100%</span>
<span class="t" style="left:1513px;top:1003.5px;font-size:13px;color:#000;letter-spacing:-0.414px;">Rotación</span>
<div class="b" style="left:1571px;top:1001px;width:88px;height:23px;background:#fff;border:1px solid #c2c2c2;box-sizing:border-box;border-radius:2px;"></div>
<div class="b" style="left:1642px;top:1002px;width:16px;height:21px;background:#f6f6f6;border-left:1px solid #dadada;box-sizing:border-box;"></div>
<svg class="ic" style="left:1645.5px;top:1004.5px" width="10" height="16" viewBox="0 0 10 16"><path d="M0.5 6.5 L5 1 L9.5 6.5Z M0.5 9.5 L5 15 L9.5 9.5Z" fill="#555"/></svg>
<span class="t" style="left:1576px;top:1003.0px;font-size:13px;color:#000;letter-spacing:0.022px;">0,0 °</span>
<div class="b" style="left:1666px;top:1004px;width:17px;height:17px;background:#fff;border:1px solid #b8b8b8;box-sizing:border-box;"></div>
<svg class="ic" style="left:1666px;top:1004px" width="17" height="17" viewBox="0 0 17 17"><path d="M3.500 8.500 L7 13 L13.500 3.500" fill="none" stroke="#000" stroke-width="1.9"/></svg>
<span class="t" style="left:1689px;top:1002.5px;font-size:13px;color:#000;letter-spacing:-0.141px;">Representar</span>
<svg class="ic" style="left:1776px;top:1003px" width="19" height="19" viewBox="0 0 19 19"><ellipse cx="9.500" cy="9.500" rx="8.500" ry="7" fill="#f4f4f4" stroke="#777" stroke-width="1"/><ellipse cx="9.500" cy="9.500" rx="4" ry="7" fill="none" stroke="#777" stroke-width="0.9"/><path d="M1 9.500 H18 M2.500 5.500 H16.500 M2.500 13.500 H16.500 M9.500 2.500 V16.500" stroke="#777" stroke-width="0.9"/></svg>
<span class="t" style="left:1800px;top:1003.5px;font-size:13px;color:#000;transform:scaleX(0.9224);transform-origin:0 50%;">EPSG:32717</span>
<svg class="ic" style="left:1892px;top:1002px" width="22" height="21" viewBox="0 0 22 21"><path d="M11 1.500 C17 1.500 21 5 21 9.500 C21 14 17 17.500 11 17.500 C9.500 17.500 8.500 17.300 7.500 17 L3 19.500 L4.500 15.500 C2.500 14 1 12 1 9.500 C1 5 5 1.500 11 1.500Z" fill="#6a6a6a"/><circle cx="6.500" cy="9.500" r="1.400" fill="#fff"/><circle cx="11" cy="9.500" r="1.400" fill="#fff"/><circle cx="15.500" cy="9.500" r="1.400" fill="#fff"/></svg>
</div></body></html>
